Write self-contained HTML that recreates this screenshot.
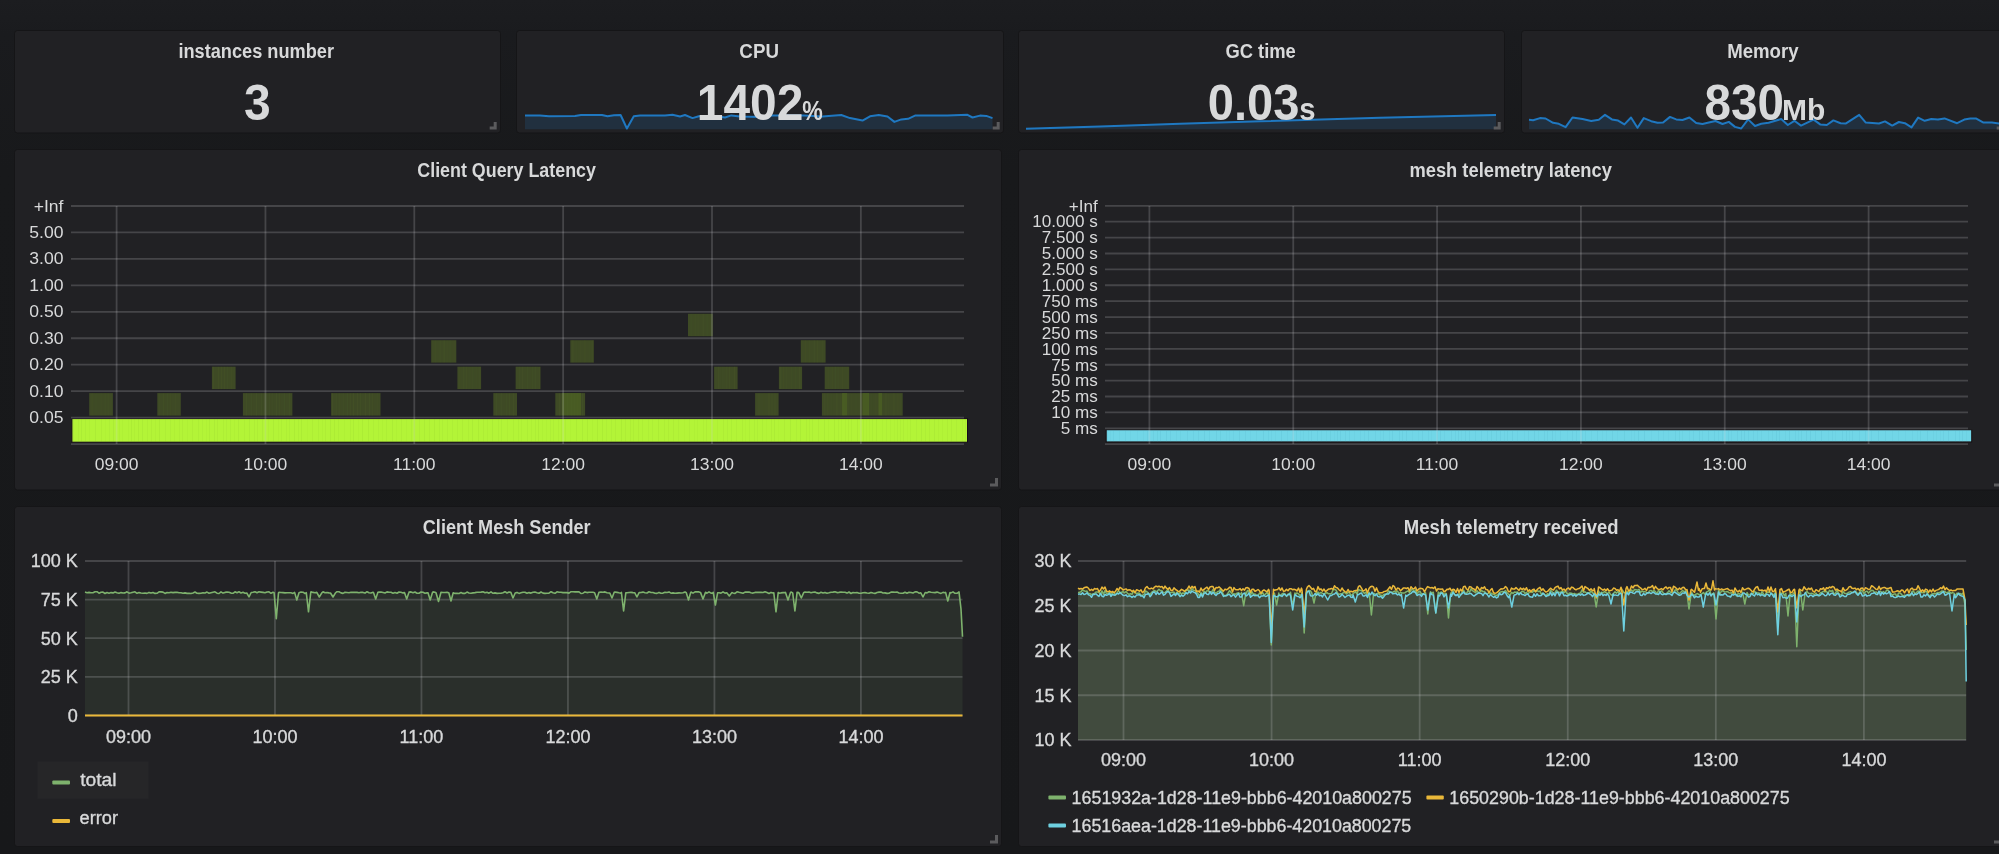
<!DOCTYPE html>
<html><head><meta charset="utf-8"><style>
html,body{margin:0;padding:0;background:#18191b;width:1999px;height:854px;overflow:hidden}
svg{display:block;font-family:"Liberation Sans", sans-serif;will-change:transform}
</style></head><body>
<svg width="1999" height="854" viewBox="0 0 1999 854">
<defs><linearGradient id="bgg" x1="0" y1="0" x2="0" y2="1"><stop offset="0" stop-color="#1c1d20"/><stop offset="0.04" stop-color="#1a1b1e"/><stop offset="0.2" stop-color="#18191b"/><stop offset="1" stop-color="#17181a"/></linearGradient></defs>
<rect width="1999" height="854" fill="url(#bgg)"/>
<rect x="14.5" y="30.5" width="486" height="102.5" rx="3" ry="3" fill="#212124" stroke="#151517" stroke-width="1"/>
<rect x="516.5" y="30.5" width="487" height="102.5" rx="3" ry="3" fill="#212124" stroke="#151517" stroke-width="1"/>
<rect x="1018.5" y="30.5" width="486" height="102.5" rx="3" ry="3" fill="#212124" stroke="#151517" stroke-width="1"/>
<rect x="1521.5" y="30.5" width="486" height="102.5" rx="3" ry="3" fill="#212124" stroke="#151517" stroke-width="1"/>
<path d="M525.0 115.4 L540.0 115.5 L549.0 116.3 L575.0 116.0 L581.0 115.0 L602.0 115.0 L607.5 116.3 L614.0 115.3 L620.6 115.0 L626.9 128.5 L633.8 116.3 L640.0 115.4 L665.0 115.6 L672.5 114.8 L680.0 116.5 L685.0 115.0 L692.5 118.1 L698.8 116.3 L715.0 116.0 L725.0 117.5 L731.3 115.4 L740.0 116.5 L760.0 116.9 L772.5 115.6 L803.8 115.4 L822.5 116.5 L841.3 115.0 L850.0 118.1 L862.5 120.6 L870.0 116.3 L878.8 115.0 L887.5 116.5 L894.4 121.9 L901.3 119.4 L908.1 118.8 L915.0 115.6 L947.5 115.6 L967.5 114.8 L972.5 117.5 L980.0 115.6 L986.3 115.9 L992.5 118.1 L992.5 129.2 L525.0 129.2 Z" fill="rgba(31,118,189,0.18)"/>
<path d="M525.0 115.4 L540.0 115.5 L549.0 116.3 L575.0 116.0 L581.0 115.0 L602.0 115.0 L607.5 116.3 L614.0 115.3 L620.6 115.0 L626.9 128.5 L633.8 116.3 L640.0 115.4 L665.0 115.6 L672.5 114.8 L680.0 116.5 L685.0 115.0 L692.5 118.1 L698.8 116.3 L715.0 116.0 L725.0 117.5 L731.3 115.4 L740.0 116.5 L760.0 116.9 L772.5 115.6 L803.8 115.4 L822.5 116.5 L841.3 115.0 L850.0 118.1 L862.5 120.6 L870.0 116.3 L878.8 115.0 L887.5 116.5 L894.4 121.9 L901.3 119.4 L908.1 118.8 L915.0 115.6 L947.5 115.6 L967.5 114.8 L972.5 117.5 L980.0 115.6 L986.3 115.9 L992.5 118.1" fill="none" stroke="#1f78c1" stroke-width="2" stroke-linejoin="round"/>
<path d="M1026.0 128.8 L1100.0 126.4 L1180.0 123.8 L1260.0 121.3 L1380.0 117.8 L1496.0 115.0 L1496.0 129.2 L1026.0 129.2 Z" fill="rgba(31,118,189,0.18)"/>
<path d="M1026.0 128.8 L1100.0 126.4 L1180.0 123.8 L1260.0 121.3 L1380.0 117.8 L1496.0 115.0" fill="none" stroke="#1f78c1" stroke-width="2" stroke-linejoin="round"/>
<path d="M1529.0 119.8 L1533.1 120.2 L1540.0 118.1 L1545.6 118.5 L1553.1 122.8 L1558.8 123.8 L1565.6 127.2 L1572.5 117.5 L1582.5 119.1 L1591.2 121.0 L1598.8 119.8 L1605.0 114.8 L1611.9 119.4 L1618.1 120.6 L1624.4 124.4 L1631.0 117.5 L1637.5 127.8 L1643.8 118.1 L1651.2 121.2 L1657.5 122.8 L1663.1 122.5 L1670.0 116.9 L1676.2 119.4 L1682.5 120.0 L1689.4 117.5 L1696.2 123.1 L1702.5 124.0 L1708.8 122.5 L1715.6 121.0 L1722.5 124.0 L1728.8 121.9 L1735.0 126.9 L1741.2 128.5 L1748.1 119.4 L1755.0 126.0 L1761.2 123.8 L1768.6 122.8 L1781.2 119.0 L1787.8 125.0 L1794.4 120.8 L1801.0 125.6 L1813.6 119.6 L1820.2 124.4 L1826.8 125.0 L1833.4 120.4 L1840.6 123.2 L1846.0 123.4 L1859.2 114.8 L1865.8 122.6 L1879.0 123.5 L1885.0 121.4 L1892.2 125.6 L1898.9 122.0 L1904.9 123.2 L1911.5 127.4 L1918.1 117.6 L1924.7 120.8 L1931.3 119.0 L1937.9 119.6 L1944.5 118.4 L1957.1 123.2 L1964.3 119.6 L1970.3 118.4 L1976.3 118.6 L1983.5 122.6 L1991.9 122.6 L2001.0 123.8 L2001.0 129.2 L1529.0 129.2 Z" fill="rgba(31,118,189,0.18)"/>
<path d="M1529.0 119.8 L1533.1 120.2 L1540.0 118.1 L1545.6 118.5 L1553.1 122.8 L1558.8 123.8 L1565.6 127.2 L1572.5 117.5 L1582.5 119.1 L1591.2 121.0 L1598.8 119.8 L1605.0 114.8 L1611.9 119.4 L1618.1 120.6 L1624.4 124.4 L1631.0 117.5 L1637.5 127.8 L1643.8 118.1 L1651.2 121.2 L1657.5 122.8 L1663.1 122.5 L1670.0 116.9 L1676.2 119.4 L1682.5 120.0 L1689.4 117.5 L1696.2 123.1 L1702.5 124.0 L1708.8 122.5 L1715.6 121.0 L1722.5 124.0 L1728.8 121.9 L1735.0 126.9 L1741.2 128.5 L1748.1 119.4 L1755.0 126.0 L1761.2 123.8 L1768.6 122.8 L1781.2 119.0 L1787.8 125.0 L1794.4 120.8 L1801.0 125.6 L1813.6 119.6 L1820.2 124.4 L1826.8 125.0 L1833.4 120.4 L1840.6 123.2 L1846.0 123.4 L1859.2 114.8 L1865.8 122.6 L1879.0 123.5 L1885.0 121.4 L1892.2 125.6 L1898.9 122.0 L1904.9 123.2 L1911.5 127.4 L1918.1 117.6 L1924.7 120.8 L1931.3 119.0 L1937.9 119.6 L1944.5 118.4 L1957.1 123.2 L1964.3 119.6 L1970.3 118.4 L1976.3 118.6 L1983.5 122.6 L1991.9 122.6 L2001.0 123.8" fill="none" stroke="#1f78c1" stroke-width="2" stroke-linejoin="round"/>
<path d="M493.7 122.0h3v7.5h-7.0v-3h4.0z" fill="#5b5b5d"/>
<path d="M996.7 122.0h3v7.5h-7.0v-3h4.0z" fill="#5b5b5d"/>
<path d="M1497.7 122.0h3v7.5h-7.0v-3h4.0z" fill="#5b5b5d"/>
<path d="M2000.7 122.0h3v7.5h-7.0v-3h4.0z" fill="#5b5b5d"/>
<text x="178.39" y="58.2" font-size="20" font-weight="bold" fill="#d8d9da" textLength="155.67" lengthAdjust="spacingAndGlyphs">instances number</text>
<text x="739.36" y="58.3" font-size="20" font-weight="bold" fill="#d8d9da" textLength="39.59" lengthAdjust="spacingAndGlyphs">CPU</text>
<text x="1225.38" y="58.3" font-size="20" font-weight="bold" fill="#d8d9da" textLength="70.45" lengthAdjust="spacingAndGlyphs">GC time</text>
<text x="1727.17" y="58.3" font-size="20" font-weight="bold" fill="#d8d9da" textLength="71.46" lengthAdjust="spacingAndGlyphs">Memory</text>
<text x="243.94" y="119.8" font-size="50" font-weight="bold" fill="#d8d9da" textLength="26.70" lengthAdjust="spacingAndGlyphs">3</text>
<text x="696.83" y="119.5" font-size="50" font-weight="bold" fill="#d8d9da" textLength="106.51" lengthAdjust="spacingAndGlyphs">1402</text>
<text x="802.14" y="119.5" font-size="27" font-weight="bold" fill="#d8d9da" textLength="20.57" lengthAdjust="spacingAndGlyphs">%</text>
<text x="1207.82" y="119.5" font-size="50" font-weight="bold" fill="#d8d9da" textLength="91.63" lengthAdjust="spacingAndGlyphs">0.03</text>
<text x="1299.35" y="119.5" font-size="31" font-weight="bold" fill="#d8d9da" textLength="16.33" lengthAdjust="spacingAndGlyphs">s</text>
<text x="1704.45" y="119.5" font-size="50" font-weight="bold" fill="#d8d9da" textLength="79.47" lengthAdjust="spacingAndGlyphs">830</text>
<text x="1782.00" y="119.5" font-size="30" font-weight="bold" fill="#d8d9da" textLength="43.33" lengthAdjust="spacingAndGlyphs">Mb</text>
<rect x="14.5" y="149.5" width="987" height="340.5" rx="3" ry="3" fill="#212124" stroke="#151517" stroke-width="1"/>
<text x="417.31" y="177.2" font-size="20" font-weight="bold" fill="#d8d9da" textLength="178.65" lengthAdjust="spacingAndGlyphs">Client Query Latency</text>
<rect x="688" y="313.8" width="24.8" height="22.4" fill="#3e4a25"/>
<rect x="690.6" y="313.8" width="1" height="22.4" fill="rgba(80,100,45,0.17)"/>
<rect x="694.6" y="313.8" width="1" height="22.4" fill="rgba(80,100,45,0.15)"/>
<rect x="697.6" y="313.8" width="1" height="22.4" fill="rgba(80,100,45,0.13)"/>
<rect x="702.6" y="313.8" width="1" height="22.4" fill="rgba(80,100,45,0.22)"/>
<rect x="706.6" y="313.8" width="1" height="22.4" fill="rgba(80,100,45,0.17)"/>
<rect x="709.6" y="313.8" width="1" height="22.4" fill="rgba(80,100,45,0.14)"/>
<rect x="431.2" y="340.2" width="25.1" height="22.4" fill="#3e4a25"/>
<rect x="434.6" y="340.2" width="1" height="22.4" fill="rgba(80,100,45,0.15)"/>
<rect x="439.6" y="340.2" width="1" height="22.4" fill="rgba(80,100,45,0.18)"/>
<rect x="443.6" y="340.2" width="1" height="22.4" fill="rgba(80,100,45,0.25)"/>
<rect x="446.6" y="340.2" width="1" height="22.4" fill="rgba(80,100,45,0.13)"/>
<rect x="449.6" y="340.2" width="1" height="22.4" fill="rgba(80,100,45,0.17)"/>
<rect x="453.6" y="340.2" width="1" height="22.4" fill="rgba(80,100,45,0.12)"/>
<rect x="570.3" y="340.2" width="23.5" height="22.4" fill="#3e4a25"/>
<rect x="572.4" y="340.2" width="1" height="22.4" fill="rgba(80,100,45,0.24)"/>
<rect x="576.4" y="340.2" width="1" height="22.4" fill="rgba(80,100,45,0.09)"/>
<rect x="580.4" y="340.2" width="1" height="22.4" fill="rgba(80,100,45,0.11)"/>
<rect x="584.4" y="340.2" width="1" height="22.4" fill="rgba(80,100,45,0.19)"/>
<rect x="589.4" y="340.2" width="1" height="22.4" fill="rgba(80,100,45,0.09)"/>
<rect x="592.4" y="340.2" width="1" height="22.4" fill="rgba(80,100,45,0.16)"/>
<rect x="800.8" y="340.2" width="24.8" height="22.4" fill="#3e4a25"/>
<rect x="804.7" y="340.2" width="1" height="22.4" fill="rgba(80,100,45,0.16)"/>
<rect x="808.7" y="340.2" width="1" height="22.4" fill="rgba(80,100,45,0.18)"/>
<rect x="813.7" y="340.2" width="1" height="22.4" fill="rgba(80,100,45,0.22)"/>
<rect x="816.7" y="340.2" width="1" height="22.4" fill="rgba(80,100,45,0.19)"/>
<rect x="821.7" y="340.2" width="1" height="22.4" fill="rgba(80,100,45,0.15)"/>
<rect x="211.9" y="366.7" width="23.7" height="22.4" fill="#3e4a25"/>
<rect x="213.2" y="366.7" width="1" height="22.4" fill="rgba(80,100,45,0.24)"/>
<rect x="218.2" y="366.7" width="1" height="22.4" fill="rgba(80,100,45,0.24)"/>
<rect x="221.2" y="366.7" width="1" height="22.4" fill="rgba(80,100,45,0.24)"/>
<rect x="224.2" y="366.7" width="1" height="22.4" fill="rgba(80,100,45,0.24)"/>
<rect x="227.2" y="366.7" width="1" height="22.4" fill="rgba(80,100,45,0.17)"/>
<rect x="231.2" y="366.7" width="1" height="22.4" fill="rgba(80,100,45,0.16)"/>
<rect x="457.4" y="366.7" width="23.7" height="22.4" fill="#3e4a25"/>
<rect x="459.3" y="366.7" width="1" height="22.4" fill="rgba(80,100,45,0.12)"/>
<rect x="463.3" y="366.7" width="1" height="22.4" fill="rgba(80,100,45,0.24)"/>
<rect x="466.3" y="366.7" width="1" height="22.4" fill="rgba(80,100,45,0.19)"/>
<rect x="469.3" y="366.7" width="1" height="22.4" fill="rgba(80,100,45,0.14)"/>
<rect x="472.3" y="366.7" width="1" height="22.4" fill="rgba(80,100,45,0.17)"/>
<rect x="476.3" y="366.7" width="1" height="22.4" fill="rgba(80,100,45,0.10)"/>
<rect x="479.3" y="366.7" width="1" height="22.4" fill="rgba(80,100,45,0.18)"/>
<rect x="515.6" y="366.7" width="24.9" height="22.4" fill="#3e4a25"/>
<rect x="518.8" y="366.7" width="1" height="22.4" fill="rgba(80,100,45,0.17)"/>
<rect x="521.8" y="366.7" width="1" height="22.4" fill="rgba(80,100,45,0.22)"/>
<rect x="526.8" y="366.7" width="1" height="22.4" fill="rgba(80,100,45,0.17)"/>
<rect x="531.8" y="366.7" width="1" height="22.4" fill="rgba(80,100,45,0.15)"/>
<rect x="534.8" y="366.7" width="1" height="22.4" fill="rgba(80,100,45,0.21)"/>
<rect x="538.8" y="366.7" width="1" height="22.4" fill="rgba(80,100,45,0.12)"/>
<rect x="714.1" y="366.7" width="23.5" height="22.4" fill="#3e4a25"/>
<rect x="717.9" y="366.7" width="1" height="22.4" fill="rgba(80,100,45,0.16)"/>
<rect x="721.9" y="366.7" width="1" height="22.4" fill="rgba(80,100,45,0.08)"/>
<rect x="725.9" y="366.7" width="1" height="22.4" fill="rgba(80,100,45,0.14)"/>
<rect x="728.9" y="366.7" width="1" height="22.4" fill="rgba(80,100,45,0.16)"/>
<rect x="733.9" y="366.7" width="1" height="22.4" fill="rgba(80,100,45,0.23)"/>
<rect x="778.9" y="366.7" width="23.2" height="22.4" fill="#3e4a25"/>
<rect x="780.3" y="366.7" width="1" height="22.4" fill="rgba(80,100,45,0.23)"/>
<rect x="783.3" y="366.7" width="1" height="22.4" fill="rgba(80,100,45,0.16)"/>
<rect x="786.3" y="366.7" width="1" height="22.4" fill="rgba(80,100,45,0.15)"/>
<rect x="791.3" y="366.7" width="1" height="22.4" fill="rgba(80,100,45,0.17)"/>
<rect x="795.3" y="366.7" width="1" height="22.4" fill="rgba(80,100,45,0.17)"/>
<rect x="799.3" y="366.7" width="1" height="22.4" fill="rgba(80,100,45,0.23)"/>
<rect x="824.7" y="366.7" width="24.5" height="22.4" fill="#3e4a25"/>
<rect x="828.2" y="366.7" width="1" height="22.4" fill="rgba(80,100,45,0.11)"/>
<rect x="832.2" y="366.7" width="1" height="22.4" fill="rgba(80,100,45,0.14)"/>
<rect x="835.2" y="366.7" width="1" height="22.4" fill="rgba(80,100,45,0.17)"/>
<rect x="838.2" y="366.7" width="1" height="22.4" fill="rgba(80,100,45,0.09)"/>
<rect x="842.2" y="366.7" width="1" height="22.4" fill="rgba(80,100,45,0.16)"/>
<rect x="847.2" y="366.7" width="1" height="22.4" fill="rgba(80,100,45,0.09)"/>
<rect x="89.2" y="393.1" width="23.7" height="22.5" fill="#3e4a25"/>
<rect x="91.6" y="393.1" width="1" height="22.5" fill="rgba(80,100,45,0.19)"/>
<rect x="95.6" y="393.1" width="1" height="22.5" fill="rgba(80,100,45,0.10)"/>
<rect x="100.6" y="393.1" width="1" height="22.5" fill="rgba(80,100,45,0.13)"/>
<rect x="104.6" y="393.1" width="1" height="22.5" fill="rgba(80,100,45,0.18)"/>
<rect x="107.6" y="393.1" width="1" height="22.5" fill="rgba(80,100,45,0.18)"/>
<rect x="157.3" y="393.1" width="23.5" height="22.5" fill="#3e4a25"/>
<rect x="159.2" y="393.1" width="1" height="22.5" fill="rgba(80,100,45,0.13)"/>
<rect x="163.2" y="393.1" width="1" height="22.5" fill="rgba(80,100,45,0.19)"/>
<rect x="167.2" y="393.1" width="1" height="22.5" fill="rgba(80,100,45,0.17)"/>
<rect x="170.2" y="393.1" width="1" height="22.5" fill="rgba(80,100,45,0.14)"/>
<rect x="175.2" y="393.1" width="1" height="22.5" fill="rgba(80,100,45,0.12)"/>
<rect x="242.9" y="393.1" width="49.5" height="22.5" fill="#3e4a25"/>
<rect x="246.1" y="393.1" width="1" height="22.5" fill="rgba(80,100,45,0.22)"/>
<rect x="251.1" y="393.1" width="1" height="22.5" fill="rgba(80,100,45,0.15)"/>
<rect x="256.1" y="393.1" width="1" height="22.5" fill="rgba(80,100,45,0.22)"/>
<rect x="261.1" y="393.1" width="1" height="22.5" fill="rgba(80,100,45,0.20)"/>
<rect x="265.1" y="393.1" width="1" height="22.5" fill="rgba(80,100,45,0.10)"/>
<rect x="269.1" y="393.1" width="1" height="22.5" fill="rgba(80,100,45,0.15)"/>
<rect x="272.1" y="393.1" width="1" height="22.5" fill="rgba(80,100,45,0.11)"/>
<rect x="276.1" y="393.1" width="1" height="22.5" fill="rgba(80,100,45,0.22)"/>
<rect x="279.1" y="393.1" width="1" height="22.5" fill="rgba(80,100,45,0.16)"/>
<rect x="284.1" y="393.1" width="1" height="22.5" fill="rgba(80,100,45,0.17)"/>
<rect x="289.1" y="393.1" width="1" height="22.5" fill="rgba(80,100,45,0.19)"/>
<rect x="331.1" y="393.1" width="49.4" height="22.5" fill="#3e4a25"/>
<rect x="332.1" y="393.1" width="1" height="22.5" fill="rgba(80,100,45,0.23)"/>
<rect x="336.1" y="393.1" width="1" height="22.5" fill="rgba(80,100,45,0.09)"/>
<rect x="339.1" y="393.1" width="1" height="22.5" fill="rgba(80,100,45,0.13)"/>
<rect x="343.1" y="393.1" width="1" height="22.5" fill="rgba(80,100,45,0.10)"/>
<rect x="347.1" y="393.1" width="1" height="22.5" fill="rgba(80,100,45,0.17)"/>
<rect x="350.1" y="393.1" width="1" height="22.5" fill="rgba(80,100,45,0.16)"/>
<rect x="353.1" y="393.1" width="1" height="22.5" fill="rgba(80,100,45,0.25)"/>
<rect x="357.1" y="393.1" width="1" height="22.5" fill="rgba(80,100,45,0.23)"/>
<rect x="360.1" y="393.1" width="1" height="22.5" fill="rgba(80,100,45,0.19)"/>
<rect x="365.1" y="393.1" width="1" height="22.5" fill="rgba(80,100,45,0.23)"/>
<rect x="369.1" y="393.1" width="1" height="22.5" fill="rgba(80,100,45,0.24)"/>
<rect x="372.1" y="393.1" width="1" height="22.5" fill="rgba(80,100,45,0.16)"/>
<rect x="377.1" y="393.1" width="1" height="22.5" fill="rgba(80,100,45,0.11)"/>
<rect x="493.3" y="393.1" width="23.7" height="22.5" fill="#3e4a25"/>
<rect x="495.8" y="393.1" width="1" height="22.5" fill="rgba(80,100,45,0.20)"/>
<rect x="500.8" y="393.1" width="1" height="22.5" fill="rgba(80,100,45,0.21)"/>
<rect x="505.8" y="393.1" width="1" height="22.5" fill="rgba(80,100,45,0.15)"/>
<rect x="508.8" y="393.1" width="1" height="22.5" fill="rgba(80,100,45,0.19)"/>
<rect x="512.8" y="393.1" width="1" height="22.5" fill="rgba(80,100,45,0.23)"/>
<rect x="555.3" y="393.1" width="29.8" height="22.5" fill="#3e4a25"/>
<rect x="559.0" y="393.1" width="1" height="22.5" fill="rgba(80,100,45,0.22)"/>
<rect x="563.0" y="393.1" width="1" height="22.5" fill="rgba(80,100,45,0.11)"/>
<rect x="567.0" y="393.1" width="1" height="22.5" fill="rgba(80,100,45,0.21)"/>
<rect x="571.0" y="393.1" width="1" height="22.5" fill="rgba(80,100,45,0.21)"/>
<rect x="574.0" y="393.1" width="1" height="22.5" fill="rgba(80,100,45,0.13)"/>
<rect x="577.0" y="393.1" width="1" height="22.5" fill="rgba(80,100,45,0.12)"/>
<rect x="582.0" y="393.1" width="1" height="22.5" fill="rgba(80,100,45,0.21)"/>
<rect x="755.1" y="393.1" width="23.5" height="22.5" fill="#3e4a25"/>
<rect x="758.5" y="393.1" width="1" height="22.5" fill="rgba(80,100,45,0.16)"/>
<rect x="763.5" y="393.1" width="1" height="22.5" fill="rgba(80,100,45,0.11)"/>
<rect x="768.5" y="393.1" width="1" height="22.5" fill="rgba(80,100,45,0.25)"/>
<rect x="771.5" y="393.1" width="1" height="22.5" fill="rgba(80,100,45,0.16)"/>
<rect x="774.5" y="393.1" width="1" height="22.5" fill="rgba(80,100,45,0.18)"/>
<rect x="821.9" y="393.1" width="80.8" height="22.5" fill="#3e4a25"/>
<rect x="824.4" y="393.1" width="1" height="22.5" fill="rgba(80,100,45,0.21)"/>
<rect x="827.4" y="393.1" width="1" height="22.5" fill="rgba(80,100,45,0.15)"/>
<rect x="831.4" y="393.1" width="1" height="22.5" fill="rgba(80,100,45,0.09)"/>
<rect x="836.4" y="393.1" width="1" height="22.5" fill="rgba(80,100,45,0.24)"/>
<rect x="840.4" y="393.1" width="1" height="22.5" fill="rgba(80,100,45,0.16)"/>
<rect x="843.4" y="393.1" width="1" height="22.5" fill="rgba(80,100,45,0.24)"/>
<rect x="847.4" y="393.1" width="1" height="22.5" fill="rgba(80,100,45,0.24)"/>
<rect x="851.4" y="393.1" width="1" height="22.5" fill="rgba(80,100,45,0.11)"/>
<rect x="855.4" y="393.1" width="1" height="22.5" fill="rgba(80,100,45,0.10)"/>
<rect x="860.4" y="393.1" width="1" height="22.5" fill="rgba(80,100,45,0.16)"/>
<rect x="864.4" y="393.1" width="1" height="22.5" fill="rgba(80,100,45,0.10)"/>
<rect x="868.4" y="393.1" width="1" height="22.5" fill="rgba(80,100,45,0.17)"/>
<rect x="871.4" y="393.1" width="1" height="22.5" fill="rgba(80,100,45,0.09)"/>
<rect x="875.4" y="393.1" width="1" height="22.5" fill="rgba(80,100,45,0.12)"/>
<rect x="879.4" y="393.1" width="1" height="22.5" fill="rgba(80,100,45,0.10)"/>
<rect x="882.4" y="393.1" width="1" height="22.5" fill="rgba(80,100,45,0.14)"/>
<rect x="885.4" y="393.1" width="1" height="22.5" fill="rgba(80,100,45,0.23)"/>
<rect x="888.4" y="393.1" width="1" height="22.5" fill="rgba(80,100,45,0.11)"/>
<rect x="893.4" y="393.1" width="1" height="22.5" fill="rgba(80,100,45,0.23)"/>
<rect x="897.4" y="393.1" width="1" height="22.5" fill="rgba(80,100,45,0.12)"/>
<rect x="900.4" y="393.1" width="1" height="22.5" fill="rgba(80,100,45,0.09)"/>
<rect x="842" y="393" width="5" height="22.3" fill="rgba(80,105,35,0.55)"/>
<rect x="862.5" y="393" width="6.5" height="22.3" fill="rgba(80,105,35,0.55)"/>
<rect x="878.5" y="393" width="3.5" height="22.3" fill="rgba(80,105,35,0.55)"/>
<rect x="562" y="393" width="19" height="22.3" fill="rgba(80,105,35,0.55)"/>
<rect x="71.9" y="418.6" width="895.6" height="23.6" fill="#b3f437" stroke="#140a1a" stroke-width="1"/>
<rect x="73.0" y="419.2" width="0.8" height="22.4" fill="rgba(120,170,40,0.11)"/>
<rect x="78.0" y="419.2" width="0.8" height="22.4" fill="rgba(120,170,40,0.12)"/>
<rect x="81.0" y="419.2" width="0.8" height="22.4" fill="rgba(120,170,40,0.13)"/>
<rect x="85.0" y="419.2" width="0.8" height="22.4" fill="rgba(120,170,40,0.11)"/>
<rect x="89.0" y="419.2" width="0.8" height="22.4" fill="rgba(120,170,40,0.06)"/>
<rect x="95.0" y="419.2" width="0.8" height="22.4" fill="rgba(120,170,40,0.13)"/>
<rect x="101.0" y="419.2" width="0.8" height="22.4" fill="rgba(120,170,40,0.10)"/>
<rect x="105.0" y="419.2" width="0.8" height="22.4" fill="rgba(120,170,40,0.05)"/>
<rect x="109.0" y="419.2" width="0.8" height="22.4" fill="rgba(120,170,40,0.09)"/>
<rect x="113.0" y="419.2" width="0.8" height="22.4" fill="rgba(120,170,40,0.13)"/>
<rect x="119.0" y="419.2" width="0.8" height="22.4" fill="rgba(120,170,40,0.06)"/>
<rect x="122.0" y="419.2" width="0.8" height="22.4" fill="rgba(120,170,40,0.06)"/>
<rect x="128.0" y="419.2" width="0.8" height="22.4" fill="rgba(120,170,40,0.06)"/>
<rect x="131.0" y="419.2" width="0.8" height="22.4" fill="rgba(120,170,40,0.14)"/>
<rect x="134.0" y="419.2" width="0.8" height="22.4" fill="rgba(120,170,40,0.07)"/>
<rect x="138.0" y="419.2" width="0.8" height="22.4" fill="rgba(120,170,40,0.14)"/>
<rect x="142.0" y="419.2" width="0.8" height="22.4" fill="rgba(120,170,40,0.13)"/>
<rect x="147.0" y="419.2" width="0.8" height="22.4" fill="rgba(120,170,40,0.08)"/>
<rect x="151.0" y="419.2" width="0.8" height="22.4" fill="rgba(120,170,40,0.10)"/>
<rect x="155.0" y="419.2" width="0.8" height="22.4" fill="rgba(120,170,40,0.07)"/>
<rect x="159.0" y="419.2" width="0.8" height="22.4" fill="rgba(120,170,40,0.14)"/>
<rect x="165.0" y="419.2" width="0.8" height="22.4" fill="rgba(120,170,40,0.08)"/>
<rect x="170.0" y="419.2" width="0.8" height="22.4" fill="rgba(120,170,40,0.09)"/>
<rect x="174.0" y="419.2" width="0.8" height="22.4" fill="rgba(120,170,40,0.07)"/>
<rect x="179.0" y="419.2" width="0.8" height="22.4" fill="rgba(120,170,40,0.08)"/>
<rect x="182.0" y="419.2" width="0.8" height="22.4" fill="rgba(120,170,40,0.10)"/>
<rect x="187.0" y="419.2" width="0.8" height="22.4" fill="rgba(120,170,40,0.06)"/>
<rect x="192.0" y="419.2" width="0.8" height="22.4" fill="rgba(120,170,40,0.12)"/>
<rect x="198.0" y="419.2" width="0.8" height="22.4" fill="rgba(120,170,40,0.11)"/>
<rect x="202.0" y="419.2" width="0.8" height="22.4" fill="rgba(120,170,40,0.09)"/>
<rect x="206.0" y="419.2" width="0.8" height="22.4" fill="rgba(120,170,40,0.06)"/>
<rect x="209.0" y="419.2" width="0.8" height="22.4" fill="rgba(120,170,40,0.14)"/>
<rect x="214.0" y="419.2" width="0.8" height="22.4" fill="rgba(120,170,40,0.13)"/>
<rect x="217.0" y="419.2" width="0.8" height="22.4" fill="rgba(120,170,40,0.10)"/>
<rect x="223.0" y="419.2" width="0.8" height="22.4" fill="rgba(120,170,40,0.08)"/>
<rect x="226.0" y="419.2" width="0.8" height="22.4" fill="rgba(120,170,40,0.09)"/>
<rect x="230.0" y="419.2" width="0.8" height="22.4" fill="rgba(120,170,40,0.11)"/>
<rect x="234.0" y="419.2" width="0.8" height="22.4" fill="rgba(120,170,40,0.06)"/>
<rect x="238.0" y="419.2" width="0.8" height="22.4" fill="rgba(120,170,40,0.13)"/>
<rect x="244.0" y="419.2" width="0.8" height="22.4" fill="rgba(120,170,40,0.08)"/>
<rect x="249.0" y="419.2" width="0.8" height="22.4" fill="rgba(120,170,40,0.13)"/>
<rect x="254.0" y="419.2" width="0.8" height="22.4" fill="rgba(120,170,40,0.12)"/>
<rect x="257.0" y="419.2" width="0.8" height="22.4" fill="rgba(120,170,40,0.10)"/>
<rect x="262.0" y="419.2" width="0.8" height="22.4" fill="rgba(120,170,40,0.13)"/>
<rect x="265.0" y="419.2" width="0.8" height="22.4" fill="rgba(120,170,40,0.09)"/>
<rect x="268.0" y="419.2" width="0.8" height="22.4" fill="rgba(120,170,40,0.07)"/>
<rect x="273.0" y="419.2" width="0.8" height="22.4" fill="rgba(120,170,40,0.13)"/>
<rect x="278.0" y="419.2" width="0.8" height="22.4" fill="rgba(120,170,40,0.07)"/>
<rect x="281.0" y="419.2" width="0.8" height="22.4" fill="rgba(120,170,40,0.08)"/>
<rect x="286.0" y="419.2" width="0.8" height="22.4" fill="rgba(120,170,40,0.08)"/>
<rect x="289.0" y="419.2" width="0.8" height="22.4" fill="rgba(120,170,40,0.11)"/>
<rect x="294.0" y="419.2" width="0.8" height="22.4" fill="rgba(120,170,40,0.14)"/>
<rect x="298.0" y="419.2" width="0.8" height="22.4" fill="rgba(120,170,40,0.11)"/>
<rect x="301.0" y="419.2" width="0.8" height="22.4" fill="rgba(120,170,40,0.14)"/>
<rect x="307.0" y="419.2" width="0.8" height="22.4" fill="rgba(120,170,40,0.05)"/>
<rect x="312.0" y="419.2" width="0.8" height="22.4" fill="rgba(120,170,40,0.12)"/>
<rect x="318.0" y="419.2" width="0.8" height="22.4" fill="rgba(120,170,40,0.11)"/>
<rect x="322.0" y="419.2" width="0.8" height="22.4" fill="rgba(120,170,40,0.06)"/>
<rect x="325.0" y="419.2" width="0.8" height="22.4" fill="rgba(120,170,40,0.12)"/>
<rect x="330.0" y="419.2" width="0.8" height="22.4" fill="rgba(120,170,40,0.13)"/>
<rect x="334.0" y="419.2" width="0.8" height="22.4" fill="rgba(120,170,40,0.14)"/>
<rect x="338.0" y="419.2" width="0.8" height="22.4" fill="rgba(120,170,40,0.11)"/>
<rect x="344.0" y="419.2" width="0.8" height="22.4" fill="rgba(120,170,40,0.06)"/>
<rect x="350.0" y="419.2" width="0.8" height="22.4" fill="rgba(120,170,40,0.08)"/>
<rect x="353.0" y="419.2" width="0.8" height="22.4" fill="rgba(120,170,40,0.13)"/>
<rect x="358.0" y="419.2" width="0.8" height="22.4" fill="rgba(120,170,40,0.06)"/>
<rect x="362.0" y="419.2" width="0.8" height="22.4" fill="rgba(120,170,40,0.14)"/>
<rect x="368.0" y="419.2" width="0.8" height="22.4" fill="rgba(120,170,40,0.14)"/>
<rect x="373.0" y="419.2" width="0.8" height="22.4" fill="rgba(120,170,40,0.09)"/>
<rect x="378.0" y="419.2" width="0.8" height="22.4" fill="rgba(120,170,40,0.09)"/>
<rect x="382.0" y="419.2" width="0.8" height="22.4" fill="rgba(120,170,40,0.06)"/>
<rect x="386.0" y="419.2" width="0.8" height="22.4" fill="rgba(120,170,40,0.11)"/>
<rect x="392.0" y="419.2" width="0.8" height="22.4" fill="rgba(120,170,40,0.13)"/>
<rect x="396.0" y="419.2" width="0.8" height="22.4" fill="rgba(120,170,40,0.06)"/>
<rect x="401.0" y="419.2" width="0.8" height="22.4" fill="rgba(120,170,40,0.10)"/>
<rect x="406.0" y="419.2" width="0.8" height="22.4" fill="rgba(120,170,40,0.06)"/>
<rect x="411.0" y="419.2" width="0.8" height="22.4" fill="rgba(120,170,40,0.11)"/>
<rect x="414.0" y="419.2" width="0.8" height="22.4" fill="rgba(120,170,40,0.12)"/>
<rect x="419.0" y="419.2" width="0.8" height="22.4" fill="rgba(120,170,40,0.10)"/>
<rect x="424.0" y="419.2" width="0.8" height="22.4" fill="rgba(120,170,40,0.13)"/>
<rect x="429.0" y="419.2" width="0.8" height="22.4" fill="rgba(120,170,40,0.12)"/>
<rect x="434.0" y="419.2" width="0.8" height="22.4" fill="rgba(120,170,40,0.14)"/>
<rect x="439.0" y="419.2" width="0.8" height="22.4" fill="rgba(120,170,40,0.11)"/>
<rect x="442.0" y="419.2" width="0.8" height="22.4" fill="rgba(120,170,40,0.09)"/>
<rect x="447.0" y="419.2" width="0.8" height="22.4" fill="rgba(120,170,40,0.08)"/>
<rect x="452.0" y="419.2" width="0.8" height="22.4" fill="rgba(120,170,40,0.09)"/>
<rect x="457.0" y="419.2" width="0.8" height="22.4" fill="rgba(120,170,40,0.08)"/>
<rect x="462.0" y="419.2" width="0.8" height="22.4" fill="rgba(120,170,40,0.12)"/>
<rect x="468.0" y="419.2" width="0.8" height="22.4" fill="rgba(120,170,40,0.08)"/>
<rect x="472.0" y="419.2" width="0.8" height="22.4" fill="rgba(120,170,40,0.13)"/>
<rect x="478.0" y="419.2" width="0.8" height="22.4" fill="rgba(120,170,40,0.14)"/>
<rect x="483.0" y="419.2" width="0.8" height="22.4" fill="rgba(120,170,40,0.10)"/>
<rect x="487.0" y="419.2" width="0.8" height="22.4" fill="rgba(120,170,40,0.07)"/>
<rect x="492.0" y="419.2" width="0.8" height="22.4" fill="rgba(120,170,40,0.13)"/>
<rect x="498.0" y="419.2" width="0.8" height="22.4" fill="rgba(120,170,40,0.08)"/>
<rect x="501.0" y="419.2" width="0.8" height="22.4" fill="rgba(120,170,40,0.11)"/>
<rect x="507.0" y="419.2" width="0.8" height="22.4" fill="rgba(120,170,40,0.07)"/>
<rect x="513.0" y="419.2" width="0.8" height="22.4" fill="rgba(120,170,40,0.08)"/>
<rect x="518.0" y="419.2" width="0.8" height="22.4" fill="rgba(120,170,40,0.11)"/>
<rect x="521.0" y="419.2" width="0.8" height="22.4" fill="rgba(120,170,40,0.07)"/>
<rect x="527.0" y="419.2" width="0.8" height="22.4" fill="rgba(120,170,40,0.11)"/>
<rect x="531.0" y="419.2" width="0.8" height="22.4" fill="rgba(120,170,40,0.07)"/>
<rect x="535.0" y="419.2" width="0.8" height="22.4" fill="rgba(120,170,40,0.11)"/>
<rect x="538.0" y="419.2" width="0.8" height="22.4" fill="rgba(120,170,40,0.14)"/>
<rect x="542.0" y="419.2" width="0.8" height="22.4" fill="rgba(120,170,40,0.06)"/>
<rect x="546.0" y="419.2" width="0.8" height="22.4" fill="rgba(120,170,40,0.06)"/>
<rect x="550.0" y="419.2" width="0.8" height="22.4" fill="rgba(120,170,40,0.09)"/>
<rect x="553.0" y="419.2" width="0.8" height="22.4" fill="rgba(120,170,40,0.09)"/>
<rect x="558.0" y="419.2" width="0.8" height="22.4" fill="rgba(120,170,40,0.08)"/>
<rect x="561.0" y="419.2" width="0.8" height="22.4" fill="rgba(120,170,40,0.10)"/>
<rect x="565.0" y="419.2" width="0.8" height="22.4" fill="rgba(120,170,40,0.11)"/>
<rect x="570.0" y="419.2" width="0.8" height="22.4" fill="rgba(120,170,40,0.05)"/>
<rect x="576.0" y="419.2" width="0.8" height="22.4" fill="rgba(120,170,40,0.14)"/>
<rect x="582.0" y="419.2" width="0.8" height="22.4" fill="rgba(120,170,40,0.13)"/>
<rect x="587.0" y="419.2" width="0.8" height="22.4" fill="rgba(120,170,40,0.14)"/>
<rect x="592.0" y="419.2" width="0.8" height="22.4" fill="rgba(120,170,40,0.06)"/>
<rect x="597.0" y="419.2" width="0.8" height="22.4" fill="rgba(120,170,40,0.14)"/>
<rect x="602.0" y="419.2" width="0.8" height="22.4" fill="rgba(120,170,40,0.14)"/>
<rect x="606.0" y="419.2" width="0.8" height="22.4" fill="rgba(120,170,40,0.09)"/>
<rect x="611.0" y="419.2" width="0.8" height="22.4" fill="rgba(120,170,40,0.09)"/>
<rect x="615.0" y="419.2" width="0.8" height="22.4" fill="rgba(120,170,40,0.10)"/>
<rect x="621.0" y="419.2" width="0.8" height="22.4" fill="rgba(120,170,40,0.14)"/>
<rect x="625.0" y="419.2" width="0.8" height="22.4" fill="rgba(120,170,40,0.10)"/>
<rect x="630.0" y="419.2" width="0.8" height="22.4" fill="rgba(120,170,40,0.12)"/>
<rect x="633.0" y="419.2" width="0.8" height="22.4" fill="rgba(120,170,40,0.08)"/>
<rect x="638.0" y="419.2" width="0.8" height="22.4" fill="rgba(120,170,40,0.10)"/>
<rect x="642.0" y="419.2" width="0.8" height="22.4" fill="rgba(120,170,40,0.08)"/>
<rect x="648.0" y="419.2" width="0.8" height="22.4" fill="rgba(120,170,40,0.09)"/>
<rect x="652.0" y="419.2" width="0.8" height="22.4" fill="rgba(120,170,40,0.09)"/>
<rect x="658.0" y="419.2" width="0.8" height="22.4" fill="rgba(120,170,40,0.14)"/>
<rect x="664.0" y="419.2" width="0.8" height="22.4" fill="rgba(120,170,40,0.08)"/>
<rect x="668.0" y="419.2" width="0.8" height="22.4" fill="rgba(120,170,40,0.10)"/>
<rect x="673.0" y="419.2" width="0.8" height="22.4" fill="rgba(120,170,40,0.12)"/>
<rect x="678.0" y="419.2" width="0.8" height="22.4" fill="rgba(120,170,40,0.09)"/>
<rect x="684.0" y="419.2" width="0.8" height="22.4" fill="rgba(120,170,40,0.05)"/>
<rect x="689.0" y="419.2" width="0.8" height="22.4" fill="rgba(120,170,40,0.09)"/>
<rect x="694.0" y="419.2" width="0.8" height="22.4" fill="rgba(120,170,40,0.06)"/>
<rect x="697.0" y="419.2" width="0.8" height="22.4" fill="rgba(120,170,40,0.06)"/>
<rect x="703.0" y="419.2" width="0.8" height="22.4" fill="rgba(120,170,40,0.07)"/>
<rect x="706.0" y="419.2" width="0.8" height="22.4" fill="rgba(120,170,40,0.12)"/>
<rect x="712.0" y="419.2" width="0.8" height="22.4" fill="rgba(120,170,40,0.05)"/>
<rect x="717.0" y="419.2" width="0.8" height="22.4" fill="rgba(120,170,40,0.07)"/>
<rect x="723.0" y="419.2" width="0.8" height="22.4" fill="rgba(120,170,40,0.12)"/>
<rect x="727.0" y="419.2" width="0.8" height="22.4" fill="rgba(120,170,40,0.09)"/>
<rect x="731.0" y="419.2" width="0.8" height="22.4" fill="rgba(120,170,40,0.11)"/>
<rect x="736.0" y="419.2" width="0.8" height="22.4" fill="rgba(120,170,40,0.08)"/>
<rect x="742.0" y="419.2" width="0.8" height="22.4" fill="rgba(120,170,40,0.10)"/>
<rect x="745.0" y="419.2" width="0.8" height="22.4" fill="rgba(120,170,40,0.05)"/>
<rect x="749.0" y="419.2" width="0.8" height="22.4" fill="rgba(120,170,40,0.08)"/>
<rect x="754.0" y="419.2" width="0.8" height="22.4" fill="rgba(120,170,40,0.11)"/>
<rect x="757.0" y="419.2" width="0.8" height="22.4" fill="rgba(120,170,40,0.09)"/>
<rect x="762.0" y="419.2" width="0.8" height="22.4" fill="rgba(120,170,40,0.11)"/>
<rect x="766.0" y="419.2" width="0.8" height="22.4" fill="rgba(120,170,40,0.05)"/>
<rect x="771.0" y="419.2" width="0.8" height="22.4" fill="rgba(120,170,40,0.10)"/>
<rect x="774.0" y="419.2" width="0.8" height="22.4" fill="rgba(120,170,40,0.13)"/>
<rect x="778.0" y="419.2" width="0.8" height="22.4" fill="rgba(120,170,40,0.05)"/>
<rect x="784.0" y="419.2" width="0.8" height="22.4" fill="rgba(120,170,40,0.10)"/>
<rect x="790.0" y="419.2" width="0.8" height="22.4" fill="rgba(120,170,40,0.13)"/>
<rect x="796.0" y="419.2" width="0.8" height="22.4" fill="rgba(120,170,40,0.09)"/>
<rect x="800.0" y="419.2" width="0.8" height="22.4" fill="rgba(120,170,40,0.13)"/>
<rect x="806.0" y="419.2" width="0.8" height="22.4" fill="rgba(120,170,40,0.12)"/>
<rect x="809.0" y="419.2" width="0.8" height="22.4" fill="rgba(120,170,40,0.08)"/>
<rect x="812.0" y="419.2" width="0.8" height="22.4" fill="rgba(120,170,40,0.11)"/>
<rect x="818.0" y="419.2" width="0.8" height="22.4" fill="rgba(120,170,40,0.10)"/>
<rect x="824.0" y="419.2" width="0.8" height="22.4" fill="rgba(120,170,40,0.13)"/>
<rect x="828.0" y="419.2" width="0.8" height="22.4" fill="rgba(120,170,40,0.06)"/>
<rect x="834.0" y="419.2" width="0.8" height="22.4" fill="rgba(120,170,40,0.14)"/>
<rect x="838.0" y="419.2" width="0.8" height="22.4" fill="rgba(120,170,40,0.09)"/>
<rect x="841.0" y="419.2" width="0.8" height="22.4" fill="rgba(120,170,40,0.06)"/>
<rect x="845.0" y="419.2" width="0.8" height="22.4" fill="rgba(120,170,40,0.07)"/>
<rect x="848.0" y="419.2" width="0.8" height="22.4" fill="rgba(120,170,40,0.12)"/>
<rect x="851.0" y="419.2" width="0.8" height="22.4" fill="rgba(120,170,40,0.08)"/>
<rect x="857.0" y="419.2" width="0.8" height="22.4" fill="rgba(120,170,40,0.14)"/>
<rect x="863.0" y="419.2" width="0.8" height="22.4" fill="rgba(120,170,40,0.11)"/>
<rect x="866.0" y="419.2" width="0.8" height="22.4" fill="rgba(120,170,40,0.06)"/>
<rect x="869.0" y="419.2" width="0.8" height="22.4" fill="rgba(120,170,40,0.07)"/>
<rect x="872.0" y="419.2" width="0.8" height="22.4" fill="rgba(120,170,40,0.11)"/>
<rect x="876.0" y="419.2" width="0.8" height="22.4" fill="rgba(120,170,40,0.14)"/>
<rect x="882.0" y="419.2" width="0.8" height="22.4" fill="rgba(120,170,40,0.06)"/>
<rect x="886.0" y="419.2" width="0.8" height="22.4" fill="rgba(120,170,40,0.09)"/>
<rect x="890.0" y="419.2" width="0.8" height="22.4" fill="rgba(120,170,40,0.06)"/>
<rect x="894.0" y="419.2" width="0.8" height="22.4" fill="rgba(120,170,40,0.05)"/>
<rect x="897.0" y="419.2" width="0.8" height="22.4" fill="rgba(120,170,40,0.11)"/>
<rect x="900.0" y="419.2" width="0.8" height="22.4" fill="rgba(120,170,40,0.08)"/>
<rect x="903.0" y="419.2" width="0.8" height="22.4" fill="rgba(120,170,40,0.12)"/>
<rect x="907.0" y="419.2" width="0.8" height="22.4" fill="rgba(120,170,40,0.05)"/>
<rect x="910.0" y="419.2" width="0.8" height="22.4" fill="rgba(120,170,40,0.08)"/>
<rect x="916.0" y="419.2" width="0.8" height="22.4" fill="rgba(120,170,40,0.09)"/>
<rect x="921.0" y="419.2" width="0.8" height="22.4" fill="rgba(120,170,40,0.13)"/>
<rect x="925.0" y="419.2" width="0.8" height="22.4" fill="rgba(120,170,40,0.11)"/>
<rect x="929.0" y="419.2" width="0.8" height="22.4" fill="rgba(120,170,40,0.10)"/>
<rect x="934.0" y="419.2" width="0.8" height="22.4" fill="rgba(120,170,40,0.13)"/>
<rect x="938.0" y="419.2" width="0.8" height="22.4" fill="rgba(120,170,40,0.07)"/>
<rect x="942.0" y="419.2" width="0.8" height="22.4" fill="rgba(120,170,40,0.07)"/>
<rect x="947.0" y="419.2" width="0.8" height="22.4" fill="rgba(120,170,40,0.10)"/>
<rect x="951.0" y="419.2" width="0.8" height="22.4" fill="rgba(120,170,40,0.12)"/>
<rect x="956.0" y="419.2" width="0.8" height="22.4" fill="rgba(120,170,40,0.09)"/>
<rect x="962.0" y="419.2" width="0.8" height="22.4" fill="rgba(120,170,40,0.07)"/>
<rect x="965.0" y="419.2" width="0.8" height="22.4" fill="rgba(120,170,40,0.11)"/>
<line x1="71" y1="206.00" x2="964" y2="206.00" stroke="rgba(216,217,218,0.2)" stroke-width="1.8"/>
<line x1="71" y1="232.45" x2="964" y2="232.45" stroke="rgba(216,217,218,0.2)" stroke-width="1.8"/>
<line x1="71" y1="258.90" x2="964" y2="258.90" stroke="rgba(216,217,218,0.2)" stroke-width="1.8"/>
<line x1="71" y1="285.35" x2="964" y2="285.35" stroke="rgba(216,217,218,0.2)" stroke-width="1.8"/>
<line x1="71" y1="311.80" x2="964" y2="311.80" stroke="rgba(216,217,218,0.2)" stroke-width="1.8"/>
<line x1="71" y1="338.25" x2="964" y2="338.25" stroke="rgba(216,217,218,0.2)" stroke-width="1.8"/>
<line x1="71" y1="364.70" x2="964" y2="364.70" stroke="rgba(216,217,218,0.2)" stroke-width="1.8"/>
<line x1="71" y1="391.15" x2="964" y2="391.15" stroke="rgba(216,217,218,0.2)" stroke-width="1.8"/>
<line x1="71" y1="417.60" x2="964" y2="417.60" stroke="rgba(216,217,218,0.2)" stroke-width="1.8"/>
<line x1="71" y1="444.05" x2="964" y2="444.05" stroke="rgba(216,217,218,0.2)" stroke-width="1.8"/>
<line x1="116.60" y1="206" x2="116.60" y2="444" stroke="rgba(216,217,218,0.2)" stroke-width="1.8"/>
<line x1="265.45" y1="206" x2="265.45" y2="444" stroke="rgba(216,217,218,0.2)" stroke-width="1.8"/>
<line x1="414.30" y1="206" x2="414.30" y2="444" stroke="rgba(216,217,218,0.2)" stroke-width="1.8"/>
<line x1="563.15" y1="206" x2="563.15" y2="444" stroke="rgba(216,217,218,0.2)" stroke-width="1.8"/>
<line x1="712.00" y1="206" x2="712.00" y2="444" stroke="rgba(216,217,218,0.2)" stroke-width="1.8"/>
<line x1="860.85" y1="206" x2="860.85" y2="444" stroke="rgba(216,217,218,0.2)" stroke-width="1.8"/>
<text x="63.5" y="211.6" font-size="16.5" font-weight="normal" text-anchor="end" fill="#d8d9da" transform="translate(63.5,0) scale(1.065,1) translate(-63.5,0)">+Inf</text>
<text x="63.5" y="238.04999999999998" font-size="16.5" font-weight="normal" text-anchor="end" fill="#d8d9da" transform="translate(63.5,0) scale(1.065,1) translate(-63.5,0)">5.00</text>
<text x="63.5" y="264.5" font-size="16.5" font-weight="normal" text-anchor="end" fill="#d8d9da" transform="translate(63.5,0) scale(1.065,1) translate(-63.5,0)">3.00</text>
<text x="63.5" y="290.95000000000005" font-size="16.5" font-weight="normal" text-anchor="end" fill="#d8d9da" transform="translate(63.5,0) scale(1.065,1) translate(-63.5,0)">1.00</text>
<text x="63.5" y="317.40000000000003" font-size="16.5" font-weight="normal" text-anchor="end" fill="#d8d9da" transform="translate(63.5,0) scale(1.065,1) translate(-63.5,0)">0.50</text>
<text x="63.5" y="343.85" font-size="16.5" font-weight="normal" text-anchor="end" fill="#d8d9da" transform="translate(63.5,0) scale(1.065,1) translate(-63.5,0)">0.30</text>
<text x="63.5" y="370.3" font-size="16.5" font-weight="normal" text-anchor="end" fill="#d8d9da" transform="translate(63.5,0) scale(1.065,1) translate(-63.5,0)">0.20</text>
<text x="63.5" y="396.75" font-size="16.5" font-weight="normal" text-anchor="end" fill="#d8d9da" transform="translate(63.5,0) scale(1.065,1) translate(-63.5,0)">0.10</text>
<text x="63.5" y="423.20000000000005" font-size="16.5" font-weight="normal" text-anchor="end" fill="#d8d9da" transform="translate(63.5,0) scale(1.065,1) translate(-63.5,0)">0.05</text>
<text x="116.6" y="470.3" font-size="16.5" font-weight="normal" text-anchor="middle" fill="#d8d9da" transform="translate(116.6,0) scale(1.06,1) translate(-116.6,0)">09:00</text>
<text x="265.45" y="470.3" font-size="16.5" font-weight="normal" text-anchor="middle" fill="#d8d9da" transform="translate(265.45,0) scale(1.06,1) translate(-265.45,0)">10:00</text>
<text x="414.29999999999995" y="470.3" font-size="16.5" font-weight="normal" text-anchor="middle" fill="#d8d9da" transform="translate(414.29999999999995,0) scale(1.06,1) translate(-414.29999999999995,0)">11:00</text>
<text x="563.15" y="470.3" font-size="16.5" font-weight="normal" text-anchor="middle" fill="#d8d9da" transform="translate(563.15,0) scale(1.06,1) translate(-563.15,0)">12:00</text>
<text x="712.0" y="470.3" font-size="16.5" font-weight="normal" text-anchor="middle" fill="#d8d9da" transform="translate(712.0,0) scale(1.06,1) translate(-712.0,0)">13:00</text>
<text x="860.85" y="470.3" font-size="16.5" font-weight="normal" text-anchor="middle" fill="#d8d9da" transform="translate(860.85,0) scale(1.06,1) translate(-860.85,0)">14:00</text>
<path d="M995 478.0h3v8.5h-8.0v-3h5.0z" fill="#5b5b5d"/>
<rect x="1018.5" y="149.5" width="990" height="340.5" rx="3" ry="3" fill="#212124" stroke="#151517" stroke-width="1"/>
<text x="1409.49" y="177.4" font-size="20" font-weight="bold" fill="#d8d9da" textLength="202.43" lengthAdjust="spacingAndGlyphs">mesh telemetry latency</text>
<rect x="1106.2" y="429.8" width="865.5" height="12.1" fill="#71d6e7" stroke="#160b0c" stroke-width="0.9"/>
<rect x="1107.0" y="430.3" width="0.9" height="11.2" fill="rgba(80,170,190,0.15)"/>
<rect x="1110.0" y="430.3" width="0.9" height="11.2" fill="rgba(80,170,190,0.09)"/>
<rect x="1113.0" y="430.3" width="0.9" height="11.2" fill="rgba(80,170,190,0.14)"/>
<rect x="1119.0" y="430.3" width="0.9" height="11.2" fill="rgba(80,170,190,0.11)"/>
<rect x="1125.0" y="430.3" width="0.9" height="11.2" fill="rgba(80,170,190,0.14)"/>
<rect x="1130.0" y="430.3" width="0.9" height="11.2" fill="rgba(80,170,190,0.09)"/>
<rect x="1137.0" y="430.3" width="0.9" height="11.2" fill="rgba(80,170,190,0.08)"/>
<rect x="1143.0" y="430.3" width="0.9" height="11.2" fill="rgba(80,170,190,0.09)"/>
<rect x="1147.0" y="430.3" width="0.9" height="11.2" fill="rgba(80,170,190,0.19)"/>
<rect x="1153.0" y="430.3" width="0.9" height="11.2" fill="rgba(80,170,190,0.16)"/>
<rect x="1157.0" y="430.3" width="0.9" height="11.2" fill="rgba(80,170,190,0.17)"/>
<rect x="1160.0" y="430.3" width="0.9" height="11.2" fill="rgba(80,170,190,0.20)"/>
<rect x="1166.0" y="430.3" width="0.9" height="11.2" fill="rgba(80,170,190,0.18)"/>
<rect x="1170.0" y="430.3" width="0.9" height="11.2" fill="rgba(80,170,190,0.16)"/>
<rect x="1176.0" y="430.3" width="0.9" height="11.2" fill="rgba(80,170,190,0.12)"/>
<rect x="1180.0" y="430.3" width="0.9" height="11.2" fill="rgba(80,170,190,0.11)"/>
<rect x="1187.0" y="430.3" width="0.9" height="11.2" fill="rgba(80,170,190,0.16)"/>
<rect x="1193.0" y="430.3" width="0.9" height="11.2" fill="rgba(80,170,190,0.13)"/>
<rect x="1198.0" y="430.3" width="0.9" height="11.2" fill="rgba(80,170,190,0.16)"/>
<rect x="1204.0" y="430.3" width="0.9" height="11.2" fill="rgba(80,170,190,0.20)"/>
<rect x="1209.0" y="430.3" width="0.9" height="11.2" fill="rgba(80,170,190,0.14)"/>
<rect x="1216.0" y="430.3" width="0.9" height="11.2" fill="rgba(80,170,190,0.20)"/>
<rect x="1220.0" y="430.3" width="0.9" height="11.2" fill="rgba(80,170,190,0.17)"/>
<rect x="1226.0" y="430.3" width="0.9" height="11.2" fill="rgba(80,170,190,0.09)"/>
<rect x="1229.0" y="430.3" width="0.9" height="11.2" fill="rgba(80,170,190,0.08)"/>
<rect x="1233.0" y="430.3" width="0.9" height="11.2" fill="rgba(80,170,190,0.10)"/>
<rect x="1239.0" y="430.3" width="0.9" height="11.2" fill="rgba(80,170,190,0.19)"/>
<rect x="1245.0" y="430.3" width="0.9" height="11.2" fill="rgba(80,170,190,0.16)"/>
<rect x="1250.0" y="430.3" width="0.9" height="11.2" fill="rgba(80,170,190,0.08)"/>
<rect x="1256.0" y="430.3" width="0.9" height="11.2" fill="rgba(80,170,190,0.12)"/>
<rect x="1263.0" y="430.3" width="0.9" height="11.2" fill="rgba(80,170,190,0.19)"/>
<rect x="1268.0" y="430.3" width="0.9" height="11.2" fill="rgba(80,170,190,0.14)"/>
<rect x="1271.0" y="430.3" width="0.9" height="11.2" fill="rgba(80,170,190,0.10)"/>
<rect x="1275.0" y="430.3" width="0.9" height="11.2" fill="rgba(80,170,190,0.09)"/>
<rect x="1281.0" y="430.3" width="0.9" height="11.2" fill="rgba(80,170,190,0.18)"/>
<rect x="1287.0" y="430.3" width="0.9" height="11.2" fill="rgba(80,170,190,0.10)"/>
<rect x="1292.0" y="430.3" width="0.9" height="11.2" fill="rgba(80,170,190,0.09)"/>
<rect x="1296.0" y="430.3" width="0.9" height="11.2" fill="rgba(80,170,190,0.17)"/>
<rect x="1300.0" y="430.3" width="0.9" height="11.2" fill="rgba(80,170,190,0.08)"/>
<rect x="1303.0" y="430.3" width="0.9" height="11.2" fill="rgba(80,170,190,0.12)"/>
<rect x="1308.0" y="430.3" width="0.9" height="11.2" fill="rgba(80,170,190,0.12)"/>
<rect x="1311.0" y="430.3" width="0.9" height="11.2" fill="rgba(80,170,190,0.16)"/>
<rect x="1317.0" y="430.3" width="0.9" height="11.2" fill="rgba(80,170,190,0.14)"/>
<rect x="1321.0" y="430.3" width="0.9" height="11.2" fill="rgba(80,170,190,0.09)"/>
<rect x="1326.0" y="430.3" width="0.9" height="11.2" fill="rgba(80,170,190,0.11)"/>
<rect x="1330.0" y="430.3" width="0.9" height="11.2" fill="rgba(80,170,190,0.17)"/>
<rect x="1334.0" y="430.3" width="0.9" height="11.2" fill="rgba(80,170,190,0.08)"/>
<rect x="1337.0" y="430.3" width="0.9" height="11.2" fill="rgba(80,170,190,0.15)"/>
<rect x="1340.0" y="430.3" width="0.9" height="11.2" fill="rgba(80,170,190,0.15)"/>
<rect x="1345.0" y="430.3" width="0.9" height="11.2" fill="rgba(80,170,190,0.16)"/>
<rect x="1349.0" y="430.3" width="0.9" height="11.2" fill="rgba(80,170,190,0.14)"/>
<rect x="1354.0" y="430.3" width="0.9" height="11.2" fill="rgba(80,170,190,0.09)"/>
<rect x="1360.0" y="430.3" width="0.9" height="11.2" fill="rgba(80,170,190,0.10)"/>
<rect x="1364.0" y="430.3" width="0.9" height="11.2" fill="rgba(80,170,190,0.10)"/>
<rect x="1368.0" y="430.3" width="0.9" height="11.2" fill="rgba(80,170,190,0.19)"/>
<rect x="1375.0" y="430.3" width="0.9" height="11.2" fill="rgba(80,170,190,0.13)"/>
<rect x="1380.0" y="430.3" width="0.9" height="11.2" fill="rgba(80,170,190,0.08)"/>
<rect x="1383.0" y="430.3" width="0.9" height="11.2" fill="rgba(80,170,190,0.13)"/>
<rect x="1389.0" y="430.3" width="0.9" height="11.2" fill="rgba(80,170,190,0.10)"/>
<rect x="1392.0" y="430.3" width="0.9" height="11.2" fill="rgba(80,170,190,0.15)"/>
<rect x="1399.0" y="430.3" width="0.9" height="11.2" fill="rgba(80,170,190,0.15)"/>
<rect x="1402.0" y="430.3" width="0.9" height="11.2" fill="rgba(80,170,190,0.17)"/>
<rect x="1406.0" y="430.3" width="0.9" height="11.2" fill="rgba(80,170,190,0.19)"/>
<rect x="1412.0" y="430.3" width="0.9" height="11.2" fill="rgba(80,170,190,0.09)"/>
<rect x="1418.0" y="430.3" width="0.9" height="11.2" fill="rgba(80,170,190,0.09)"/>
<rect x="1422.0" y="430.3" width="0.9" height="11.2" fill="rgba(80,170,190,0.16)"/>
<rect x="1428.0" y="430.3" width="0.9" height="11.2" fill="rgba(80,170,190,0.13)"/>
<rect x="1431.0" y="430.3" width="0.9" height="11.2" fill="rgba(80,170,190,0.09)"/>
<rect x="1437.0" y="430.3" width="0.9" height="11.2" fill="rgba(80,170,190,0.13)"/>
<rect x="1440.0" y="430.3" width="0.9" height="11.2" fill="rgba(80,170,190,0.19)"/>
<rect x="1444.0" y="430.3" width="0.9" height="11.2" fill="rgba(80,170,190,0.10)"/>
<rect x="1451.0" y="430.3" width="0.9" height="11.2" fill="rgba(80,170,190,0.16)"/>
<rect x="1455.0" y="430.3" width="0.9" height="11.2" fill="rgba(80,170,190,0.14)"/>
<rect x="1458.0" y="430.3" width="0.9" height="11.2" fill="rgba(80,170,190,0.19)"/>
<rect x="1461.0" y="430.3" width="0.9" height="11.2" fill="rgba(80,170,190,0.09)"/>
<rect x="1465.0" y="430.3" width="0.9" height="11.2" fill="rgba(80,170,190,0.15)"/>
<rect x="1469.0" y="430.3" width="0.9" height="11.2" fill="rgba(80,170,190,0.15)"/>
<rect x="1475.0" y="430.3" width="0.9" height="11.2" fill="rgba(80,170,190,0.14)"/>
<rect x="1481.0" y="430.3" width="0.9" height="11.2" fill="rgba(80,170,190,0.13)"/>
<rect x="1487.0" y="430.3" width="0.9" height="11.2" fill="rgba(80,170,190,0.14)"/>
<rect x="1491.0" y="430.3" width="0.9" height="11.2" fill="rgba(80,170,190,0.17)"/>
<rect x="1496.0" y="430.3" width="0.9" height="11.2" fill="rgba(80,170,190,0.16)"/>
<rect x="1500.0" y="430.3" width="0.9" height="11.2" fill="rgba(80,170,190,0.15)"/>
<rect x="1504.0" y="430.3" width="0.9" height="11.2" fill="rgba(80,170,190,0.12)"/>
<rect x="1507.0" y="430.3" width="0.9" height="11.2" fill="rgba(80,170,190,0.17)"/>
<rect x="1512.0" y="430.3" width="0.9" height="11.2" fill="rgba(80,170,190,0.18)"/>
<rect x="1517.0" y="430.3" width="0.9" height="11.2" fill="rgba(80,170,190,0.10)"/>
<rect x="1524.0" y="430.3" width="0.9" height="11.2" fill="rgba(80,170,190,0.09)"/>
<rect x="1528.0" y="430.3" width="0.9" height="11.2" fill="rgba(80,170,190,0.16)"/>
<rect x="1534.0" y="430.3" width="0.9" height="11.2" fill="rgba(80,170,190,0.20)"/>
<rect x="1538.0" y="430.3" width="0.9" height="11.2" fill="rgba(80,170,190,0.11)"/>
<rect x="1544.0" y="430.3" width="0.9" height="11.2" fill="rgba(80,170,190,0.16)"/>
<rect x="1547.0" y="430.3" width="0.9" height="11.2" fill="rgba(80,170,190,0.16)"/>
<rect x="1552.0" y="430.3" width="0.9" height="11.2" fill="rgba(80,170,190,0.19)"/>
<rect x="1555.0" y="430.3" width="0.9" height="11.2" fill="rgba(80,170,190,0.09)"/>
<rect x="1560.0" y="430.3" width="0.9" height="11.2" fill="rgba(80,170,190,0.13)"/>
<rect x="1567.0" y="430.3" width="0.9" height="11.2" fill="rgba(80,170,190,0.08)"/>
<rect x="1572.0" y="430.3" width="0.9" height="11.2" fill="rgba(80,170,190,0.16)"/>
<rect x="1576.0" y="430.3" width="0.9" height="11.2" fill="rgba(80,170,190,0.15)"/>
<rect x="1582.0" y="430.3" width="0.9" height="11.2" fill="rgba(80,170,190,0.10)"/>
<rect x="1585.0" y="430.3" width="0.9" height="11.2" fill="rgba(80,170,190,0.17)"/>
<rect x="1591.0" y="430.3" width="0.9" height="11.2" fill="rgba(80,170,190,0.11)"/>
<rect x="1597.0" y="430.3" width="0.9" height="11.2" fill="rgba(80,170,190,0.15)"/>
<rect x="1602.0" y="430.3" width="0.9" height="11.2" fill="rgba(80,170,190,0.09)"/>
<rect x="1606.0" y="430.3" width="0.9" height="11.2" fill="rgba(80,170,190,0.10)"/>
<rect x="1612.0" y="430.3" width="0.9" height="11.2" fill="rgba(80,170,190,0.16)"/>
<rect x="1617.0" y="430.3" width="0.9" height="11.2" fill="rgba(80,170,190,0.08)"/>
<rect x="1624.0" y="430.3" width="0.9" height="11.2" fill="rgba(80,170,190,0.17)"/>
<rect x="1631.0" y="430.3" width="0.9" height="11.2" fill="rgba(80,170,190,0.08)"/>
<rect x="1634.0" y="430.3" width="0.9" height="11.2" fill="rgba(80,170,190,0.09)"/>
<rect x="1638.0" y="430.3" width="0.9" height="11.2" fill="rgba(80,170,190,0.18)"/>
<rect x="1644.0" y="430.3" width="0.9" height="11.2" fill="rgba(80,170,190,0.18)"/>
<rect x="1651.0" y="430.3" width="0.9" height="11.2" fill="rgba(80,170,190,0.08)"/>
<rect x="1658.0" y="430.3" width="0.9" height="11.2" fill="rgba(80,170,190,0.13)"/>
<rect x="1663.0" y="430.3" width="0.9" height="11.2" fill="rgba(80,170,190,0.10)"/>
<rect x="1668.0" y="430.3" width="0.9" height="11.2" fill="rgba(80,170,190,0.08)"/>
<rect x="1675.0" y="430.3" width="0.9" height="11.2" fill="rgba(80,170,190,0.15)"/>
<rect x="1679.0" y="430.3" width="0.9" height="11.2" fill="rgba(80,170,190,0.17)"/>
<rect x="1682.0" y="430.3" width="0.9" height="11.2" fill="rgba(80,170,190,0.11)"/>
<rect x="1689.0" y="430.3" width="0.9" height="11.2" fill="rgba(80,170,190,0.10)"/>
<rect x="1693.0" y="430.3" width="0.9" height="11.2" fill="rgba(80,170,190,0.13)"/>
<rect x="1699.0" y="430.3" width="0.9" height="11.2" fill="rgba(80,170,190,0.18)"/>
<rect x="1702.0" y="430.3" width="0.9" height="11.2" fill="rgba(80,170,190,0.12)"/>
<rect x="1708.0" y="430.3" width="0.9" height="11.2" fill="rgba(80,170,190,0.19)"/>
<rect x="1714.0" y="430.3" width="0.9" height="11.2" fill="rgba(80,170,190,0.15)"/>
<rect x="1718.0" y="430.3" width="0.9" height="11.2" fill="rgba(80,170,190,0.13)"/>
<rect x="1722.0" y="430.3" width="0.9" height="11.2" fill="rgba(80,170,190,0.14)"/>
<rect x="1728.0" y="430.3" width="0.9" height="11.2" fill="rgba(80,170,190,0.15)"/>
<rect x="1731.0" y="430.3" width="0.9" height="11.2" fill="rgba(80,170,190,0.10)"/>
<rect x="1737.0" y="430.3" width="0.9" height="11.2" fill="rgba(80,170,190,0.16)"/>
<rect x="1741.0" y="430.3" width="0.9" height="11.2" fill="rgba(80,170,190,0.20)"/>
<rect x="1744.0" y="430.3" width="0.9" height="11.2" fill="rgba(80,170,190,0.19)"/>
<rect x="1748.0" y="430.3" width="0.9" height="11.2" fill="rgba(80,170,190,0.14)"/>
<rect x="1753.0" y="430.3" width="0.9" height="11.2" fill="rgba(80,170,190,0.13)"/>
<rect x="1757.0" y="430.3" width="0.9" height="11.2" fill="rgba(80,170,190,0.10)"/>
<rect x="1761.0" y="430.3" width="0.9" height="11.2" fill="rgba(80,170,190,0.12)"/>
<rect x="1768.0" y="430.3" width="0.9" height="11.2" fill="rgba(80,170,190,0.12)"/>
<rect x="1772.0" y="430.3" width="0.9" height="11.2" fill="rgba(80,170,190,0.12)"/>
<rect x="1776.0" y="430.3" width="0.9" height="11.2" fill="rgba(80,170,190,0.18)"/>
<rect x="1779.0" y="430.3" width="0.9" height="11.2" fill="rgba(80,170,190,0.15)"/>
<rect x="1785.0" y="430.3" width="0.9" height="11.2" fill="rgba(80,170,190,0.12)"/>
<rect x="1789.0" y="430.3" width="0.9" height="11.2" fill="rgba(80,170,190,0.18)"/>
<rect x="1795.0" y="430.3" width="0.9" height="11.2" fill="rgba(80,170,190,0.13)"/>
<rect x="1798.0" y="430.3" width="0.9" height="11.2" fill="rgba(80,170,190,0.10)"/>
<rect x="1801.0" y="430.3" width="0.9" height="11.2" fill="rgba(80,170,190,0.17)"/>
<rect x="1806.0" y="430.3" width="0.9" height="11.2" fill="rgba(80,170,190,0.19)"/>
<rect x="1810.0" y="430.3" width="0.9" height="11.2" fill="rgba(80,170,190,0.18)"/>
<rect x="1815.0" y="430.3" width="0.9" height="11.2" fill="rgba(80,170,190,0.14)"/>
<rect x="1821.0" y="430.3" width="0.9" height="11.2" fill="rgba(80,170,190,0.18)"/>
<rect x="1828.0" y="430.3" width="0.9" height="11.2" fill="rgba(80,170,190,0.09)"/>
<rect x="1832.0" y="430.3" width="0.9" height="11.2" fill="rgba(80,170,190,0.13)"/>
<rect x="1835.0" y="430.3" width="0.9" height="11.2" fill="rgba(80,170,190,0.09)"/>
<rect x="1842.0" y="430.3" width="0.9" height="11.2" fill="rgba(80,170,190,0.15)"/>
<rect x="1846.0" y="430.3" width="0.9" height="11.2" fill="rgba(80,170,190,0.18)"/>
<rect x="1849.0" y="430.3" width="0.9" height="11.2" fill="rgba(80,170,190,0.12)"/>
<rect x="1852.0" y="430.3" width="0.9" height="11.2" fill="rgba(80,170,190,0.15)"/>
<rect x="1859.0" y="430.3" width="0.9" height="11.2" fill="rgba(80,170,190,0.13)"/>
<rect x="1865.0" y="430.3" width="0.9" height="11.2" fill="rgba(80,170,190,0.15)"/>
<rect x="1871.0" y="430.3" width="0.9" height="11.2" fill="rgba(80,170,190,0.13)"/>
<rect x="1878.0" y="430.3" width="0.9" height="11.2" fill="rgba(80,170,190,0.19)"/>
<rect x="1885.0" y="430.3" width="0.9" height="11.2" fill="rgba(80,170,190,0.16)"/>
<rect x="1892.0" y="430.3" width="0.9" height="11.2" fill="rgba(80,170,190,0.10)"/>
<rect x="1898.0" y="430.3" width="0.9" height="11.2" fill="rgba(80,170,190,0.12)"/>
<rect x="1905.0" y="430.3" width="0.9" height="11.2" fill="rgba(80,170,190,0.08)"/>
<rect x="1912.0" y="430.3" width="0.9" height="11.2" fill="rgba(80,170,190,0.10)"/>
<rect x="1917.0" y="430.3" width="0.9" height="11.2" fill="rgba(80,170,190,0.09)"/>
<rect x="1920.0" y="430.3" width="0.9" height="11.2" fill="rgba(80,170,190,0.17)"/>
<rect x="1927.0" y="430.3" width="0.9" height="11.2" fill="rgba(80,170,190,0.15)"/>
<rect x="1933.0" y="430.3" width="0.9" height="11.2" fill="rgba(80,170,190,0.12)"/>
<rect x="1936.0" y="430.3" width="0.9" height="11.2" fill="rgba(80,170,190,0.11)"/>
<rect x="1940.0" y="430.3" width="0.9" height="11.2" fill="rgba(80,170,190,0.09)"/>
<rect x="1943.0" y="430.3" width="0.9" height="11.2" fill="rgba(80,170,190,0.16)"/>
<rect x="1948.0" y="430.3" width="0.9" height="11.2" fill="rgba(80,170,190,0.19)"/>
<rect x="1955.0" y="430.3" width="0.9" height="11.2" fill="rgba(80,170,190,0.15)"/>
<rect x="1959.0" y="430.3" width="0.9" height="11.2" fill="rgba(80,170,190,0.14)"/>
<rect x="1962.0" y="430.3" width="0.9" height="11.2" fill="rgba(80,170,190,0.19)"/>
<rect x="1966.0" y="430.3" width="0.9" height="11.2" fill="rgba(80,170,190,0.12)"/>
<line x1="1105" y1="205.80" x2="1968" y2="205.80" stroke="rgba(216,217,218,0.2)" stroke-width="1.8"/>
<line x1="1105" y1="221.69" x2="1968" y2="221.69" stroke="rgba(216,217,218,0.2)" stroke-width="1.8"/>
<line x1="1105" y1="237.59" x2="1968" y2="237.59" stroke="rgba(216,217,218,0.2)" stroke-width="1.8"/>
<line x1="1105" y1="253.48" x2="1968" y2="253.48" stroke="rgba(216,217,218,0.2)" stroke-width="1.8"/>
<line x1="1105" y1="269.37" x2="1968" y2="269.37" stroke="rgba(216,217,218,0.2)" stroke-width="1.8"/>
<line x1="1105" y1="285.26" x2="1968" y2="285.26" stroke="rgba(216,217,218,0.2)" stroke-width="1.8"/>
<line x1="1105" y1="301.16" x2="1968" y2="301.16" stroke="rgba(216,217,218,0.2)" stroke-width="1.8"/>
<line x1="1105" y1="317.05" x2="1968" y2="317.05" stroke="rgba(216,217,218,0.2)" stroke-width="1.8"/>
<line x1="1105" y1="332.94" x2="1968" y2="332.94" stroke="rgba(216,217,218,0.2)" stroke-width="1.8"/>
<line x1="1105" y1="348.84" x2="1968" y2="348.84" stroke="rgba(216,217,218,0.2)" stroke-width="1.8"/>
<line x1="1105" y1="364.73" x2="1968" y2="364.73" stroke="rgba(216,217,218,0.2)" stroke-width="1.8"/>
<line x1="1105" y1="380.62" x2="1968" y2="380.62" stroke="rgba(216,217,218,0.2)" stroke-width="1.8"/>
<line x1="1105" y1="396.52" x2="1968" y2="396.52" stroke="rgba(216,217,218,0.2)" stroke-width="1.8"/>
<line x1="1105" y1="412.41" x2="1968" y2="412.41" stroke="rgba(216,217,218,0.2)" stroke-width="1.8"/>
<line x1="1105" y1="428.30" x2="1968" y2="428.30" stroke="rgba(216,217,218,0.2)" stroke-width="1.8"/>
<line x1="1105" y1="444.20" x2="1968" y2="444.20" stroke="rgba(216,217,218,0.2)" stroke-width="1.8"/>
<line x1="1149.40" y1="206" x2="1149.40" y2="444" stroke="rgba(216,217,218,0.2)" stroke-width="1.8"/>
<line x1="1293.24" y1="206" x2="1293.24" y2="444" stroke="rgba(216,217,218,0.2)" stroke-width="1.8"/>
<line x1="1437.08" y1="206" x2="1437.08" y2="444" stroke="rgba(216,217,218,0.2)" stroke-width="1.8"/>
<line x1="1580.92" y1="206" x2="1580.92" y2="444" stroke="rgba(216,217,218,0.2)" stroke-width="1.8"/>
<line x1="1724.76" y1="206" x2="1724.76" y2="444" stroke="rgba(216,217,218,0.2)" stroke-width="1.8"/>
<line x1="1868.60" y1="206" x2="1868.60" y2="444" stroke="rgba(216,217,218,0.2)" stroke-width="1.8"/>
<text x="1097.8" y="211.60000000000002" font-size="16" font-weight="normal" text-anchor="end" fill="#d8d9da" transform="translate(1097.8,0) scale(1.07,1) translate(-1097.8,0)">+Inf</text>
<text x="1097.8" y="227.49300000000002" font-size="16" font-weight="normal" text-anchor="end" fill="#d8d9da" transform="translate(1097.8,0) scale(1.07,1) translate(-1097.8,0)">10.000 s</text>
<text x="1097.8" y="243.38600000000002" font-size="16" font-weight="normal" text-anchor="end" fill="#d8d9da" transform="translate(1097.8,0) scale(1.07,1) translate(-1097.8,0)">7.500 s</text>
<text x="1097.8" y="259.279" font-size="16" font-weight="normal" text-anchor="end" fill="#d8d9da" transform="translate(1097.8,0) scale(1.07,1) translate(-1097.8,0)">5.000 s</text>
<text x="1097.8" y="275.172" font-size="16" font-weight="normal" text-anchor="end" fill="#d8d9da" transform="translate(1097.8,0) scale(1.07,1) translate(-1097.8,0)">2.500 s</text>
<text x="1097.8" y="291.065" font-size="16" font-weight="normal" text-anchor="end" fill="#d8d9da" transform="translate(1097.8,0) scale(1.07,1) translate(-1097.8,0)">1.000 s</text>
<text x="1097.8" y="306.958" font-size="16" font-weight="normal" text-anchor="end" fill="#d8d9da" transform="translate(1097.8,0) scale(1.07,1) translate(-1097.8,0)">750 ms</text>
<text x="1097.8" y="322.85100000000006" font-size="16" font-weight="normal" text-anchor="end" fill="#d8d9da" transform="translate(1097.8,0) scale(1.07,1) translate(-1097.8,0)">500 ms</text>
<text x="1097.8" y="338.744" font-size="16" font-weight="normal" text-anchor="end" fill="#d8d9da" transform="translate(1097.8,0) scale(1.07,1) translate(-1097.8,0)">250 ms</text>
<text x="1097.8" y="354.637" font-size="16" font-weight="normal" text-anchor="end" fill="#d8d9da" transform="translate(1097.8,0) scale(1.07,1) translate(-1097.8,0)">100 ms</text>
<text x="1097.8" y="370.53000000000003" font-size="16" font-weight="normal" text-anchor="end" fill="#d8d9da" transform="translate(1097.8,0) scale(1.07,1) translate(-1097.8,0)">75 ms</text>
<text x="1097.8" y="386.42300000000006" font-size="16" font-weight="normal" text-anchor="end" fill="#d8d9da" transform="translate(1097.8,0) scale(1.07,1) translate(-1097.8,0)">50 ms</text>
<text x="1097.8" y="402.31600000000003" font-size="16" font-weight="normal" text-anchor="end" fill="#d8d9da" transform="translate(1097.8,0) scale(1.07,1) translate(-1097.8,0)">25 ms</text>
<text x="1097.8" y="418.209" font-size="16" font-weight="normal" text-anchor="end" fill="#d8d9da" transform="translate(1097.8,0) scale(1.07,1) translate(-1097.8,0)">10 ms</text>
<text x="1097.8" y="434.10200000000003" font-size="16" font-weight="normal" text-anchor="end" fill="#d8d9da" transform="translate(1097.8,0) scale(1.07,1) translate(-1097.8,0)">5 ms</text>
<text x="1149.4" y="470.3" font-size="16.5" font-weight="normal" text-anchor="middle" fill="#d8d9da" transform="translate(1149.4,0) scale(1.06,1) translate(-1149.4,0)">09:00</text>
<text x="1293.24" y="470.3" font-size="16.5" font-weight="normal" text-anchor="middle" fill="#d8d9da" transform="translate(1293.24,0) scale(1.06,1) translate(-1293.24,0)">10:00</text>
<text x="1437.0800000000002" y="470.3" font-size="16.5" font-weight="normal" text-anchor="middle" fill="#d8d9da" transform="translate(1437.0800000000002,0) scale(1.06,1) translate(-1437.0800000000002,0)">11:00</text>
<text x="1580.92" y="470.3" font-size="16.5" font-weight="normal" text-anchor="middle" fill="#d8d9da" transform="translate(1580.92,0) scale(1.06,1) translate(-1580.92,0)">12:00</text>
<text x="1724.7600000000002" y="470.3" font-size="16.5" font-weight="normal" text-anchor="middle" fill="#d8d9da" transform="translate(1724.7600000000002,0) scale(1.06,1) translate(-1724.7600000000002,0)">13:00</text>
<text x="1868.6000000000001" y="470.3" font-size="16.5" font-weight="normal" text-anchor="middle" fill="#d8d9da" transform="translate(1868.6000000000001,0) scale(1.06,1) translate(-1868.6000000000001,0)">14:00</text>
<path d="M1999 478.0h3v8.5h-8.0v-3h5.0z" fill="#5b5b5d"/>
<rect x="14.5" y="506.5" width="987" height="340" rx="3" ry="3" fill="#212124" stroke="#151517" stroke-width="1"/>
<text x="422.80" y="534.3" font-size="20" font-weight="bold" fill="#d8d9da" textLength="167.85" lengthAdjust="spacingAndGlyphs">Client Mesh Sender</text>
<path d="M85.0 592.1 L87.0 592.7 L89.0 592.4 L91.0 592.8 L93.0 592.8 L95.0 591.8 L97.0 591.7 L99.0 593.2 L101.0 592.2 L103.0 592.1 L105.0 593.5 L107.0 592.5 L109.0 593.2 L111.0 592.6 L113.0 592.9 L115.0 592.0 L117.0 592.8 L119.0 593.3 L121.0 592.6 L123.0 593.0 L125.0 592.9 L127.0 591.8 L129.0 593.1 L131.0 592.8 L133.0 592.2 L135.0 591.8 L137.0 593.3 L139.0 592.6 L141.0 593.0 L143.0 593.3 L145.0 593.0 L147.0 593.4 L149.0 592.4 L151.0 593.1 L153.0 592.5 L155.0 593.4 L157.0 593.3 L159.0 591.9 L161.0 591.9 L163.0 592.1 L165.0 593.4 L167.0 592.5 L169.0 592.8 L171.0 592.2 L173.0 592.6 L175.0 592.4 L177.0 592.3 L179.0 592.8 L181.0 592.8 L183.0 593.3 L185.0 592.9 L187.0 593.4 L189.0 593.2 L191.0 593.5 L193.0 592.9 L195.0 592.0 L197.0 593.2 L199.0 593.4 L201.0 593.3 L203.0 592.7 L205.0 593.0 L207.0 592.1 L209.0 593.2 L211.0 592.7 L213.0 592.2 L215.0 591.8 L217.0 593.2 L219.0 593.5 L221.0 591.9 L223.0 593.1 L225.0 592.4 L227.0 592.0 L229.0 592.2 L231.0 593.1 L233.0 593.3 L235.0 591.8 L237.0 592.8 L239.0 591.8 L241.0 593.0 L243.0 592.3 L245.0 593.3 L246.8 593.0 L249.0 596.8 L251.2 592.5 L253.0 592.3 L255.0 591.8 L257.0 592.8 L259.0 591.8 L261.0 592.1 L263.0 592.4 L265.0 592.8 L267.0 592.0 L269.0 591.8 L271.0 593.3 L273.0 592.3 L274.1 592.8 L276.3 618.7 L278.5 592.8 L279.0 592.4 L281.0 592.5 L283.0 592.6 L285.0 592.9 L287.0 592.8 L289.0 592.7 L291.0 592.8 L293.0 593.4 L294.6 592.4 L296.8 600.0 L299.0 592.8 L301.0 592.1 L303.0 592.2 L305.0 593.5 L306.3 592.7 L308.5 611.8 L310.7 592.9 L311.0 591.7 L313.0 592.4 L315.0 592.7 L316.8 592.4 L319.3 597.0 L321.8 592.8 L323.0 591.8 L325.0 592.8 L327.0 592.5 L329.0 592.9 L330.5 593.0 L333.0 597.0 L335.5 592.8 L337.0 591.7 L339.0 591.8 L341.0 592.9 L343.0 593.4 L345.0 592.2 L347.0 592.5 L349.0 592.8 L351.0 592.3 L353.0 592.4 L355.0 592.3 L357.0 592.4 L359.0 592.8 L361.0 592.2 L363.0 592.4 L365.0 593.1 L367.0 591.7 L369.0 592.7 L371.0 593.0 L373.0 592.3 L373.5 592.6 L375.7 599.0 L377.9 592.3 L379.0 592.1 L381.0 592.0 L383.0 592.5 L385.0 593.0 L387.0 591.9 L389.0 592.3 L391.0 592.3 L393.0 593.2 L395.0 592.5 L397.0 593.2 L399.0 592.0 L401.0 592.3 L403.0 592.9 L404.5 592.6 L406.7 599.0 L408.9 592.5 L409.0 592.1 L411.0 591.9 L413.0 592.7 L415.0 592.0 L417.0 593.2 L419.0 593.2 L421.0 592.0 L423.0 592.2 L425.0 593.2 L427.0 592.9 L428.0 592.8 L430.2 600.0 L432.4 592.8 L433.0 591.9 L435.0 592.2 L436.0 592.7 L438.5 601.5 L441.0 592.3 L441.0 592.3 L443.0 592.5 L445.0 592.5 L447.0 592.4 L448.8 592.7 L451.0 601.0 L453.2 592.7 L455.0 593.4 L457.0 593.3 L459.0 593.5 L461.0 592.5 L463.0 593.4 L465.0 593.4 L467.0 592.1 L469.0 593.0 L471.0 593.2 L473.0 592.9 L475.0 592.6 L477.0 592.2 L479.0 592.3 L481.0 592.1 L483.0 591.8 L485.0 592.8 L487.0 592.2 L489.0 593.2 L491.0 591.8 L493.0 593.3 L495.0 592.9 L497.0 593.4 L499.0 593.3 L501.0 593.3 L503.0 592.7 L505.0 591.7 L507.0 593.0 L509.0 592.0 L510.8 592.3 L513.0 598.0 L515.2 593.0 L517.0 592.4 L519.0 593.4 L521.0 592.8 L523.0 592.3 L525.0 592.2 L527.0 593.3 L529.0 592.6 L531.0 593.1 L533.0 592.3 L535.0 592.1 L537.0 592.7 L539.0 593.2 L541.0 592.0 L543.0 593.1 L545.0 593.4 L547.0 593.2 L549.0 593.2 L551.0 591.7 L553.0 592.8 L555.0 593.3 L557.0 591.8 L559.0 592.2 L561.0 592.2 L563.0 592.6 L565.0 592.5 L567.0 592.6 L569.0 593.1 L571.0 591.7 L573.0 591.8 L575.0 591.9 L577.0 591.9 L579.0 591.8 L581.0 593.5 L583.0 593.2 L585.0 591.9 L587.0 592.6 L589.0 592.3 L591.0 592.3 L593.0 592.3 L594.6 592.7 L596.8 598.9 L599.0 592.3 L599.0 592.3 L601.0 592.0 L603.0 592.3 L605.0 591.9 L607.0 592.7 L609.0 593.0 L609.8 593.0 L612.0 598.0 L614.2 592.3 L615.0 592.0 L617.0 592.4 L619.0 592.8 L621.0 593.1 L621.4 592.4 L623.6 611.0 L625.8 592.8 L627.0 592.8 L629.0 592.5 L631.0 592.4 L633.0 592.6 L634.7 592.7 L636.9 597.0 L639.1 592.6 L641.0 592.5 L643.0 592.1 L645.0 592.7 L647.0 593.0 L649.0 591.8 L651.0 592.5 L653.0 592.5 L655.0 593.3 L657.0 593.4 L659.0 592.4 L661.0 593.3 L663.0 593.1 L665.0 592.2 L667.0 592.5 L669.0 591.9 L671.0 593.2 L673.0 592.9 L675.0 593.3 L677.0 593.1 L679.0 592.9 L681.0 593.0 L683.0 592.7 L685.0 591.9 L686.3 592.7 L688.5 600.0 L690.7 592.6 L691.0 592.0 L693.0 593.1 L695.0 591.8 L697.0 591.9 L699.0 591.9 L700.5 592.4 L703.0 599.0 L705.5 592.3 L707.0 593.2 L709.0 591.9 L711.0 593.2 L713.0 592.9 L713.2 592.2 L715.4 605.0 L717.6 592.8 L719.0 592.7 L721.0 593.1 L723.0 591.8 L725.0 593.1 L726.8 592.8 L729.3 596.0 L731.8 592.6 L733.0 593.0 L735.0 593.4 L737.0 591.8 L739.0 592.3 L741.0 592.7 L743.0 593.2 L745.0 592.1 L747.0 592.0 L749.0 592.1 L751.0 592.8 L753.0 593.1 L755.0 592.4 L757.0 592.4 L759.0 592.4 L761.0 592.3 L763.0 592.5 L765.0 591.8 L767.0 592.6 L769.0 593.5 L771.0 592.4 L773.0 593.0 L773.8 592.8 L776.0 611.8 L778.2 592.5 L779.0 593.1 L781.0 592.9 L783.0 592.6 L785.0 592.6 L785.5 592.4 L788.0 600.0 L790.5 592.5 L791.0 592.0 L792.7 592.9 L794.9 611.0 L797.1 592.2 L798.8 592.6 L801.3 598.0 L803.8 592.4 L805.0 592.0 L807.0 592.2 L809.0 592.1 L811.0 592.8 L813.0 592.3 L815.0 592.1 L817.0 592.9 L819.0 593.4 L821.0 592.2 L823.0 593.0 L825.0 592.4 L827.0 593.2 L829.0 592.8 L831.0 592.2 L833.0 592.1 L835.0 591.7 L837.0 592.6 L839.0 592.4 L841.0 592.0 L843.0 592.3 L845.0 592.3 L847.0 593.1 L849.0 592.0 L851.0 593.5 L853.0 592.6 L855.0 592.8 L857.0 592.5 L859.0 593.2 L861.0 593.2 L863.0 592.7 L865.0 592.6 L867.0 593.0 L869.0 593.2 L871.0 592.4 L873.0 593.0 L875.0 593.4 L877.0 592.5 L879.0 592.1 L881.0 592.1 L883.0 593.0 L885.0 592.9 L887.0 593.4 L889.0 593.2 L891.0 592.1 L893.0 592.0 L895.0 592.2 L897.0 592.0 L899.0 593.0 L901.0 593.2 L903.0 593.3 L905.0 592.2 L907.0 593.3 L909.0 592.3 L911.0 592.5 L913.0 593.0 L915.0 591.9 L917.0 591.9 L919.0 593.2 L920.8 592.8 L923.0 597.0 L925.2 592.5 L927.0 592.9 L929.0 591.7 L931.0 592.3 L933.0 592.5 L935.0 592.6 L937.0 592.1 L939.0 592.8 L941.0 593.4 L943.0 592.4 L945.0 592.7 L945.6 592.4 L947.8 601.0 L950.0 592.5 L951.0 592.9 L953.0 591.9 L955.0 593.3 L957.0 593.3 L959.0 591.9 L961.0 609.0 L962.5 636.8 L962.5 715.4 L85 715.4 Z" fill="rgba(126,178,109,0.1)"/>
<line x1="85" y1="561.00" x2="962.5" y2="561.00" stroke="rgba(216,217,218,0.2)" stroke-width="1.8"/>
<line x1="85" y1="599.60" x2="962.5" y2="599.60" stroke="rgba(216,217,218,0.2)" stroke-width="1.8"/>
<line x1="85" y1="638.20" x2="962.5" y2="638.20" stroke="rgba(216,217,218,0.2)" stroke-width="1.8"/>
<line x1="85" y1="676.80" x2="962.5" y2="676.80" stroke="rgba(216,217,218,0.2)" stroke-width="1.8"/>
<line x1="85" y1="715.40" x2="962.5" y2="715.40" stroke="rgba(216,217,218,0.2)" stroke-width="1.8"/>
<line x1="128.50" y1="561" x2="128.50" y2="715.4" stroke="rgba(216,217,218,0.2)" stroke-width="1.8"/>
<line x1="274.98" y1="561" x2="274.98" y2="715.4" stroke="rgba(216,217,218,0.2)" stroke-width="1.8"/>
<line x1="421.46" y1="561" x2="421.46" y2="715.4" stroke="rgba(216,217,218,0.2)" stroke-width="1.8"/>
<line x1="567.94" y1="561" x2="567.94" y2="715.4" stroke="rgba(216,217,218,0.2)" stroke-width="1.8"/>
<line x1="714.42" y1="561" x2="714.42" y2="715.4" stroke="rgba(216,217,218,0.2)" stroke-width="1.8"/>
<line x1="860.90" y1="561" x2="860.90" y2="715.4" stroke="rgba(216,217,218,0.2)" stroke-width="1.8"/>
<path d="M85.0 592.1 L87.0 592.7 L89.0 592.4 L91.0 592.8 L93.0 592.8 L95.0 591.8 L97.0 591.7 L99.0 593.2 L101.0 592.2 L103.0 592.1 L105.0 593.5 L107.0 592.5 L109.0 593.2 L111.0 592.6 L113.0 592.9 L115.0 592.0 L117.0 592.8 L119.0 593.3 L121.0 592.6 L123.0 593.0 L125.0 592.9 L127.0 591.8 L129.0 593.1 L131.0 592.8 L133.0 592.2 L135.0 591.8 L137.0 593.3 L139.0 592.6 L141.0 593.0 L143.0 593.3 L145.0 593.0 L147.0 593.4 L149.0 592.4 L151.0 593.1 L153.0 592.5 L155.0 593.4 L157.0 593.3 L159.0 591.9 L161.0 591.9 L163.0 592.1 L165.0 593.4 L167.0 592.5 L169.0 592.8 L171.0 592.2 L173.0 592.6 L175.0 592.4 L177.0 592.3 L179.0 592.8 L181.0 592.8 L183.0 593.3 L185.0 592.9 L187.0 593.4 L189.0 593.2 L191.0 593.5 L193.0 592.9 L195.0 592.0 L197.0 593.2 L199.0 593.4 L201.0 593.3 L203.0 592.7 L205.0 593.0 L207.0 592.1 L209.0 593.2 L211.0 592.7 L213.0 592.2 L215.0 591.8 L217.0 593.2 L219.0 593.5 L221.0 591.9 L223.0 593.1 L225.0 592.4 L227.0 592.0 L229.0 592.2 L231.0 593.1 L233.0 593.3 L235.0 591.8 L237.0 592.8 L239.0 591.8 L241.0 593.0 L243.0 592.3 L245.0 593.3 L246.8 593.0 L249.0 596.8 L251.2 592.5 L253.0 592.3 L255.0 591.8 L257.0 592.8 L259.0 591.8 L261.0 592.1 L263.0 592.4 L265.0 592.8 L267.0 592.0 L269.0 591.8 L271.0 593.3 L273.0 592.3 L274.1 592.8 L276.3 618.7 L278.5 592.8 L279.0 592.4 L281.0 592.5 L283.0 592.6 L285.0 592.9 L287.0 592.8 L289.0 592.7 L291.0 592.8 L293.0 593.4 L294.6 592.4 L296.8 600.0 L299.0 592.8 L301.0 592.1 L303.0 592.2 L305.0 593.5 L306.3 592.7 L308.5 611.8 L310.7 592.9 L311.0 591.7 L313.0 592.4 L315.0 592.7 L316.8 592.4 L319.3 597.0 L321.8 592.8 L323.0 591.8 L325.0 592.8 L327.0 592.5 L329.0 592.9 L330.5 593.0 L333.0 597.0 L335.5 592.8 L337.0 591.7 L339.0 591.8 L341.0 592.9 L343.0 593.4 L345.0 592.2 L347.0 592.5 L349.0 592.8 L351.0 592.3 L353.0 592.4 L355.0 592.3 L357.0 592.4 L359.0 592.8 L361.0 592.2 L363.0 592.4 L365.0 593.1 L367.0 591.7 L369.0 592.7 L371.0 593.0 L373.0 592.3 L373.5 592.6 L375.7 599.0 L377.9 592.3 L379.0 592.1 L381.0 592.0 L383.0 592.5 L385.0 593.0 L387.0 591.9 L389.0 592.3 L391.0 592.3 L393.0 593.2 L395.0 592.5 L397.0 593.2 L399.0 592.0 L401.0 592.3 L403.0 592.9 L404.5 592.6 L406.7 599.0 L408.9 592.5 L409.0 592.1 L411.0 591.9 L413.0 592.7 L415.0 592.0 L417.0 593.2 L419.0 593.2 L421.0 592.0 L423.0 592.2 L425.0 593.2 L427.0 592.9 L428.0 592.8 L430.2 600.0 L432.4 592.8 L433.0 591.9 L435.0 592.2 L436.0 592.7 L438.5 601.5 L441.0 592.3 L441.0 592.3 L443.0 592.5 L445.0 592.5 L447.0 592.4 L448.8 592.7 L451.0 601.0 L453.2 592.7 L455.0 593.4 L457.0 593.3 L459.0 593.5 L461.0 592.5 L463.0 593.4 L465.0 593.4 L467.0 592.1 L469.0 593.0 L471.0 593.2 L473.0 592.9 L475.0 592.6 L477.0 592.2 L479.0 592.3 L481.0 592.1 L483.0 591.8 L485.0 592.8 L487.0 592.2 L489.0 593.2 L491.0 591.8 L493.0 593.3 L495.0 592.9 L497.0 593.4 L499.0 593.3 L501.0 593.3 L503.0 592.7 L505.0 591.7 L507.0 593.0 L509.0 592.0 L510.8 592.3 L513.0 598.0 L515.2 593.0 L517.0 592.4 L519.0 593.4 L521.0 592.8 L523.0 592.3 L525.0 592.2 L527.0 593.3 L529.0 592.6 L531.0 593.1 L533.0 592.3 L535.0 592.1 L537.0 592.7 L539.0 593.2 L541.0 592.0 L543.0 593.1 L545.0 593.4 L547.0 593.2 L549.0 593.2 L551.0 591.7 L553.0 592.8 L555.0 593.3 L557.0 591.8 L559.0 592.2 L561.0 592.2 L563.0 592.6 L565.0 592.5 L567.0 592.6 L569.0 593.1 L571.0 591.7 L573.0 591.8 L575.0 591.9 L577.0 591.9 L579.0 591.8 L581.0 593.5 L583.0 593.2 L585.0 591.9 L587.0 592.6 L589.0 592.3 L591.0 592.3 L593.0 592.3 L594.6 592.7 L596.8 598.9 L599.0 592.3 L599.0 592.3 L601.0 592.0 L603.0 592.3 L605.0 591.9 L607.0 592.7 L609.0 593.0 L609.8 593.0 L612.0 598.0 L614.2 592.3 L615.0 592.0 L617.0 592.4 L619.0 592.8 L621.0 593.1 L621.4 592.4 L623.6 611.0 L625.8 592.8 L627.0 592.8 L629.0 592.5 L631.0 592.4 L633.0 592.6 L634.7 592.7 L636.9 597.0 L639.1 592.6 L641.0 592.5 L643.0 592.1 L645.0 592.7 L647.0 593.0 L649.0 591.8 L651.0 592.5 L653.0 592.5 L655.0 593.3 L657.0 593.4 L659.0 592.4 L661.0 593.3 L663.0 593.1 L665.0 592.2 L667.0 592.5 L669.0 591.9 L671.0 593.2 L673.0 592.9 L675.0 593.3 L677.0 593.1 L679.0 592.9 L681.0 593.0 L683.0 592.7 L685.0 591.9 L686.3 592.7 L688.5 600.0 L690.7 592.6 L691.0 592.0 L693.0 593.1 L695.0 591.8 L697.0 591.9 L699.0 591.9 L700.5 592.4 L703.0 599.0 L705.5 592.3 L707.0 593.2 L709.0 591.9 L711.0 593.2 L713.0 592.9 L713.2 592.2 L715.4 605.0 L717.6 592.8 L719.0 592.7 L721.0 593.1 L723.0 591.8 L725.0 593.1 L726.8 592.8 L729.3 596.0 L731.8 592.6 L733.0 593.0 L735.0 593.4 L737.0 591.8 L739.0 592.3 L741.0 592.7 L743.0 593.2 L745.0 592.1 L747.0 592.0 L749.0 592.1 L751.0 592.8 L753.0 593.1 L755.0 592.4 L757.0 592.4 L759.0 592.4 L761.0 592.3 L763.0 592.5 L765.0 591.8 L767.0 592.6 L769.0 593.5 L771.0 592.4 L773.0 593.0 L773.8 592.8 L776.0 611.8 L778.2 592.5 L779.0 593.1 L781.0 592.9 L783.0 592.6 L785.0 592.6 L785.5 592.4 L788.0 600.0 L790.5 592.5 L791.0 592.0 L792.7 592.9 L794.9 611.0 L797.1 592.2 L798.8 592.6 L801.3 598.0 L803.8 592.4 L805.0 592.0 L807.0 592.2 L809.0 592.1 L811.0 592.8 L813.0 592.3 L815.0 592.1 L817.0 592.9 L819.0 593.4 L821.0 592.2 L823.0 593.0 L825.0 592.4 L827.0 593.2 L829.0 592.8 L831.0 592.2 L833.0 592.1 L835.0 591.7 L837.0 592.6 L839.0 592.4 L841.0 592.0 L843.0 592.3 L845.0 592.3 L847.0 593.1 L849.0 592.0 L851.0 593.5 L853.0 592.6 L855.0 592.8 L857.0 592.5 L859.0 593.2 L861.0 593.2 L863.0 592.7 L865.0 592.6 L867.0 593.0 L869.0 593.2 L871.0 592.4 L873.0 593.0 L875.0 593.4 L877.0 592.5 L879.0 592.1 L881.0 592.1 L883.0 593.0 L885.0 592.9 L887.0 593.4 L889.0 593.2 L891.0 592.1 L893.0 592.0 L895.0 592.2 L897.0 592.0 L899.0 593.0 L901.0 593.2 L903.0 593.3 L905.0 592.2 L907.0 593.3 L909.0 592.3 L911.0 592.5 L913.0 593.0 L915.0 591.9 L917.0 591.9 L919.0 593.2 L920.8 592.8 L923.0 597.0 L925.2 592.5 L927.0 592.9 L929.0 591.7 L931.0 592.3 L933.0 592.5 L935.0 592.6 L937.0 592.1 L939.0 592.8 L941.0 593.4 L943.0 592.4 L945.0 592.7 L945.6 592.4 L947.8 601.0 L950.0 592.5 L951.0 592.9 L953.0 591.9 L955.0 593.3 L957.0 593.3 L959.0 591.9 L961.0 609.0 L962.5 636.8" fill="none" stroke="#7eb26d" stroke-width="1.6" stroke-linejoin="round"/>
<line x1="85" y1="715.4" x2="962.5" y2="715.4" stroke="#eab839" stroke-width="2"/>
<text x="77.8" y="567.3" font-size="18" font-weight="normal" text-anchor="end" fill="#d8d9da" stroke="#d8d9da" stroke-width="0.35">100 K</text>
<text x="77.8" y="605.9" font-size="18" font-weight="normal" text-anchor="end" fill="#d8d9da" stroke="#d8d9da" stroke-width="0.35">75 K</text>
<text x="77.8" y="644.5" font-size="18" font-weight="normal" text-anchor="end" fill="#d8d9da" stroke="#d8d9da" stroke-width="0.35">50 K</text>
<text x="77.8" y="683.0999999999999" font-size="18" font-weight="normal" text-anchor="end" fill="#d8d9da" stroke="#d8d9da" stroke-width="0.35">25 K</text>
<text x="77.8" y="721.6999999999999" font-size="18" font-weight="normal" text-anchor="end" fill="#d8d9da" stroke="#d8d9da" stroke-width="0.35">0</text>
<text x="128.5" y="742.7" font-size="18" font-weight="normal" text-anchor="middle" fill="#d8d9da" stroke="#d8d9da" stroke-width="0.35">09:00</text>
<text x="274.98" y="742.7" font-size="18" font-weight="normal" text-anchor="middle" fill="#d8d9da" stroke="#d8d9da" stroke-width="0.35">10:00</text>
<text x="421.46" y="742.7" font-size="18" font-weight="normal" text-anchor="middle" fill="#d8d9da" stroke="#d8d9da" stroke-width="0.35">11:00</text>
<text x="567.9399999999999" y="742.7" font-size="18" font-weight="normal" text-anchor="middle" fill="#d8d9da" stroke="#d8d9da" stroke-width="0.35">12:00</text>
<text x="714.42" y="742.7" font-size="18" font-weight="normal" text-anchor="middle" fill="#d8d9da" stroke="#d8d9da" stroke-width="0.35">13:00</text>
<text x="860.9" y="742.7" font-size="18" font-weight="normal" text-anchor="middle" fill="#d8d9da" stroke="#d8d9da" stroke-width="0.35">14:00</text>
<rect x="37.3" y="761.3" width="111.4" height="37.5" fill="#262628"/>
<rect x="52.3" y="780.6" width="17.7" height="4" rx="1" fill="#7eb26d"/>
<rect x="52.3" y="819.1" width="17.7" height="4" rx="1" fill="#eab839"/>
<text x="80.20" y="785.6" font-size="18" font-weight="normal" fill="#d8d9da" stroke="#d8d9da" stroke-width="0.35" textLength="36.30" lengthAdjust="spacingAndGlyphs">total</text>
<text x="79.59" y="824" font-size="18" font-weight="normal" fill="#d8d9da" stroke="#d8d9da" stroke-width="0.35" textLength="38.43" lengthAdjust="spacingAndGlyphs">error</text>
<path d="M995 835.0h3v8.5h-8.0v-3h5.0z" fill="#5b5b5d"/>
<rect x="1018.5" y="506.5" width="990" height="340" rx="3" ry="3" fill="#212124" stroke="#151517" stroke-width="1"/>
<text x="1403.83" y="534.4" font-size="20" font-weight="bold" fill="#d8d9da" textLength="214.72" lengthAdjust="spacingAndGlyphs">Mesh telemetry received</text>
<path d="M1078.0 592.4 L1079.5 592.2 L1081.0 591.7 L1082.5 589.7 L1084.0 590.8 L1085.5 591.4 L1087.0 591.0 L1088.5 593.9 L1090.0 593.6 L1091.5 594.6 L1093.0 593.9 L1094.5 593.6 L1096.0 592.0 L1097.5 592.0 L1099.0 592.5 L1100.5 594.4 L1102.0 590.9 L1103.5 594.4 L1105.0 590.4 L1106.5 593.5 L1108.0 593.3 L1109.5 592.6 L1111.0 595.6 L1112.5 592.1 L1114.0 592.7 L1115.5 595.1 L1117.0 593.0 L1118.5 590.7 L1120.0 592.6 L1121.5 592.3 L1123.0 591.7 L1124.5 592.8 L1126.0 591.5 L1127.5 593.4 L1129.0 594.4 L1130.5 593.8 L1132.0 594.4 L1133.5 590.8 L1135.0 592.7 L1136.5 593.5 L1138.0 593.1 L1139.5 593.2 L1141.0 595.1 L1142.5 595.3 L1144.0 594.5 L1145.5 590.9 L1147.0 591.9 L1148.5 593.4 L1150.0 594.9 L1151.5 592.3 L1153.0 591.4 L1154.5 590.4 L1156.0 591.8 L1157.5 590.8 L1159.0 589.3 L1160.5 590.7 L1162.0 590.6 L1163.5 592.8 L1165.0 592.4 L1166.5 591.0 L1168.0 589.2 L1169.5 592.5 L1171.0 592.5 L1172.5 592.4 L1174.0 592.1 L1175.5 594.1 L1177.0 592.1 L1178.5 594.8 L1180.0 592.3 L1181.5 594.3 L1183.0 592.8 L1184.5 593.9 L1186.0 590.1 L1187.5 590.2 L1189.0 590.1 L1190.5 591.0 L1192.0 588.7 L1193.5 590.2 L1195.0 590.5 L1196.5 592.1 L1198.0 593.7 L1199.5 596.2 L1201.0 592.5 L1202.5 595.4 L1204.0 591.1 L1205.5 592.7 L1207.0 590.6 L1208.5 591.0 L1210.0 591.8 L1211.5 592.2 L1213.0 589.5 L1214.5 592.1 L1216.0 593.5 L1217.5 591.8 L1219.0 591.2 L1220.5 589.3 L1222.0 591.3 L1223.5 594.7 L1225.0 596.1 L1226.5 595.2 L1228.0 593.0 L1229.5 590.6 L1231.0 592.4 L1232.5 594.4 L1234.0 593.8 L1235.5 594.4 L1237.0 593.2 L1238.5 592.8 L1240.0 593.7 L1241.5 594.4 L1241.5 592.6 L1243.7 605.7 L1245.9 592.3 L1246.0 594.6 L1247.5 590.5 L1249.0 591.2 L1250.5 595.1 L1252.0 591.8 L1253.5 594.3 L1255.0 594.1 L1256.5 595.4 L1258.0 595.6 L1259.5 593.1 L1261.0 594.2 L1262.5 592.5 L1264.0 595.0 L1265.5 594.1 L1267.0 592.4 L1268.5 595.1 L1269.1 593.6 L1271.3 645.0 L1273.5 593.5 L1274.4 593.1 L1276.6 605.0 L1278.8 593.1 L1279.0 594.4 L1280.5 595.8 L1282.0 594.0 L1283.5 593.2 L1285.0 594.2 L1286.5 596.4 L1288.0 594.1 L1289.5 593.8 L1290.5 592.2 L1292.7 606.0 L1294.9 592.9 L1295.5 594.1 L1297.0 592.9 L1298.5 593.8 L1300.0 595.6 L1301.5 594.2 L1302.0 592.2 L1304.2 633.0 L1306.4 592.5 L1307.5 591.8 L1309.0 590.6 L1310.5 590.8 L1311.8 593.0 L1314.0 603.0 L1316.2 592.2 L1316.5 593.6 L1318.0 592.1 L1319.5 593.5 L1321.0 592.4 L1322.5 593.4 L1324.0 593.9 L1325.5 593.0 L1327.0 592.7 L1328.5 593.8 L1330.0 593.8 L1331.5 593.5 L1333.0 590.0 L1334.5 589.2 L1336.0 590.2 L1337.5 592.6 L1339.0 594.7 L1340.5 593.7 L1342.0 594.1 L1343.5 592.4 L1345.0 592.6 L1346.5 593.9 L1348.0 592.6 L1349.5 592.5 L1351.0 595.5 L1352.5 594.4 L1354.0 592.8 L1355.5 591.7 L1357.0 594.0 L1358.5 589.6 L1360.0 590.3 L1361.5 590.6 L1363.0 592.0 L1364.5 593.4 L1366.0 592.0 L1367.5 595.9 L1369.0 592.7 L1369.2 592.3 L1371.4 615.0 L1373.6 593.2 L1375.0 594.1 L1376.5 594.2 L1378.0 593.1 L1379.5 594.7 L1381.0 595.3 L1382.5 596.0 L1384.0 594.2 L1385.5 594.3 L1387.0 593.5 L1388.5 590.9 L1390.0 591.7 L1391.5 592.2 L1393.0 592.2 L1394.5 591.1 L1396.0 592.3 L1397.5 591.0 L1399.0 593.7 L1400.5 592.4 L1402.0 593.0 L1403.5 592.9 L1405.0 592.7 L1406.5 591.6 L1408.0 590.8 L1409.5 592.6 L1411.0 590.3 L1412.5 588.7 L1414.0 591.9 L1415.5 590.0 L1417.0 594.0 L1418.5 591.8 L1420.0 591.4 L1421.5 594.2 L1423.0 594.0 L1424.5 593.0 L1425.6 592.8 L1427.8 614.0 L1430.0 593.5 L1430.5 591.8 L1432.0 593.2 L1433.3 592.2 L1435.8 613.0 L1438.3 592.1 L1439.5 593.8 L1441.0 591.9 L1442.5 592.7 L1444.0 594.8 L1445.5 593.2 L1446.3 593.6 L1448.5 618.0 L1450.7 593.0 L1451.5 593.3 L1453.0 590.4 L1454.5 594.7 L1456.0 595.3 L1457.5 595.0 L1459.0 593.7 L1460.5 594.9 L1462.0 592.3 L1463.5 590.2 L1465.0 592.8 L1466.5 593.6 L1468.0 590.5 L1469.5 592.4 L1471.0 588.8 L1472.5 590.7 L1474.0 591.7 L1475.5 592.7 L1477.0 590.7 L1478.5 592.7 L1480.0 592.1 L1481.5 590.4 L1483.0 591.8 L1484.5 591.4 L1486.0 593.5 L1487.5 593.7 L1489.0 592.9 L1490.5 593.0 L1492.0 593.7 L1493.5 594.3 L1495.0 595.0 L1496.5 595.5 L1498.0 594.8 L1499.5 592.7 L1501.0 591.8 L1502.5 591.5 L1504.0 591.9 L1505.5 590.5 L1507.0 592.8 L1508.5 594.2 L1510.0 595.4 L1511.5 592.4 L1513.0 593.4 L1514.5 592.0 L1516.0 592.2 L1517.5 591.9 L1519.0 593.8 L1520.5 592.5 L1522.0 591.4 L1523.5 591.2 L1525.0 593.5 L1526.5 592.4 L1528.0 594.2 L1529.5 592.0 L1531.0 591.7 L1532.5 592.3 L1534.0 590.3 L1535.5 591.8 L1537.0 590.7 L1538.5 591.4 L1540.0 591.1 L1541.5 594.6 L1543.0 593.0 L1544.5 594.4 L1546.0 596.0 L1547.5 593.7 L1549.0 594.9 L1550.5 590.3 L1552.0 591.6 L1553.5 594.0 L1555.0 592.7 L1556.5 590.2 L1558.0 591.9 L1559.5 592.7 L1561.0 592.0 L1562.5 590.9 L1564.0 592.7 L1565.5 591.0 L1567.0 593.3 L1568.5 594.3 L1570.0 592.9 L1571.5 593.2 L1573.0 594.0 L1574.5 593.5 L1576.0 594.3 L1577.5 594.3 L1579.0 593.4 L1580.5 593.1 L1582.0 589.7 L1583.5 592.3 L1585.0 591.7 L1586.5 593.0 L1588.0 592.8 L1589.5 593.2 L1591.0 591.0 L1592.5 592.8 L1594.0 594.1 L1594.0 593.1 L1596.2 607.0 L1598.4 592.9 L1598.5 590.8 L1600.0 593.5 L1601.5 592.2 L1603.0 593.0 L1604.5 591.5 L1606.0 592.6 L1607.5 593.9 L1609.0 591.9 L1610.5 594.4 L1612.0 595.4 L1613.5 593.4 L1615.0 591.8 L1616.5 593.1 L1618.0 591.5 L1619.5 593.8 L1621.0 592.0 L1622.5 590.0 L1624.0 592.9 L1625.5 592.6 L1627.0 591.7 L1628.5 592.5 L1630.0 590.7 L1631.5 589.9 L1633.0 591.8 L1634.5 589.5 L1636.0 589.8 L1637.5 590.2 L1639.0 589.4 L1640.5 592.5 L1642.0 591.0 L1643.5 591.9 L1645.0 591.5 L1646.5 592.5 L1648.0 593.3 L1649.5 590.9 L1651.0 590.4 L1652.5 591.6 L1654.0 590.6 L1655.5 591.6 L1657.0 594.0 L1658.5 590.2 L1660.0 591.9 L1661.5 590.8 L1663.0 592.6 L1664.5 594.0 L1666.0 594.1 L1667.5 592.6 L1669.0 590.7 L1670.5 592.2 L1672.0 592.7 L1673.5 592.9 L1675.0 590.1 L1676.5 589.8 L1678.0 592.5 L1679.5 593.7 L1681.0 592.0 L1682.5 590.4 L1684.0 591.8 L1685.5 590.9 L1686.8 592.2 L1689.0 609.0 L1691.2 593.7 L1691.5 592.2 L1693.0 594.8 L1694.5 595.3 L1696.0 594.1 L1697.5 593.5 L1699.0 594.6 L1700.5 594.4 L1702.0 593.6 L1703.5 592.5 L1705.0 594.5 L1706.5 592.0 L1708.0 591.4 L1709.5 589.4 L1711.0 594.4 L1712.5 594.3 L1713.8 592.8 L1716.0 619.0 L1718.2 593.5 L1718.5 589.7 L1720.0 593.7 L1721.5 591.0 L1723.0 590.8 L1724.5 591.9 L1726.0 591.8 L1727.5 591.6 L1729.0 592.7 L1730.5 593.0 L1732.0 592.8 L1733.5 593.4 L1735.0 591.9 L1736.5 595.9 L1738.0 593.8 L1739.5 593.8 L1741.0 594.9 L1742.5 594.2 L1742.6 592.2 L1744.8 604.0 L1747.0 593.0 L1747.0 592.4 L1748.5 595.0 L1750.0 594.6 L1751.5 593.0 L1753.0 594.0 L1754.5 591.3 L1756.0 592.5 L1757.5 592.9 L1759.0 592.9 L1760.5 595.0 L1762.0 591.6 L1763.5 594.0 L1765.0 595.4 L1766.5 592.3 L1768.0 592.2 L1769.5 592.0 L1771.0 593.3 L1772.5 594.1 L1774.0 595.0 L1775.5 592.0 L1775.6 592.9 L1777.8 625.0 L1780.0 592.2 L1780.0 592.3 L1781.5 593.5 L1783.0 592.9 L1784.5 595.9 L1785.8 593.4 L1788.0 616.0 L1790.2 592.4 L1790.5 595.4 L1792.0 594.5 L1793.5 593.5 L1794.6 592.0 L1796.8 646.7 L1799.0 592.2 L1799.5 589.9 L1800.6 592.4 L1802.8 610.0 L1805.0 593.6 L1805.5 592.7 L1807.0 591.5 L1808.5 593.3 L1810.0 593.6 L1811.5 593.2 L1813.0 593.8 L1814.5 594.7 L1816.0 593.1 L1817.5 595.5 L1819.0 595.0 L1820.5 592.7 L1822.0 592.1 L1823.5 591.3 L1825.0 591.9 L1826.5 591.3 L1828.0 593.5 L1829.5 590.3 L1831.0 591.3 L1832.5 590.4 L1834.0 594.2 L1835.5 593.1 L1837.0 590.3 L1838.5 593.4 L1840.0 594.6 L1841.5 595.1 L1843.0 591.6 L1844.5 593.3 L1846.0 593.5 L1847.5 593.1 L1849.0 592.1 L1850.5 591.6 L1852.0 592.4 L1853.5 591.9 L1855.0 591.5 L1856.5 592.1 L1858.0 594.6 L1859.5 592.5 L1861.0 590.3 L1862.5 591.0 L1864.0 593.9 L1865.5 591.6 L1867.0 591.1 L1868.5 593.1 L1870.0 591.4 L1871.5 590.3 L1873.0 590.4 L1874.5 592.4 L1876.0 591.9 L1877.5 593.4 L1879.0 592.1 L1880.5 591.3 L1882.0 592.9 L1883.5 591.5 L1885.0 593.5 L1886.5 590.2 L1888.0 590.1 L1889.5 592.6 L1891.0 593.6 L1892.5 595.1 L1894.0 594.0 L1895.5 593.9 L1897.0 596.9 L1898.5 593.1 L1900.0 593.1 L1901.5 594.1 L1903.0 596.4 L1904.5 595.2 L1906.0 595.8 L1907.5 595.3 L1909.0 594.6 L1910.5 595.6 L1912.0 591.4 L1913.5 591.1 L1915.0 593.9 L1916.5 592.6 L1918.0 591.0 L1919.5 591.4 L1921.0 592.4 L1922.5 592.4 L1924.0 592.7 L1925.5 591.1 L1927.0 592.1 L1928.5 595.3 L1930.0 595.6 L1931.5 594.3 L1933.0 593.7 L1934.5 593.4 L1936.0 593.7 L1937.5 592.5 L1939.0 592.8 L1940.5 592.0 L1942.0 590.9 L1943.5 591.3 L1945.0 591.7 L1946.5 592.9 L1948.0 592.3 L1949.5 591.8 L1951.0 593.2 L1952.5 592.6 L1954.0 593.1 L1955.5 595.6 L1957.0 593.1 L1958.5 593.7 L1960.0 593.5 L1961.5 594.3 L1963.0 593.0 L1965.0 605.0 L1966.2 650.0 L1966.2 740 L1078 740 Z" fill="rgba(126,178,109,0.1)"/>
<path d="M1078.0 588.1 L1079.5 589.0 L1081.0 588.5 L1082.5 589.0 L1084.0 587.8 L1085.5 587.3 L1087.0 587.0 L1088.5 588.3 L1090.0 590.5 L1091.5 589.3 L1093.0 590.4 L1094.5 588.5 L1096.0 589.1 L1097.5 588.5 L1099.0 591.7 L1100.5 590.0 L1102.0 587.1 L1103.5 588.9 L1105.0 587.1 L1106.5 591.0 L1108.0 591.8 L1109.5 590.8 L1111.0 592.3 L1112.5 591.4 L1114.0 592.8 L1115.5 591.4 L1117.0 588.5 L1118.5 590.2 L1120.0 587.4 L1121.5 588.3 L1123.0 590.0 L1124.5 589.4 L1126.0 588.9 L1127.5 590.4 L1129.0 589.7 L1130.5 590.0 L1132.0 591.6 L1133.5 590.3 L1135.0 592.6 L1136.5 589.8 L1138.0 590.3 L1139.5 591.2 L1141.0 589.8 L1142.5 592.7 L1144.0 591.2 L1145.5 587.8 L1147.0 586.5 L1148.5 588.4 L1150.0 588.7 L1151.5 588.1 L1153.0 588.9 L1154.5 587.1 L1156.0 586.1 L1157.5 586.7 L1159.0 586.2 L1160.5 587.1 L1162.0 586.4 L1163.5 588.8 L1165.0 586.1 L1166.5 588.2 L1168.0 589.4 L1169.5 587.5 L1171.0 590.3 L1172.5 590.7 L1174.0 587.8 L1175.5 589.5 L1177.0 590.4 L1178.5 591.8 L1180.0 590.9 L1181.5 589.3 L1183.0 590.2 L1184.5 591.3 L1186.0 590.0 L1187.5 588.9 L1189.0 586.0 L1190.5 588.6 L1192.0 586.4 L1193.5 587.9 L1195.0 586.6 L1196.5 591.5 L1198.0 590.9 L1199.5 592.1 L1201.0 588.0 L1202.5 590.8 L1204.0 589.3 L1205.5 588.1 L1207.0 587.1 L1208.5 589.6 L1210.0 586.9 L1211.5 586.5 L1213.0 586.4 L1214.5 590.3 L1216.0 587.5 L1217.5 587.8 L1219.0 586.9 L1220.5 588.3 L1222.0 589.8 L1223.5 591.1 L1225.0 589.1 L1226.5 589.8 L1228.0 588.9 L1229.5 587.2 L1231.0 587.5 L1232.5 592.1 L1234.0 587.6 L1235.5 589.6 L1237.0 589.8 L1238.5 589.7 L1240.0 588.6 L1241.5 590.4 L1243.0 588.7 L1244.5 590.1 L1246.0 587.7 L1247.5 587.6 L1249.0 588.5 L1250.5 592.3 L1252.0 589.3 L1253.5 589.2 L1255.0 591.3 L1256.5 590.5 L1258.0 589.5 L1259.5 590.8 L1261.0 593.3 L1262.5 590.9 L1264.0 589.9 L1265.5 590.8 L1267.0 591.8 L1268.5 589.3 L1269.1 590.4 L1271.3 630.0 L1273.5 589.3 L1274.5 590.4 L1276.0 589.8 L1277.5 589.6 L1279.0 587.6 L1280.5 590.3 L1282.0 588.0 L1283.5 591.2 L1285.0 590.9 L1286.5 589.4 L1288.0 590.8 L1289.5 588.8 L1291.0 588.7 L1292.5 589.7 L1294.0 589.2 L1295.5 589.6 L1297.0 591.0 L1298.5 588.1 L1300.0 592.2 L1301.5 588.1 L1302.0 589.8 L1304.2 615.0 L1306.4 589.2 L1307.5 586.9 L1309.0 585.6 L1310.5 587.3 L1312.0 589.3 L1313.5 588.4 L1315.0 591.4 L1316.5 591.5 L1318.0 586.6 L1319.5 589.8 L1321.0 588.8 L1322.5 591.1 L1324.0 589.0 L1325.5 591.7 L1327.0 590.4 L1328.5 589.1 L1330.0 589.0 L1331.5 588.4 L1333.0 589.4 L1334.5 585.8 L1336.0 587.4 L1337.5 588.0 L1339.0 589.7 L1340.5 591.0 L1342.0 588.0 L1343.5 590.4 L1345.0 591.6 L1346.5 592.4 L1348.0 589.5 L1349.5 592.0 L1351.0 591.2 L1352.5 591.9 L1354.0 590.9 L1355.5 590.4 L1357.0 590.7 L1358.5 586.4 L1360.0 585.8 L1361.5 588.1 L1363.0 591.0 L1364.5 590.4 L1366.0 588.8 L1367.5 592.9 L1369.0 588.5 L1370.5 586.8 L1372.0 586.3 L1373.5 586.9 L1375.0 591.3 L1376.5 587.9 L1378.0 591.5 L1379.5 593.0 L1381.0 592.7 L1382.5 592.7 L1384.0 591.5 L1385.5 591.3 L1387.0 590.6 L1388.5 588.8 L1390.0 586.8 L1391.5 589.3 L1393.0 585.5 L1394.5 586.7 L1396.0 590.3 L1397.5 588.1 L1399.0 588.4 L1400.5 590.8 L1402.0 589.4 L1403.5 587.9 L1405.0 588.0 L1406.5 588.5 L1408.0 587.7 L1409.5 590.9 L1411.0 586.7 L1412.5 588.4 L1414.0 588.9 L1415.5 587.0 L1417.0 591.1 L1418.5 589.2 L1420.0 588.3 L1421.5 588.4 L1423.0 589.0 L1424.5 591.9 L1426.0 588.8 L1427.5 586.6 L1429.0 587.3 L1430.5 587.9 L1432.0 587.5 L1433.5 588.4 L1435.0 586.8 L1436.5 591.0 L1438.0 588.7 L1439.5 589.1 L1441.0 589.3 L1442.5 588.9 L1444.0 591.9 L1445.5 591.0 L1447.0 589.3 L1448.5 589.4 L1450.0 588.2 L1451.5 590.9 L1453.0 589.2 L1454.5 589.8 L1456.0 592.4 L1457.5 588.4 L1459.0 592.4 L1460.5 589.1 L1462.0 591.1 L1463.5 586.7 L1465.0 586.2 L1466.5 589.0 L1468.0 590.0 L1469.5 586.6 L1471.0 587.0 L1472.5 588.5 L1474.0 589.0 L1475.5 590.7 L1477.0 586.5 L1478.5 588.3 L1480.0 590.5 L1481.5 587.5 L1483.0 588.4 L1484.5 586.8 L1486.0 589.6 L1487.5 589.7 L1489.0 592.7 L1490.5 590.0 L1492.0 588.5 L1493.5 592.8 L1495.0 593.3 L1496.5 592.9 L1498.0 591.7 L1499.5 590.1 L1501.0 588.8 L1502.5 588.9 L1504.0 588.4 L1505.5 586.5 L1507.0 588.1 L1508.5 591.7 L1510.0 591.6 L1511.5 588.0 L1513.0 589.1 L1514.5 589.1 L1516.0 587.6 L1517.5 589.0 L1519.0 590.4 L1520.5 588.0 L1522.0 589.6 L1523.5 588.2 L1525.0 590.0 L1526.5 587.7 L1528.0 591.4 L1529.5 589.7 L1531.0 591.7 L1532.5 589.6 L1534.0 589.1 L1535.5 591.7 L1537.0 589.8 L1538.5 588.3 L1540.0 587.3 L1541.5 590.4 L1543.0 588.8 L1544.5 590.7 L1546.0 592.1 L1547.5 591.4 L1549.0 589.7 L1550.5 588.2 L1552.0 589.4 L1553.5 590.1 L1555.0 587.6 L1556.5 586.7 L1558.0 586.1 L1559.5 588.8 L1561.0 587.6 L1562.5 590.2 L1564.0 589.0 L1565.5 590.9 L1567.0 588.6 L1568.5 588.0 L1570.0 589.7 L1571.5 587.1 L1573.0 587.5 L1574.5 589.0 L1576.0 589.8 L1577.5 588.9 L1579.0 588.5 L1580.5 587.6 L1582.0 586.0 L1583.5 590.7 L1585.0 586.5 L1586.5 587.7 L1588.0 588.5 L1589.5 590.5 L1591.0 588.8 L1592.5 590.7 L1594.0 590.3 L1594.2 588.5 L1596.2 598.0 L1598.2 589.6 L1598.5 587.0 L1600.0 587.7 L1601.5 589.2 L1603.0 590.2 L1604.5 589.1 L1606.0 590.8 L1607.5 588.7 L1609.0 590.7 L1610.5 590.5 L1612.0 590.1 L1613.5 588.1 L1615.0 588.4 L1616.5 590.3 L1618.0 589.7 L1619.5 591.2 L1621.0 587.2 L1621.6 588.8 L1623.8 605.0 L1626.0 588.6 L1627.0 586.6 L1628.5 591.0 L1630.0 589.9 L1631.5 586.0 L1633.0 587.9 L1634.5 585.5 L1636.0 585.5 L1637.5 585.2 L1639.0 586.9 L1640.5 587.8 L1642.0 589.5 L1643.5 589.5 L1645.0 588.3 L1646.5 590.5 L1648.0 587.2 L1649.5 587.5 L1651.0 587.0 L1652.5 585.6 L1654.0 589.2 L1655.5 586.4 L1657.0 588.4 L1658.5 589.5 L1660.0 589.2 L1661.5 588.6 L1663.0 589.8 L1664.5 587.9 L1666.0 586.9 L1667.5 588.7 L1669.0 587.4 L1670.5 587.5 L1672.0 591.7 L1673.5 586.2 L1675.0 587.1 L1676.5 588.5 L1678.0 589.7 L1679.5 588.1 L1681.0 589.3 L1682.5 587.4 L1684.0 587.3 L1685.5 589.5 L1687.0 590.2 L1687.0 589.6 L1689.0 600.0 L1691.0 589.8 L1691.5 589.3 L1693.0 590.8 L1694.5 592.3 L1695.5 588.4 L1697.0 582.0 L1698.5 590.3 L1699.0 588.4 L1700.5 592.2 L1702.0 589.0 L1703.5 588.4 L1704.5 588.4 L1706.0 583.0 L1707.5 588.7 L1708.0 588.2 L1709.5 589.1 L1711.0 590.0 L1711.5 589.0 L1713.0 580.8 L1714.5 590.0 L1715.5 588.6 L1717.0 589.1 L1718.5 588.6 L1720.0 590.0 L1721.5 588.9 L1723.0 589.7 L1724.5 589.6 L1726.0 588.9 L1727.5 588.5 L1729.0 589.9 L1730.5 590.7 L1732.0 590.1 L1733.5 592.9 L1735.0 588.0 L1736.5 590.7 L1738.0 591.9 L1739.5 590.2 L1741.0 592.6 L1742.5 587.8 L1744.0 589.7 L1745.5 589.5 L1747.0 588.5 L1748.5 588.2 L1750.0 589.2 L1751.5 590.8 L1753.0 592.0 L1754.5 589.3 L1756.0 587.3 L1757.5 586.6 L1759.0 590.2 L1760.5 590.3 L1762.0 590.0 L1763.5 590.9 L1765.0 590.1 L1766.5 591.9 L1768.0 586.9 L1769.5 591.7 L1771.0 587.0 L1772.5 591.5 L1774.0 591.4 L1775.5 588.6 L1775.6 589.9 L1777.8 612.0 L1780.0 589.4 L1780.0 589.9 L1781.5 588.6 L1783.0 592.3 L1784.5 591.6 L1786.0 590.9 L1787.5 590.0 L1789.0 589.1 L1790.5 592.4 L1792.0 592.4 L1793.5 589.8 L1794.6 589.3 L1796.8 608.0 L1799.0 590.3 L1799.5 589.1 L1801.0 590.2 L1802.5 590.7 L1804.0 586.8 L1805.5 588.8 L1807.0 590.0 L1808.5 588.2 L1810.0 589.4 L1811.5 588.0 L1813.0 591.2 L1814.5 592.2 L1816.0 589.7 L1817.5 590.7 L1819.0 591.5 L1820.5 588.7 L1822.0 589.3 L1823.5 587.8 L1825.0 590.8 L1826.5 587.7 L1828.0 588.5 L1829.5 586.9 L1831.0 587.8 L1832.5 586.4 L1834.0 587.1 L1835.5 590.1 L1837.0 589.0 L1838.5 590.4 L1840.0 590.7 L1841.5 592.0 L1843.0 587.7 L1844.5 590.7 L1846.0 590.1 L1847.5 589.1 L1849.0 586.9 L1850.5 586.4 L1852.0 588.2 L1853.5 588.5 L1855.0 588.1 L1856.5 589.7 L1858.0 588.5 L1859.5 590.2 L1861.0 588.2 L1862.5 588.0 L1864.0 590.5 L1865.5 587.7 L1867.0 588.4 L1868.5 589.5 L1870.0 589.3 L1871.5 585.8 L1873.0 586.5 L1874.5 587.8 L1876.0 589.2 L1877.5 589.6 L1879.0 586.3 L1880.5 589.5 L1882.0 588.0 L1883.5 587.6 L1885.0 587.6 L1886.5 588.6 L1888.0 588.6 L1889.5 588.0 L1891.0 587.5 L1892.5 592.1 L1894.0 592.0 L1895.5 591.6 L1897.0 590.8 L1898.5 591.1 L1900.0 591.7 L1901.5 590.0 L1903.0 590.3 L1904.5 592.8 L1906.0 590.4 L1907.5 589.1 L1909.0 593.0 L1910.5 589.1 L1912.0 588.1 L1913.5 589.8 L1915.0 589.5 L1916.5 589.5 L1918.0 585.7 L1919.5 588.4 L1921.0 591.7 L1922.5 589.8 L1924.0 591.7 L1925.5 589.1 L1927.0 589.6 L1928.5 592.4 L1930.0 590.0 L1931.5 591.9 L1933.0 589.0 L1934.5 591.7 L1936.0 590.4 L1937.5 589.9 L1939.0 589.3 L1940.5 587.7 L1942.0 588.7 L1943.5 586.1 L1945.0 589.8 L1946.5 587.8 L1948.0 589.4 L1949.5 590.5 L1951.0 590.0 L1952.5 590.8 L1954.0 590.5 L1955.5 590.5 L1957.0 589.1 L1958.5 588.9 L1960.0 589.0 L1961.5 588.9 L1963.0 589.0 L1965.0 600.0 L1966.2 625.0 L1966.2 740 L1078 740 Z" fill="rgba(234,184,57,0.1)"/>
<path d="M1078.0 594.3 L1079.5 593.9 L1081.0 594.5 L1082.5 592.8 L1084.0 594.6 L1085.5 594.1 L1087.0 592.8 L1088.5 594.9 L1090.0 595.4 L1091.5 597.3 L1093.0 594.3 L1094.5 594.4 L1096.0 593.9 L1097.5 595.3 L1099.0 596.4 L1100.5 593.4 L1102.0 596.2 L1103.5 596.8 L1105.0 594.5 L1106.5 595.2 L1108.0 594.8 L1109.5 593.3 L1111.0 596.4 L1112.5 594.3 L1114.0 595.2 L1115.5 594.7 L1117.0 593.4 L1118.5 594.0 L1120.0 592.6 L1121.5 593.8 L1123.0 595.2 L1124.5 595.6 L1126.0 594.8 L1127.5 596.7 L1129.0 595.8 L1130.5 596.2 L1132.0 597.4 L1133.5 596.1 L1135.0 597.1 L1136.5 595.1 L1138.0 594.9 L1139.5 594.6 L1141.0 596.1 L1142.5 595.9 L1144.0 597.8 L1145.5 594.2 L1147.0 594.3 L1148.5 593.3 L1150.0 596.7 L1151.5 594.9 L1153.0 592.2 L1154.5 591.9 L1156.0 594.5 L1157.5 592.1 L1159.0 594.3 L1160.5 593.3 L1162.0 591.7 L1163.5 595.2 L1165.0 594.3 L1166.5 592.2 L1168.0 591.5 L1169.5 592.8 L1171.0 596.4 L1172.5 595.2 L1174.0 593.8 L1175.5 595.5 L1177.0 593.2 L1178.5 594.3 L1180.0 596.7 L1181.5 595.1 L1183.0 596.2 L1184.5 595.0 L1186.0 592.7 L1187.5 593.8 L1189.0 591.4 L1190.5 593.0 L1192.0 591.0 L1193.5 592.1 L1195.0 592.6 L1196.5 594.1 L1198.0 597.4 L1199.5 597.5 L1201.0 593.9 L1202.5 597.0 L1204.0 593.4 L1205.5 592.8 L1207.0 594.3 L1208.5 594.6 L1210.0 591.6 L1211.5 594.4 L1213.0 592.3 L1214.5 594.1 L1216.0 595.5 L1217.5 593.8 L1219.0 593.4 L1220.5 591.6 L1222.0 593.6 L1223.5 596.5 L1225.0 595.5 L1226.5 595.8 L1228.0 594.6 L1229.5 594.2 L1231.0 596.6 L1232.5 595.4 L1234.0 594.8 L1235.5 597.1 L1237.0 595.1 L1238.5 593.5 L1240.0 597.1 L1241.5 597.0 L1243.0 593.8 L1244.5 593.0 L1246.0 596.0 L1247.5 595.2 L1249.0 592.9 L1250.5 597.3 L1252.0 595.9 L1253.5 595.0 L1255.0 595.8 L1256.5 595.4 L1258.0 595.3 L1259.5 597.7 L1261.0 596.1 L1262.5 596.0 L1264.0 595.5 L1265.5 596.5 L1267.0 596.0 L1268.5 595.0 L1269.1 594.9 L1271.3 642.5 L1273.5 595.6 L1274.5 595.8 L1276.0 596.7 L1277.5 596.8 L1279.0 595.3 L1280.5 595.4 L1282.0 596.5 L1283.5 594.5 L1285.0 594.2 L1286.5 596.1 L1288.0 594.9 L1289.5 594.0 L1290.5 595.6 L1292.7 610.0 L1294.9 595.2 L1295.5 594.7 L1297.0 596.2 L1298.5 596.4 L1300.0 597.7 L1301.5 595.6 L1302.0 594.4 L1304.2 627.0 L1306.4 594.1 L1307.5 591.2 L1309.0 591.3 L1310.5 595.7 L1312.0 596.0 L1313.5 595.6 L1315.0 593.6 L1316.5 595.3 L1318.0 593.8 L1319.5 595.8 L1321.0 595.1 L1322.5 596.9 L1324.0 593.7 L1325.2 595.5 L1327.7 600.0 L1330.2 595.3 L1331.5 595.5 L1333.0 594.3 L1334.5 594.0 L1336.0 592.4 L1337.5 594.5 L1339.0 597.1 L1340.5 596.4 L1342.0 594.3 L1343.5 595.8 L1345.0 597.5 L1346.5 596.2 L1348.0 595.3 L1349.5 595.2 L1351.0 597.2 L1352.5 597.4 L1353.1 595.0 L1355.3 602.0 L1357.5 594.6 L1358.5 594.7 L1360.0 593.5 L1361.5 593.0 L1363.0 595.9 L1364.5 595.9 L1366.0 594.8 L1367.5 597.5 L1369.0 593.3 L1370.5 594.8 L1372.0 592.0 L1373.5 594.6 L1375.0 595.7 L1376.5 594.1 L1378.0 596.6 L1379.5 596.9 L1381.0 596.4 L1382.5 598.2 L1384.0 596.4 L1385.5 594.5 L1387.0 593.9 L1388.5 593.9 L1390.0 592.1 L1391.5 592.5 L1393.0 593.9 L1394.5 593.4 L1396.0 593.4 L1397.5 594.9 L1399.0 594.2 L1400.5 595.6 L1401.4 594.4 L1403.6 608.0 L1405.8 595.1 L1406.5 596.3 L1408.0 595.1 L1409.5 594.1 L1411.0 593.4 L1412.5 591.7 L1414.0 591.6 L1415.5 592.7 L1417.0 595.5 L1418.5 594.6 L1420.0 594.5 L1421.5 596.4 L1423.0 593.8 L1424.5 594.5 L1425.6 594.9 L1427.8 610.0 L1430.0 595.0 L1430.5 593.1 L1432.0 594.6 L1433.3 595.0 L1435.8 613.0 L1438.3 595.2 L1439.5 596.0 L1441.0 592.9 L1442.5 593.5 L1444.0 596.9 L1445.5 594.8 L1446.3 594.3 L1448.5 608.0 L1450.7 594.4 L1451.5 596.2 L1453.0 592.4 L1454.5 594.3 L1456.0 595.8 L1457.5 594.2 L1459.0 597.4 L1460.5 595.1 L1462.0 593.8 L1463.5 592.0 L1465.0 594.0 L1466.5 594.2 L1468.0 594.0 L1469.5 593.6 L1471.0 593.5 L1472.5 595.0 L1474.0 596.1 L1475.5 594.9 L1477.0 593.8 L1478.5 592.8 L1480.0 593.2 L1481.5 593.4 L1483.0 595.7 L1484.5 593.0 L1486.0 593.4 L1487.5 594.8 L1489.0 597.0 L1490.5 594.4 L1492.0 596.0 L1493.5 597.3 L1495.0 596.5 L1496.5 597.9 L1498.0 597.0 L1499.5 593.3 L1501.0 594.8 L1502.5 594.3 L1504.0 592.2 L1505.5 592.7 L1507.0 595.5 L1508.5 597.6 L1509.6 595.6 L1511.8 607.0 L1514.0 595.5 L1514.5 595.0 L1516.0 594.5 L1517.5 593.1 L1519.0 594.7 L1520.5 592.8 L1522.0 594.5 L1523.5 594.7 L1525.0 595.6 L1526.5 594.2 L1528.0 594.1 L1529.5 596.6 L1531.0 596.9 L1532.5 597.3 L1534.0 593.9 L1535.5 596.3 L1537.0 593.8 L1538.5 595.7 L1540.0 595.7 L1541.5 595.4 L1543.0 593.2 L1544.5 594.6 L1546.0 596.5 L1547.5 595.7 L1549.0 595.2 L1550.5 592.4 L1552.0 595.6 L1553.5 593.0 L1555.0 595.8 L1556.5 592.2 L1558.0 592.4 L1559.5 595.9 L1561.0 592.7 L1562.5 592.4 L1564.0 595.7 L1565.5 595.3 L1567.0 596.0 L1568.5 595.3 L1570.0 594.6 L1571.5 594.2 L1573.0 596.0 L1574.5 594.6 L1576.0 596.1 L1577.5 594.9 L1579.0 594.4 L1580.5 595.2 L1582.0 593.9 L1583.5 595.4 L1585.0 595.0 L1586.5 594.4 L1588.0 592.9 L1589.5 593.9 L1591.0 594.7 L1592.5 596.6 L1594.0 593.8 L1595.5 595.1 L1597.0 596.8 L1598.5 594.0 L1600.0 595.3 L1601.5 593.1 L1603.0 595.6 L1604.5 594.4 L1606.0 595.4 L1607.5 593.9 L1608.8 595.4 L1611.0 604.0 L1613.2 594.0 L1613.5 595.6 L1615.0 594.9 L1616.5 595.3 L1618.0 595.5 L1619.5 593.5 L1621.0 593.6 L1621.6 594.1 L1623.8 631.0 L1626.0 594.4 L1627.0 592.7 L1628.5 594.8 L1630.0 592.1 L1631.5 592.2 L1633.0 593.1 L1634.5 593.5 L1636.0 591.7 L1637.5 591.7 L1639.0 591.5 L1640.5 595.2 L1642.0 595.5 L1643.5 593.3 L1645.0 595.0 L1646.5 593.4 L1648.0 592.7 L1649.5 592.7 L1651.0 593.6 L1652.5 592.5 L1654.0 592.5 L1655.5 594.0 L1657.0 594.1 L1658.5 594.5 L1660.0 592.0 L1661.5 594.3 L1663.0 594.7 L1664.5 593.8 L1666.0 594.5 L1667.5 593.8 L1669.0 593.5 L1670.5 594.1 L1672.0 595.5 L1673.5 592.5 L1675.0 592.1 L1676.5 593.3 L1678.0 594.5 L1679.5 595.3 L1681.0 594.8 L1682.5 592.9 L1684.0 593.4 L1685.5 592.1 L1687.0 595.2 L1688.5 597.1 L1690.0 596.5 L1691.5 594.1 L1693.0 595.3 L1694.5 597.8 L1696.0 596.1 L1697.5 597.1 L1699.0 597.1 L1700.5 595.2 L1701.1 594.7 L1703.3 607.0 L1705.5 595.0 L1706.5 593.1 L1708.0 595.2 L1709.5 592.8 L1711.0 596.0 L1712.5 594.0 L1714.0 593.9 L1714.0 594.1 L1716.0 605.0 L1718.0 594.9 L1718.5 592.0 L1720.0 595.1 L1721.5 594.7 L1723.0 595.1 L1724.5 593.5 L1726.0 594.1 L1727.5 596.1 L1729.0 596.3 L1730.5 597.0 L1732.0 594.5 L1733.5 595.1 L1735.0 594.0 L1736.5 595.1 L1738.0 596.4 L1739.5 595.8 L1741.0 596.8 L1742.5 593.4 L1744.0 592.9 L1745.5 594.2 L1747.0 594.8 L1748.5 597.1 L1750.0 596.5 L1751.5 593.5 L1753.0 595.0 L1754.5 596.0 L1756.0 592.9 L1757.5 594.9 L1759.0 594.1 L1760.5 595.8 L1762.0 594.5 L1763.5 595.6 L1765.0 596.3 L1766.5 594.1 L1768.0 594.5 L1769.5 596.3 L1771.0 593.0 L1772.5 594.8 L1774.0 597.3 L1775.5 593.9 L1775.6 594.1 L1777.8 634.7 L1780.0 594.8 L1780.0 594.1 L1781.5 594.2 L1783.0 597.8 L1784.5 597.4 L1786.0 598.1 L1787.5 598.2 L1789.0 595.3 L1790.5 595.6 L1792.0 596.6 L1793.5 595.3 L1794.6 595.1 L1796.8 622.0 L1799.0 594.9 L1799.5 595.0 L1801.0 596.5 L1802.5 595.1 L1804.0 594.8 L1805.5 592.6 L1807.0 595.8 L1808.5 597.0 L1810.0 595.2 L1811.5 595.2 L1813.0 596.6 L1814.5 595.4 L1816.0 595.2 L1817.5 594.7 L1819.0 595.9 L1820.5 595.1 L1822.0 593.2 L1823.5 594.3 L1825.0 595.7 L1826.5 595.4 L1828.0 592.9 L1829.5 595.1 L1831.0 593.5 L1832.5 593.1 L1834.0 595.0 L1835.5 595.2 L1837.0 593.6 L1838.5 593.8 L1840.0 597.0 L1841.5 595.8 L1843.0 595.3 L1844.5 596.5 L1846.0 596.6 L1847.5 594.2 L1849.0 594.2 L1850.5 593.7 L1852.0 592.7 L1853.5 592.4 L1855.0 591.0 L1856.5 593.8 L1858.0 595.3 L1859.5 593.3 L1861.0 592.7 L1862.5 596.1 L1864.0 595.6 L1865.5 594.2 L1867.0 596.2 L1868.5 595.4 L1870.0 595.4 L1871.5 593.4 L1873.0 593.2 L1874.5 592.8 L1876.0 594.2 L1877.5 594.6 L1879.0 591.1 L1880.5 595.5 L1882.0 592.4 L1883.5 594.1 L1885.0 592.8 L1886.5 593.8 L1888.0 593.1 L1889.5 591.5 L1891.0 596.6 L1892.5 596.1 L1894.0 597.2 L1895.5 597.6 L1897.0 596.8 L1898.5 596.0 L1900.0 596.8 L1901.5 596.6 L1903.0 596.5 L1904.5 597.3 L1906.0 595.4 L1907.5 594.6 L1909.0 595.9 L1910.5 594.6 L1912.0 592.9 L1913.5 595.6 L1915.0 593.9 L1916.5 594.6 L1918.0 593.3 L1919.5 592.0 L1921.0 597.1 L1922.5 596.9 L1924.0 594.8 L1925.5 596.0 L1927.0 593.9 L1928.5 595.8 L1930.0 597.6 L1931.5 595.4 L1933.0 595.1 L1934.5 597.0 L1936.0 595.5 L1937.5 593.7 L1939.0 594.7 L1940.5 593.8 L1942.0 592.6 L1943.5 591.6 L1945.0 595.3 L1946.5 594.8 L1948.0 593.5 L1949.5 593.5 L1949.8 595.0 L1952.0 611.0 L1954.2 594.6 L1955.5 597.8 L1957.0 595.6 L1958.5 593.2 L1960.0 595.2 L1961.5 595.9 L1963.0 596.2 L1965.0 600.0 L1966.2 681.4 L1966.2 740 L1078 740 Z" fill="rgba(110,208,224,0.1)"/>
<line x1="1078" y1="561.00" x2="1966.2" y2="561.00" stroke="rgba(216,217,218,0.2)" stroke-width="1.8"/>
<line x1="1078" y1="605.75" x2="1966.2" y2="605.75" stroke="rgba(216,217,218,0.2)" stroke-width="1.8"/>
<line x1="1078" y1="650.50" x2="1966.2" y2="650.50" stroke="rgba(216,217,218,0.2)" stroke-width="1.8"/>
<line x1="1078" y1="695.25" x2="1966.2" y2="695.25" stroke="rgba(216,217,218,0.2)" stroke-width="1.8"/>
<line x1="1078" y1="740.00" x2="1966.2" y2="740.00" stroke="rgba(216,217,218,0.2)" stroke-width="1.8"/>
<line x1="1123.50" y1="561" x2="1123.50" y2="740" stroke="rgba(216,217,218,0.2)" stroke-width="1.8"/>
<line x1="1271.58" y1="561" x2="1271.58" y2="740" stroke="rgba(216,217,218,0.2)" stroke-width="1.8"/>
<line x1="1419.66" y1="561" x2="1419.66" y2="740" stroke="rgba(216,217,218,0.2)" stroke-width="1.8"/>
<line x1="1567.74" y1="561" x2="1567.74" y2="740" stroke="rgba(216,217,218,0.2)" stroke-width="1.8"/>
<line x1="1715.82" y1="561" x2="1715.82" y2="740" stroke="rgba(216,217,218,0.2)" stroke-width="1.8"/>
<line x1="1863.90" y1="561" x2="1863.90" y2="740" stroke="rgba(216,217,218,0.2)" stroke-width="1.8"/>
<path d="M1078.0 592.4 L1079.5 592.2 L1081.0 591.7 L1082.5 589.7 L1084.0 590.8 L1085.5 591.4 L1087.0 591.0 L1088.5 593.9 L1090.0 593.6 L1091.5 594.6 L1093.0 593.9 L1094.5 593.6 L1096.0 592.0 L1097.5 592.0 L1099.0 592.5 L1100.5 594.4 L1102.0 590.9 L1103.5 594.4 L1105.0 590.4 L1106.5 593.5 L1108.0 593.3 L1109.5 592.6 L1111.0 595.6 L1112.5 592.1 L1114.0 592.7 L1115.5 595.1 L1117.0 593.0 L1118.5 590.7 L1120.0 592.6 L1121.5 592.3 L1123.0 591.7 L1124.5 592.8 L1126.0 591.5 L1127.5 593.4 L1129.0 594.4 L1130.5 593.8 L1132.0 594.4 L1133.5 590.8 L1135.0 592.7 L1136.5 593.5 L1138.0 593.1 L1139.5 593.2 L1141.0 595.1 L1142.5 595.3 L1144.0 594.5 L1145.5 590.9 L1147.0 591.9 L1148.5 593.4 L1150.0 594.9 L1151.5 592.3 L1153.0 591.4 L1154.5 590.4 L1156.0 591.8 L1157.5 590.8 L1159.0 589.3 L1160.5 590.7 L1162.0 590.6 L1163.5 592.8 L1165.0 592.4 L1166.5 591.0 L1168.0 589.2 L1169.5 592.5 L1171.0 592.5 L1172.5 592.4 L1174.0 592.1 L1175.5 594.1 L1177.0 592.1 L1178.5 594.8 L1180.0 592.3 L1181.5 594.3 L1183.0 592.8 L1184.5 593.9 L1186.0 590.1 L1187.5 590.2 L1189.0 590.1 L1190.5 591.0 L1192.0 588.7 L1193.5 590.2 L1195.0 590.5 L1196.5 592.1 L1198.0 593.7 L1199.5 596.2 L1201.0 592.5 L1202.5 595.4 L1204.0 591.1 L1205.5 592.7 L1207.0 590.6 L1208.5 591.0 L1210.0 591.8 L1211.5 592.2 L1213.0 589.5 L1214.5 592.1 L1216.0 593.5 L1217.5 591.8 L1219.0 591.2 L1220.5 589.3 L1222.0 591.3 L1223.5 594.7 L1225.0 596.1 L1226.5 595.2 L1228.0 593.0 L1229.5 590.6 L1231.0 592.4 L1232.5 594.4 L1234.0 593.8 L1235.5 594.4 L1237.0 593.2 L1238.5 592.8 L1240.0 593.7 L1241.5 594.4 L1241.5 592.6 L1243.7 605.7 L1245.9 592.3 L1246.0 594.6 L1247.5 590.5 L1249.0 591.2 L1250.5 595.1 L1252.0 591.8 L1253.5 594.3 L1255.0 594.1 L1256.5 595.4 L1258.0 595.6 L1259.5 593.1 L1261.0 594.2 L1262.5 592.5 L1264.0 595.0 L1265.5 594.1 L1267.0 592.4 L1268.5 595.1 L1269.1 593.6 L1271.3 645.0 L1273.5 593.5 L1274.4 593.1 L1276.6 605.0 L1278.8 593.1 L1279.0 594.4 L1280.5 595.8 L1282.0 594.0 L1283.5 593.2 L1285.0 594.2 L1286.5 596.4 L1288.0 594.1 L1289.5 593.8 L1290.5 592.2 L1292.7 606.0 L1294.9 592.9 L1295.5 594.1 L1297.0 592.9 L1298.5 593.8 L1300.0 595.6 L1301.5 594.2 L1302.0 592.2 L1304.2 633.0 L1306.4 592.5 L1307.5 591.8 L1309.0 590.6 L1310.5 590.8 L1311.8 593.0 L1314.0 603.0 L1316.2 592.2 L1316.5 593.6 L1318.0 592.1 L1319.5 593.5 L1321.0 592.4 L1322.5 593.4 L1324.0 593.9 L1325.5 593.0 L1327.0 592.7 L1328.5 593.8 L1330.0 593.8 L1331.5 593.5 L1333.0 590.0 L1334.5 589.2 L1336.0 590.2 L1337.5 592.6 L1339.0 594.7 L1340.5 593.7 L1342.0 594.1 L1343.5 592.4 L1345.0 592.6 L1346.5 593.9 L1348.0 592.6 L1349.5 592.5 L1351.0 595.5 L1352.5 594.4 L1354.0 592.8 L1355.5 591.7 L1357.0 594.0 L1358.5 589.6 L1360.0 590.3 L1361.5 590.6 L1363.0 592.0 L1364.5 593.4 L1366.0 592.0 L1367.5 595.9 L1369.0 592.7 L1369.2 592.3 L1371.4 615.0 L1373.6 593.2 L1375.0 594.1 L1376.5 594.2 L1378.0 593.1 L1379.5 594.7 L1381.0 595.3 L1382.5 596.0 L1384.0 594.2 L1385.5 594.3 L1387.0 593.5 L1388.5 590.9 L1390.0 591.7 L1391.5 592.2 L1393.0 592.2 L1394.5 591.1 L1396.0 592.3 L1397.5 591.0 L1399.0 593.7 L1400.5 592.4 L1402.0 593.0 L1403.5 592.9 L1405.0 592.7 L1406.5 591.6 L1408.0 590.8 L1409.5 592.6 L1411.0 590.3 L1412.5 588.7 L1414.0 591.9 L1415.5 590.0 L1417.0 594.0 L1418.5 591.8 L1420.0 591.4 L1421.5 594.2 L1423.0 594.0 L1424.5 593.0 L1425.6 592.8 L1427.8 614.0 L1430.0 593.5 L1430.5 591.8 L1432.0 593.2 L1433.3 592.2 L1435.8 613.0 L1438.3 592.1 L1439.5 593.8 L1441.0 591.9 L1442.5 592.7 L1444.0 594.8 L1445.5 593.2 L1446.3 593.6 L1448.5 618.0 L1450.7 593.0 L1451.5 593.3 L1453.0 590.4 L1454.5 594.7 L1456.0 595.3 L1457.5 595.0 L1459.0 593.7 L1460.5 594.9 L1462.0 592.3 L1463.5 590.2 L1465.0 592.8 L1466.5 593.6 L1468.0 590.5 L1469.5 592.4 L1471.0 588.8 L1472.5 590.7 L1474.0 591.7 L1475.5 592.7 L1477.0 590.7 L1478.5 592.7 L1480.0 592.1 L1481.5 590.4 L1483.0 591.8 L1484.5 591.4 L1486.0 593.5 L1487.5 593.7 L1489.0 592.9 L1490.5 593.0 L1492.0 593.7 L1493.5 594.3 L1495.0 595.0 L1496.5 595.5 L1498.0 594.8 L1499.5 592.7 L1501.0 591.8 L1502.5 591.5 L1504.0 591.9 L1505.5 590.5 L1507.0 592.8 L1508.5 594.2 L1510.0 595.4 L1511.5 592.4 L1513.0 593.4 L1514.5 592.0 L1516.0 592.2 L1517.5 591.9 L1519.0 593.8 L1520.5 592.5 L1522.0 591.4 L1523.5 591.2 L1525.0 593.5 L1526.5 592.4 L1528.0 594.2 L1529.5 592.0 L1531.0 591.7 L1532.5 592.3 L1534.0 590.3 L1535.5 591.8 L1537.0 590.7 L1538.5 591.4 L1540.0 591.1 L1541.5 594.6 L1543.0 593.0 L1544.5 594.4 L1546.0 596.0 L1547.5 593.7 L1549.0 594.9 L1550.5 590.3 L1552.0 591.6 L1553.5 594.0 L1555.0 592.7 L1556.5 590.2 L1558.0 591.9 L1559.5 592.7 L1561.0 592.0 L1562.5 590.9 L1564.0 592.7 L1565.5 591.0 L1567.0 593.3 L1568.5 594.3 L1570.0 592.9 L1571.5 593.2 L1573.0 594.0 L1574.5 593.5 L1576.0 594.3 L1577.5 594.3 L1579.0 593.4 L1580.5 593.1 L1582.0 589.7 L1583.5 592.3 L1585.0 591.7 L1586.5 593.0 L1588.0 592.8 L1589.5 593.2 L1591.0 591.0 L1592.5 592.8 L1594.0 594.1 L1594.0 593.1 L1596.2 607.0 L1598.4 592.9 L1598.5 590.8 L1600.0 593.5 L1601.5 592.2 L1603.0 593.0 L1604.5 591.5 L1606.0 592.6 L1607.5 593.9 L1609.0 591.9 L1610.5 594.4 L1612.0 595.4 L1613.5 593.4 L1615.0 591.8 L1616.5 593.1 L1618.0 591.5 L1619.5 593.8 L1621.0 592.0 L1622.5 590.0 L1624.0 592.9 L1625.5 592.6 L1627.0 591.7 L1628.5 592.5 L1630.0 590.7 L1631.5 589.9 L1633.0 591.8 L1634.5 589.5 L1636.0 589.8 L1637.5 590.2 L1639.0 589.4 L1640.5 592.5 L1642.0 591.0 L1643.5 591.9 L1645.0 591.5 L1646.5 592.5 L1648.0 593.3 L1649.5 590.9 L1651.0 590.4 L1652.5 591.6 L1654.0 590.6 L1655.5 591.6 L1657.0 594.0 L1658.5 590.2 L1660.0 591.9 L1661.5 590.8 L1663.0 592.6 L1664.5 594.0 L1666.0 594.1 L1667.5 592.6 L1669.0 590.7 L1670.5 592.2 L1672.0 592.7 L1673.5 592.9 L1675.0 590.1 L1676.5 589.8 L1678.0 592.5 L1679.5 593.7 L1681.0 592.0 L1682.5 590.4 L1684.0 591.8 L1685.5 590.9 L1686.8 592.2 L1689.0 609.0 L1691.2 593.7 L1691.5 592.2 L1693.0 594.8 L1694.5 595.3 L1696.0 594.1 L1697.5 593.5 L1699.0 594.6 L1700.5 594.4 L1702.0 593.6 L1703.5 592.5 L1705.0 594.5 L1706.5 592.0 L1708.0 591.4 L1709.5 589.4 L1711.0 594.4 L1712.5 594.3 L1713.8 592.8 L1716.0 619.0 L1718.2 593.5 L1718.5 589.7 L1720.0 593.7 L1721.5 591.0 L1723.0 590.8 L1724.5 591.9 L1726.0 591.8 L1727.5 591.6 L1729.0 592.7 L1730.5 593.0 L1732.0 592.8 L1733.5 593.4 L1735.0 591.9 L1736.5 595.9 L1738.0 593.8 L1739.5 593.8 L1741.0 594.9 L1742.5 594.2 L1742.6 592.2 L1744.8 604.0 L1747.0 593.0 L1747.0 592.4 L1748.5 595.0 L1750.0 594.6 L1751.5 593.0 L1753.0 594.0 L1754.5 591.3 L1756.0 592.5 L1757.5 592.9 L1759.0 592.9 L1760.5 595.0 L1762.0 591.6 L1763.5 594.0 L1765.0 595.4 L1766.5 592.3 L1768.0 592.2 L1769.5 592.0 L1771.0 593.3 L1772.5 594.1 L1774.0 595.0 L1775.5 592.0 L1775.6 592.9 L1777.8 625.0 L1780.0 592.2 L1780.0 592.3 L1781.5 593.5 L1783.0 592.9 L1784.5 595.9 L1785.8 593.4 L1788.0 616.0 L1790.2 592.4 L1790.5 595.4 L1792.0 594.5 L1793.5 593.5 L1794.6 592.0 L1796.8 646.7 L1799.0 592.2 L1799.5 589.9 L1800.6 592.4 L1802.8 610.0 L1805.0 593.6 L1805.5 592.7 L1807.0 591.5 L1808.5 593.3 L1810.0 593.6 L1811.5 593.2 L1813.0 593.8 L1814.5 594.7 L1816.0 593.1 L1817.5 595.5 L1819.0 595.0 L1820.5 592.7 L1822.0 592.1 L1823.5 591.3 L1825.0 591.9 L1826.5 591.3 L1828.0 593.5 L1829.5 590.3 L1831.0 591.3 L1832.5 590.4 L1834.0 594.2 L1835.5 593.1 L1837.0 590.3 L1838.5 593.4 L1840.0 594.6 L1841.5 595.1 L1843.0 591.6 L1844.5 593.3 L1846.0 593.5 L1847.5 593.1 L1849.0 592.1 L1850.5 591.6 L1852.0 592.4 L1853.5 591.9 L1855.0 591.5 L1856.5 592.1 L1858.0 594.6 L1859.5 592.5 L1861.0 590.3 L1862.5 591.0 L1864.0 593.9 L1865.5 591.6 L1867.0 591.1 L1868.5 593.1 L1870.0 591.4 L1871.5 590.3 L1873.0 590.4 L1874.5 592.4 L1876.0 591.9 L1877.5 593.4 L1879.0 592.1 L1880.5 591.3 L1882.0 592.9 L1883.5 591.5 L1885.0 593.5 L1886.5 590.2 L1888.0 590.1 L1889.5 592.6 L1891.0 593.6 L1892.5 595.1 L1894.0 594.0 L1895.5 593.9 L1897.0 596.9 L1898.5 593.1 L1900.0 593.1 L1901.5 594.1 L1903.0 596.4 L1904.5 595.2 L1906.0 595.8 L1907.5 595.3 L1909.0 594.6 L1910.5 595.6 L1912.0 591.4 L1913.5 591.1 L1915.0 593.9 L1916.5 592.6 L1918.0 591.0 L1919.5 591.4 L1921.0 592.4 L1922.5 592.4 L1924.0 592.7 L1925.5 591.1 L1927.0 592.1 L1928.5 595.3 L1930.0 595.6 L1931.5 594.3 L1933.0 593.7 L1934.5 593.4 L1936.0 593.7 L1937.5 592.5 L1939.0 592.8 L1940.5 592.0 L1942.0 590.9 L1943.5 591.3 L1945.0 591.7 L1946.5 592.9 L1948.0 592.3 L1949.5 591.8 L1951.0 593.2 L1952.5 592.6 L1954.0 593.1 L1955.5 595.6 L1957.0 593.1 L1958.5 593.7 L1960.0 593.5 L1961.5 594.3 L1963.0 593.0 L1965.0 605.0 L1966.2 650.0" fill="none" stroke="#7eb26d" stroke-width="1.5" stroke-linejoin="round"/>
<path d="M1078.0 588.1 L1079.5 589.0 L1081.0 588.5 L1082.5 589.0 L1084.0 587.8 L1085.5 587.3 L1087.0 587.0 L1088.5 588.3 L1090.0 590.5 L1091.5 589.3 L1093.0 590.4 L1094.5 588.5 L1096.0 589.1 L1097.5 588.5 L1099.0 591.7 L1100.5 590.0 L1102.0 587.1 L1103.5 588.9 L1105.0 587.1 L1106.5 591.0 L1108.0 591.8 L1109.5 590.8 L1111.0 592.3 L1112.5 591.4 L1114.0 592.8 L1115.5 591.4 L1117.0 588.5 L1118.5 590.2 L1120.0 587.4 L1121.5 588.3 L1123.0 590.0 L1124.5 589.4 L1126.0 588.9 L1127.5 590.4 L1129.0 589.7 L1130.5 590.0 L1132.0 591.6 L1133.5 590.3 L1135.0 592.6 L1136.5 589.8 L1138.0 590.3 L1139.5 591.2 L1141.0 589.8 L1142.5 592.7 L1144.0 591.2 L1145.5 587.8 L1147.0 586.5 L1148.5 588.4 L1150.0 588.7 L1151.5 588.1 L1153.0 588.9 L1154.5 587.1 L1156.0 586.1 L1157.5 586.7 L1159.0 586.2 L1160.5 587.1 L1162.0 586.4 L1163.5 588.8 L1165.0 586.1 L1166.5 588.2 L1168.0 589.4 L1169.5 587.5 L1171.0 590.3 L1172.5 590.7 L1174.0 587.8 L1175.5 589.5 L1177.0 590.4 L1178.5 591.8 L1180.0 590.9 L1181.5 589.3 L1183.0 590.2 L1184.5 591.3 L1186.0 590.0 L1187.5 588.9 L1189.0 586.0 L1190.5 588.6 L1192.0 586.4 L1193.5 587.9 L1195.0 586.6 L1196.5 591.5 L1198.0 590.9 L1199.5 592.1 L1201.0 588.0 L1202.5 590.8 L1204.0 589.3 L1205.5 588.1 L1207.0 587.1 L1208.5 589.6 L1210.0 586.9 L1211.5 586.5 L1213.0 586.4 L1214.5 590.3 L1216.0 587.5 L1217.5 587.8 L1219.0 586.9 L1220.5 588.3 L1222.0 589.8 L1223.5 591.1 L1225.0 589.1 L1226.5 589.8 L1228.0 588.9 L1229.5 587.2 L1231.0 587.5 L1232.5 592.1 L1234.0 587.6 L1235.5 589.6 L1237.0 589.8 L1238.5 589.7 L1240.0 588.6 L1241.5 590.4 L1243.0 588.7 L1244.5 590.1 L1246.0 587.7 L1247.5 587.6 L1249.0 588.5 L1250.5 592.3 L1252.0 589.3 L1253.5 589.2 L1255.0 591.3 L1256.5 590.5 L1258.0 589.5 L1259.5 590.8 L1261.0 593.3 L1262.5 590.9 L1264.0 589.9 L1265.5 590.8 L1267.0 591.8 L1268.5 589.3 L1269.1 590.4 L1271.3 630.0 L1273.5 589.3 L1274.5 590.4 L1276.0 589.8 L1277.5 589.6 L1279.0 587.6 L1280.5 590.3 L1282.0 588.0 L1283.5 591.2 L1285.0 590.9 L1286.5 589.4 L1288.0 590.8 L1289.5 588.8 L1291.0 588.7 L1292.5 589.7 L1294.0 589.2 L1295.5 589.6 L1297.0 591.0 L1298.5 588.1 L1300.0 592.2 L1301.5 588.1 L1302.0 589.8 L1304.2 615.0 L1306.4 589.2 L1307.5 586.9 L1309.0 585.6 L1310.5 587.3 L1312.0 589.3 L1313.5 588.4 L1315.0 591.4 L1316.5 591.5 L1318.0 586.6 L1319.5 589.8 L1321.0 588.8 L1322.5 591.1 L1324.0 589.0 L1325.5 591.7 L1327.0 590.4 L1328.5 589.1 L1330.0 589.0 L1331.5 588.4 L1333.0 589.4 L1334.5 585.8 L1336.0 587.4 L1337.5 588.0 L1339.0 589.7 L1340.5 591.0 L1342.0 588.0 L1343.5 590.4 L1345.0 591.6 L1346.5 592.4 L1348.0 589.5 L1349.5 592.0 L1351.0 591.2 L1352.5 591.9 L1354.0 590.9 L1355.5 590.4 L1357.0 590.7 L1358.5 586.4 L1360.0 585.8 L1361.5 588.1 L1363.0 591.0 L1364.5 590.4 L1366.0 588.8 L1367.5 592.9 L1369.0 588.5 L1370.5 586.8 L1372.0 586.3 L1373.5 586.9 L1375.0 591.3 L1376.5 587.9 L1378.0 591.5 L1379.5 593.0 L1381.0 592.7 L1382.5 592.7 L1384.0 591.5 L1385.5 591.3 L1387.0 590.6 L1388.5 588.8 L1390.0 586.8 L1391.5 589.3 L1393.0 585.5 L1394.5 586.7 L1396.0 590.3 L1397.5 588.1 L1399.0 588.4 L1400.5 590.8 L1402.0 589.4 L1403.5 587.9 L1405.0 588.0 L1406.5 588.5 L1408.0 587.7 L1409.5 590.9 L1411.0 586.7 L1412.5 588.4 L1414.0 588.9 L1415.5 587.0 L1417.0 591.1 L1418.5 589.2 L1420.0 588.3 L1421.5 588.4 L1423.0 589.0 L1424.5 591.9 L1426.0 588.8 L1427.5 586.6 L1429.0 587.3 L1430.5 587.9 L1432.0 587.5 L1433.5 588.4 L1435.0 586.8 L1436.5 591.0 L1438.0 588.7 L1439.5 589.1 L1441.0 589.3 L1442.5 588.9 L1444.0 591.9 L1445.5 591.0 L1447.0 589.3 L1448.5 589.4 L1450.0 588.2 L1451.5 590.9 L1453.0 589.2 L1454.5 589.8 L1456.0 592.4 L1457.5 588.4 L1459.0 592.4 L1460.5 589.1 L1462.0 591.1 L1463.5 586.7 L1465.0 586.2 L1466.5 589.0 L1468.0 590.0 L1469.5 586.6 L1471.0 587.0 L1472.5 588.5 L1474.0 589.0 L1475.5 590.7 L1477.0 586.5 L1478.5 588.3 L1480.0 590.5 L1481.5 587.5 L1483.0 588.4 L1484.5 586.8 L1486.0 589.6 L1487.5 589.7 L1489.0 592.7 L1490.5 590.0 L1492.0 588.5 L1493.5 592.8 L1495.0 593.3 L1496.5 592.9 L1498.0 591.7 L1499.5 590.1 L1501.0 588.8 L1502.5 588.9 L1504.0 588.4 L1505.5 586.5 L1507.0 588.1 L1508.5 591.7 L1510.0 591.6 L1511.5 588.0 L1513.0 589.1 L1514.5 589.1 L1516.0 587.6 L1517.5 589.0 L1519.0 590.4 L1520.5 588.0 L1522.0 589.6 L1523.5 588.2 L1525.0 590.0 L1526.5 587.7 L1528.0 591.4 L1529.5 589.7 L1531.0 591.7 L1532.5 589.6 L1534.0 589.1 L1535.5 591.7 L1537.0 589.8 L1538.5 588.3 L1540.0 587.3 L1541.5 590.4 L1543.0 588.8 L1544.5 590.7 L1546.0 592.1 L1547.5 591.4 L1549.0 589.7 L1550.5 588.2 L1552.0 589.4 L1553.5 590.1 L1555.0 587.6 L1556.5 586.7 L1558.0 586.1 L1559.5 588.8 L1561.0 587.6 L1562.5 590.2 L1564.0 589.0 L1565.5 590.9 L1567.0 588.6 L1568.5 588.0 L1570.0 589.7 L1571.5 587.1 L1573.0 587.5 L1574.5 589.0 L1576.0 589.8 L1577.5 588.9 L1579.0 588.5 L1580.5 587.6 L1582.0 586.0 L1583.5 590.7 L1585.0 586.5 L1586.5 587.7 L1588.0 588.5 L1589.5 590.5 L1591.0 588.8 L1592.5 590.7 L1594.0 590.3 L1594.2 588.5 L1596.2 598.0 L1598.2 589.6 L1598.5 587.0 L1600.0 587.7 L1601.5 589.2 L1603.0 590.2 L1604.5 589.1 L1606.0 590.8 L1607.5 588.7 L1609.0 590.7 L1610.5 590.5 L1612.0 590.1 L1613.5 588.1 L1615.0 588.4 L1616.5 590.3 L1618.0 589.7 L1619.5 591.2 L1621.0 587.2 L1621.6 588.8 L1623.8 605.0 L1626.0 588.6 L1627.0 586.6 L1628.5 591.0 L1630.0 589.9 L1631.5 586.0 L1633.0 587.9 L1634.5 585.5 L1636.0 585.5 L1637.5 585.2 L1639.0 586.9 L1640.5 587.8 L1642.0 589.5 L1643.5 589.5 L1645.0 588.3 L1646.5 590.5 L1648.0 587.2 L1649.5 587.5 L1651.0 587.0 L1652.5 585.6 L1654.0 589.2 L1655.5 586.4 L1657.0 588.4 L1658.5 589.5 L1660.0 589.2 L1661.5 588.6 L1663.0 589.8 L1664.5 587.9 L1666.0 586.9 L1667.5 588.7 L1669.0 587.4 L1670.5 587.5 L1672.0 591.7 L1673.5 586.2 L1675.0 587.1 L1676.5 588.5 L1678.0 589.7 L1679.5 588.1 L1681.0 589.3 L1682.5 587.4 L1684.0 587.3 L1685.5 589.5 L1687.0 590.2 L1687.0 589.6 L1689.0 600.0 L1691.0 589.8 L1691.5 589.3 L1693.0 590.8 L1694.5 592.3 L1695.5 588.4 L1697.0 582.0 L1698.5 590.3 L1699.0 588.4 L1700.5 592.2 L1702.0 589.0 L1703.5 588.4 L1704.5 588.4 L1706.0 583.0 L1707.5 588.7 L1708.0 588.2 L1709.5 589.1 L1711.0 590.0 L1711.5 589.0 L1713.0 580.8 L1714.5 590.0 L1715.5 588.6 L1717.0 589.1 L1718.5 588.6 L1720.0 590.0 L1721.5 588.9 L1723.0 589.7 L1724.5 589.6 L1726.0 588.9 L1727.5 588.5 L1729.0 589.9 L1730.5 590.7 L1732.0 590.1 L1733.5 592.9 L1735.0 588.0 L1736.5 590.7 L1738.0 591.9 L1739.5 590.2 L1741.0 592.6 L1742.5 587.8 L1744.0 589.7 L1745.5 589.5 L1747.0 588.5 L1748.5 588.2 L1750.0 589.2 L1751.5 590.8 L1753.0 592.0 L1754.5 589.3 L1756.0 587.3 L1757.5 586.6 L1759.0 590.2 L1760.5 590.3 L1762.0 590.0 L1763.5 590.9 L1765.0 590.1 L1766.5 591.9 L1768.0 586.9 L1769.5 591.7 L1771.0 587.0 L1772.5 591.5 L1774.0 591.4 L1775.5 588.6 L1775.6 589.9 L1777.8 612.0 L1780.0 589.4 L1780.0 589.9 L1781.5 588.6 L1783.0 592.3 L1784.5 591.6 L1786.0 590.9 L1787.5 590.0 L1789.0 589.1 L1790.5 592.4 L1792.0 592.4 L1793.5 589.8 L1794.6 589.3 L1796.8 608.0 L1799.0 590.3 L1799.5 589.1 L1801.0 590.2 L1802.5 590.7 L1804.0 586.8 L1805.5 588.8 L1807.0 590.0 L1808.5 588.2 L1810.0 589.4 L1811.5 588.0 L1813.0 591.2 L1814.5 592.2 L1816.0 589.7 L1817.5 590.7 L1819.0 591.5 L1820.5 588.7 L1822.0 589.3 L1823.5 587.8 L1825.0 590.8 L1826.5 587.7 L1828.0 588.5 L1829.5 586.9 L1831.0 587.8 L1832.5 586.4 L1834.0 587.1 L1835.5 590.1 L1837.0 589.0 L1838.5 590.4 L1840.0 590.7 L1841.5 592.0 L1843.0 587.7 L1844.5 590.7 L1846.0 590.1 L1847.5 589.1 L1849.0 586.9 L1850.5 586.4 L1852.0 588.2 L1853.5 588.5 L1855.0 588.1 L1856.5 589.7 L1858.0 588.5 L1859.5 590.2 L1861.0 588.2 L1862.5 588.0 L1864.0 590.5 L1865.5 587.7 L1867.0 588.4 L1868.5 589.5 L1870.0 589.3 L1871.5 585.8 L1873.0 586.5 L1874.5 587.8 L1876.0 589.2 L1877.5 589.6 L1879.0 586.3 L1880.5 589.5 L1882.0 588.0 L1883.5 587.6 L1885.0 587.6 L1886.5 588.6 L1888.0 588.6 L1889.5 588.0 L1891.0 587.5 L1892.5 592.1 L1894.0 592.0 L1895.5 591.6 L1897.0 590.8 L1898.5 591.1 L1900.0 591.7 L1901.5 590.0 L1903.0 590.3 L1904.5 592.8 L1906.0 590.4 L1907.5 589.1 L1909.0 593.0 L1910.5 589.1 L1912.0 588.1 L1913.5 589.8 L1915.0 589.5 L1916.5 589.5 L1918.0 585.7 L1919.5 588.4 L1921.0 591.7 L1922.5 589.8 L1924.0 591.7 L1925.5 589.1 L1927.0 589.6 L1928.5 592.4 L1930.0 590.0 L1931.5 591.9 L1933.0 589.0 L1934.5 591.7 L1936.0 590.4 L1937.5 589.9 L1939.0 589.3 L1940.5 587.7 L1942.0 588.7 L1943.5 586.1 L1945.0 589.8 L1946.5 587.8 L1948.0 589.4 L1949.5 590.5 L1951.0 590.0 L1952.5 590.8 L1954.0 590.5 L1955.5 590.5 L1957.0 589.1 L1958.5 588.9 L1960.0 589.0 L1961.5 588.9 L1963.0 589.0 L1965.0 600.0 L1966.2 625.0" fill="none" stroke="#eab839" stroke-width="1.5" stroke-linejoin="round"/>
<path d="M1078.0 594.3 L1079.5 593.9 L1081.0 594.5 L1082.5 592.8 L1084.0 594.6 L1085.5 594.1 L1087.0 592.8 L1088.5 594.9 L1090.0 595.4 L1091.5 597.3 L1093.0 594.3 L1094.5 594.4 L1096.0 593.9 L1097.5 595.3 L1099.0 596.4 L1100.5 593.4 L1102.0 596.2 L1103.5 596.8 L1105.0 594.5 L1106.5 595.2 L1108.0 594.8 L1109.5 593.3 L1111.0 596.4 L1112.5 594.3 L1114.0 595.2 L1115.5 594.7 L1117.0 593.4 L1118.5 594.0 L1120.0 592.6 L1121.5 593.8 L1123.0 595.2 L1124.5 595.6 L1126.0 594.8 L1127.5 596.7 L1129.0 595.8 L1130.5 596.2 L1132.0 597.4 L1133.5 596.1 L1135.0 597.1 L1136.5 595.1 L1138.0 594.9 L1139.5 594.6 L1141.0 596.1 L1142.5 595.9 L1144.0 597.8 L1145.5 594.2 L1147.0 594.3 L1148.5 593.3 L1150.0 596.7 L1151.5 594.9 L1153.0 592.2 L1154.5 591.9 L1156.0 594.5 L1157.5 592.1 L1159.0 594.3 L1160.5 593.3 L1162.0 591.7 L1163.5 595.2 L1165.0 594.3 L1166.5 592.2 L1168.0 591.5 L1169.5 592.8 L1171.0 596.4 L1172.5 595.2 L1174.0 593.8 L1175.5 595.5 L1177.0 593.2 L1178.5 594.3 L1180.0 596.7 L1181.5 595.1 L1183.0 596.2 L1184.5 595.0 L1186.0 592.7 L1187.5 593.8 L1189.0 591.4 L1190.5 593.0 L1192.0 591.0 L1193.5 592.1 L1195.0 592.6 L1196.5 594.1 L1198.0 597.4 L1199.5 597.5 L1201.0 593.9 L1202.5 597.0 L1204.0 593.4 L1205.5 592.8 L1207.0 594.3 L1208.5 594.6 L1210.0 591.6 L1211.5 594.4 L1213.0 592.3 L1214.5 594.1 L1216.0 595.5 L1217.5 593.8 L1219.0 593.4 L1220.5 591.6 L1222.0 593.6 L1223.5 596.5 L1225.0 595.5 L1226.5 595.8 L1228.0 594.6 L1229.5 594.2 L1231.0 596.6 L1232.5 595.4 L1234.0 594.8 L1235.5 597.1 L1237.0 595.1 L1238.5 593.5 L1240.0 597.1 L1241.5 597.0 L1243.0 593.8 L1244.5 593.0 L1246.0 596.0 L1247.5 595.2 L1249.0 592.9 L1250.5 597.3 L1252.0 595.9 L1253.5 595.0 L1255.0 595.8 L1256.5 595.4 L1258.0 595.3 L1259.5 597.7 L1261.0 596.1 L1262.5 596.0 L1264.0 595.5 L1265.5 596.5 L1267.0 596.0 L1268.5 595.0 L1269.1 594.9 L1271.3 642.5 L1273.5 595.6 L1274.5 595.8 L1276.0 596.7 L1277.5 596.8 L1279.0 595.3 L1280.5 595.4 L1282.0 596.5 L1283.5 594.5 L1285.0 594.2 L1286.5 596.1 L1288.0 594.9 L1289.5 594.0 L1290.5 595.6 L1292.7 610.0 L1294.9 595.2 L1295.5 594.7 L1297.0 596.2 L1298.5 596.4 L1300.0 597.7 L1301.5 595.6 L1302.0 594.4 L1304.2 627.0 L1306.4 594.1 L1307.5 591.2 L1309.0 591.3 L1310.5 595.7 L1312.0 596.0 L1313.5 595.6 L1315.0 593.6 L1316.5 595.3 L1318.0 593.8 L1319.5 595.8 L1321.0 595.1 L1322.5 596.9 L1324.0 593.7 L1325.2 595.5 L1327.7 600.0 L1330.2 595.3 L1331.5 595.5 L1333.0 594.3 L1334.5 594.0 L1336.0 592.4 L1337.5 594.5 L1339.0 597.1 L1340.5 596.4 L1342.0 594.3 L1343.5 595.8 L1345.0 597.5 L1346.5 596.2 L1348.0 595.3 L1349.5 595.2 L1351.0 597.2 L1352.5 597.4 L1353.1 595.0 L1355.3 602.0 L1357.5 594.6 L1358.5 594.7 L1360.0 593.5 L1361.5 593.0 L1363.0 595.9 L1364.5 595.9 L1366.0 594.8 L1367.5 597.5 L1369.0 593.3 L1370.5 594.8 L1372.0 592.0 L1373.5 594.6 L1375.0 595.7 L1376.5 594.1 L1378.0 596.6 L1379.5 596.9 L1381.0 596.4 L1382.5 598.2 L1384.0 596.4 L1385.5 594.5 L1387.0 593.9 L1388.5 593.9 L1390.0 592.1 L1391.5 592.5 L1393.0 593.9 L1394.5 593.4 L1396.0 593.4 L1397.5 594.9 L1399.0 594.2 L1400.5 595.6 L1401.4 594.4 L1403.6 608.0 L1405.8 595.1 L1406.5 596.3 L1408.0 595.1 L1409.5 594.1 L1411.0 593.4 L1412.5 591.7 L1414.0 591.6 L1415.5 592.7 L1417.0 595.5 L1418.5 594.6 L1420.0 594.5 L1421.5 596.4 L1423.0 593.8 L1424.5 594.5 L1425.6 594.9 L1427.8 610.0 L1430.0 595.0 L1430.5 593.1 L1432.0 594.6 L1433.3 595.0 L1435.8 613.0 L1438.3 595.2 L1439.5 596.0 L1441.0 592.9 L1442.5 593.5 L1444.0 596.9 L1445.5 594.8 L1446.3 594.3 L1448.5 608.0 L1450.7 594.4 L1451.5 596.2 L1453.0 592.4 L1454.5 594.3 L1456.0 595.8 L1457.5 594.2 L1459.0 597.4 L1460.5 595.1 L1462.0 593.8 L1463.5 592.0 L1465.0 594.0 L1466.5 594.2 L1468.0 594.0 L1469.5 593.6 L1471.0 593.5 L1472.5 595.0 L1474.0 596.1 L1475.5 594.9 L1477.0 593.8 L1478.5 592.8 L1480.0 593.2 L1481.5 593.4 L1483.0 595.7 L1484.5 593.0 L1486.0 593.4 L1487.5 594.8 L1489.0 597.0 L1490.5 594.4 L1492.0 596.0 L1493.5 597.3 L1495.0 596.5 L1496.5 597.9 L1498.0 597.0 L1499.5 593.3 L1501.0 594.8 L1502.5 594.3 L1504.0 592.2 L1505.5 592.7 L1507.0 595.5 L1508.5 597.6 L1509.6 595.6 L1511.8 607.0 L1514.0 595.5 L1514.5 595.0 L1516.0 594.5 L1517.5 593.1 L1519.0 594.7 L1520.5 592.8 L1522.0 594.5 L1523.5 594.7 L1525.0 595.6 L1526.5 594.2 L1528.0 594.1 L1529.5 596.6 L1531.0 596.9 L1532.5 597.3 L1534.0 593.9 L1535.5 596.3 L1537.0 593.8 L1538.5 595.7 L1540.0 595.7 L1541.5 595.4 L1543.0 593.2 L1544.5 594.6 L1546.0 596.5 L1547.5 595.7 L1549.0 595.2 L1550.5 592.4 L1552.0 595.6 L1553.5 593.0 L1555.0 595.8 L1556.5 592.2 L1558.0 592.4 L1559.5 595.9 L1561.0 592.7 L1562.5 592.4 L1564.0 595.7 L1565.5 595.3 L1567.0 596.0 L1568.5 595.3 L1570.0 594.6 L1571.5 594.2 L1573.0 596.0 L1574.5 594.6 L1576.0 596.1 L1577.5 594.9 L1579.0 594.4 L1580.5 595.2 L1582.0 593.9 L1583.5 595.4 L1585.0 595.0 L1586.5 594.4 L1588.0 592.9 L1589.5 593.9 L1591.0 594.7 L1592.5 596.6 L1594.0 593.8 L1595.5 595.1 L1597.0 596.8 L1598.5 594.0 L1600.0 595.3 L1601.5 593.1 L1603.0 595.6 L1604.5 594.4 L1606.0 595.4 L1607.5 593.9 L1608.8 595.4 L1611.0 604.0 L1613.2 594.0 L1613.5 595.6 L1615.0 594.9 L1616.5 595.3 L1618.0 595.5 L1619.5 593.5 L1621.0 593.6 L1621.6 594.1 L1623.8 631.0 L1626.0 594.4 L1627.0 592.7 L1628.5 594.8 L1630.0 592.1 L1631.5 592.2 L1633.0 593.1 L1634.5 593.5 L1636.0 591.7 L1637.5 591.7 L1639.0 591.5 L1640.5 595.2 L1642.0 595.5 L1643.5 593.3 L1645.0 595.0 L1646.5 593.4 L1648.0 592.7 L1649.5 592.7 L1651.0 593.6 L1652.5 592.5 L1654.0 592.5 L1655.5 594.0 L1657.0 594.1 L1658.5 594.5 L1660.0 592.0 L1661.5 594.3 L1663.0 594.7 L1664.5 593.8 L1666.0 594.5 L1667.5 593.8 L1669.0 593.5 L1670.5 594.1 L1672.0 595.5 L1673.5 592.5 L1675.0 592.1 L1676.5 593.3 L1678.0 594.5 L1679.5 595.3 L1681.0 594.8 L1682.5 592.9 L1684.0 593.4 L1685.5 592.1 L1687.0 595.2 L1688.5 597.1 L1690.0 596.5 L1691.5 594.1 L1693.0 595.3 L1694.5 597.8 L1696.0 596.1 L1697.5 597.1 L1699.0 597.1 L1700.5 595.2 L1701.1 594.7 L1703.3 607.0 L1705.5 595.0 L1706.5 593.1 L1708.0 595.2 L1709.5 592.8 L1711.0 596.0 L1712.5 594.0 L1714.0 593.9 L1714.0 594.1 L1716.0 605.0 L1718.0 594.9 L1718.5 592.0 L1720.0 595.1 L1721.5 594.7 L1723.0 595.1 L1724.5 593.5 L1726.0 594.1 L1727.5 596.1 L1729.0 596.3 L1730.5 597.0 L1732.0 594.5 L1733.5 595.1 L1735.0 594.0 L1736.5 595.1 L1738.0 596.4 L1739.5 595.8 L1741.0 596.8 L1742.5 593.4 L1744.0 592.9 L1745.5 594.2 L1747.0 594.8 L1748.5 597.1 L1750.0 596.5 L1751.5 593.5 L1753.0 595.0 L1754.5 596.0 L1756.0 592.9 L1757.5 594.9 L1759.0 594.1 L1760.5 595.8 L1762.0 594.5 L1763.5 595.6 L1765.0 596.3 L1766.5 594.1 L1768.0 594.5 L1769.5 596.3 L1771.0 593.0 L1772.5 594.8 L1774.0 597.3 L1775.5 593.9 L1775.6 594.1 L1777.8 634.7 L1780.0 594.8 L1780.0 594.1 L1781.5 594.2 L1783.0 597.8 L1784.5 597.4 L1786.0 598.1 L1787.5 598.2 L1789.0 595.3 L1790.5 595.6 L1792.0 596.6 L1793.5 595.3 L1794.6 595.1 L1796.8 622.0 L1799.0 594.9 L1799.5 595.0 L1801.0 596.5 L1802.5 595.1 L1804.0 594.8 L1805.5 592.6 L1807.0 595.8 L1808.5 597.0 L1810.0 595.2 L1811.5 595.2 L1813.0 596.6 L1814.5 595.4 L1816.0 595.2 L1817.5 594.7 L1819.0 595.9 L1820.5 595.1 L1822.0 593.2 L1823.5 594.3 L1825.0 595.7 L1826.5 595.4 L1828.0 592.9 L1829.5 595.1 L1831.0 593.5 L1832.5 593.1 L1834.0 595.0 L1835.5 595.2 L1837.0 593.6 L1838.5 593.8 L1840.0 597.0 L1841.5 595.8 L1843.0 595.3 L1844.5 596.5 L1846.0 596.6 L1847.5 594.2 L1849.0 594.2 L1850.5 593.7 L1852.0 592.7 L1853.5 592.4 L1855.0 591.0 L1856.5 593.8 L1858.0 595.3 L1859.5 593.3 L1861.0 592.7 L1862.5 596.1 L1864.0 595.6 L1865.5 594.2 L1867.0 596.2 L1868.5 595.4 L1870.0 595.4 L1871.5 593.4 L1873.0 593.2 L1874.5 592.8 L1876.0 594.2 L1877.5 594.6 L1879.0 591.1 L1880.5 595.5 L1882.0 592.4 L1883.5 594.1 L1885.0 592.8 L1886.5 593.8 L1888.0 593.1 L1889.5 591.5 L1891.0 596.6 L1892.5 596.1 L1894.0 597.2 L1895.5 597.6 L1897.0 596.8 L1898.5 596.0 L1900.0 596.8 L1901.5 596.6 L1903.0 596.5 L1904.5 597.3 L1906.0 595.4 L1907.5 594.6 L1909.0 595.9 L1910.5 594.6 L1912.0 592.9 L1913.5 595.6 L1915.0 593.9 L1916.5 594.6 L1918.0 593.3 L1919.5 592.0 L1921.0 597.1 L1922.5 596.9 L1924.0 594.8 L1925.5 596.0 L1927.0 593.9 L1928.5 595.8 L1930.0 597.6 L1931.5 595.4 L1933.0 595.1 L1934.5 597.0 L1936.0 595.5 L1937.5 593.7 L1939.0 594.7 L1940.5 593.8 L1942.0 592.6 L1943.5 591.6 L1945.0 595.3 L1946.5 594.8 L1948.0 593.5 L1949.5 593.5 L1949.8 595.0 L1952.0 611.0 L1954.2 594.6 L1955.5 597.8 L1957.0 595.6 L1958.5 593.2 L1960.0 595.2 L1961.5 595.9 L1963.0 596.2 L1965.0 600.0 L1966.2 681.4" fill="none" stroke="#6ed0e0" stroke-width="1.5" stroke-linejoin="round"/>
<text x="1071.5" y="567.3" font-size="18" font-weight="normal" text-anchor="end" fill="#d8d9da" stroke="#d8d9da" stroke-width="0.35">30 K</text>
<text x="1071.5" y="612.05" font-size="18" font-weight="normal" text-anchor="end" fill="#d8d9da" stroke="#d8d9da" stroke-width="0.35">25 K</text>
<text x="1071.5" y="656.8" font-size="18" font-weight="normal" text-anchor="end" fill="#d8d9da" stroke="#d8d9da" stroke-width="0.35">20 K</text>
<text x="1071.5" y="701.55" font-size="18" font-weight="normal" text-anchor="end" fill="#d8d9da" stroke="#d8d9da" stroke-width="0.35">15 K</text>
<text x="1071.5" y="746.3" font-size="18" font-weight="normal" text-anchor="end" fill="#d8d9da" stroke="#d8d9da" stroke-width="0.35">10 K</text>
<text x="1123.5" y="766.3" font-size="18" font-weight="normal" text-anchor="middle" fill="#d8d9da" stroke="#d8d9da" stroke-width="0.35">09:00</text>
<text x="1271.58" y="766.3" font-size="18" font-weight="normal" text-anchor="middle" fill="#d8d9da" stroke="#d8d9da" stroke-width="0.35">10:00</text>
<text x="1419.66" y="766.3" font-size="18" font-weight="normal" text-anchor="middle" fill="#d8d9da" stroke="#d8d9da" stroke-width="0.35">11:00</text>
<text x="1567.74" y="766.3" font-size="18" font-weight="normal" text-anchor="middle" fill="#d8d9da" stroke="#d8d9da" stroke-width="0.35">12:00</text>
<text x="1715.8200000000002" y="766.3" font-size="18" font-weight="normal" text-anchor="middle" fill="#d8d9da" stroke="#d8d9da" stroke-width="0.35">13:00</text>
<text x="1863.9" y="766.3" font-size="18" font-weight="normal" text-anchor="middle" fill="#d8d9da" stroke="#d8d9da" stroke-width="0.35">14:00</text>
<rect x="1048.4" y="795.6" width="17.6" height="4" rx="1" fill="#7eb26d"/>
<rect x="1426.4" y="795.6" width="17.4" height="4" rx="1" fill="#eab839"/>
<rect x="1048.4" y="823.6" width="17.6" height="4" rx="1" fill="#6ed0e0"/>
<text x="1071.61" y="803.6" font-size="18" font-weight="normal" fill="#d8d9da" stroke="#d8d9da" stroke-width="0.35" textLength="339.97" lengthAdjust="spacingAndGlyphs">1651932a-1d28-11e9-bbb6-42010a800275</text>
<text x="1449.31" y="803.6" font-size="18" font-weight="normal" fill="#d8d9da" stroke="#d8d9da" stroke-width="0.35" textLength="340.37" lengthAdjust="spacingAndGlyphs">1650290b-1d28-11e9-bbb6-42010a800275</text>
<text x="1071.61" y="831.6" font-size="18" font-weight="normal" fill="#d8d9da" stroke="#d8d9da" stroke-width="0.35" textLength="339.67" lengthAdjust="spacingAndGlyphs">16516aea-1d28-11e9-bbb6-42010a800275</text>
<path d="M1999 835.0h3v8.5h-8.0v-3h5.0z" fill="#5b5b5d"/>
</svg>
</body></html>
